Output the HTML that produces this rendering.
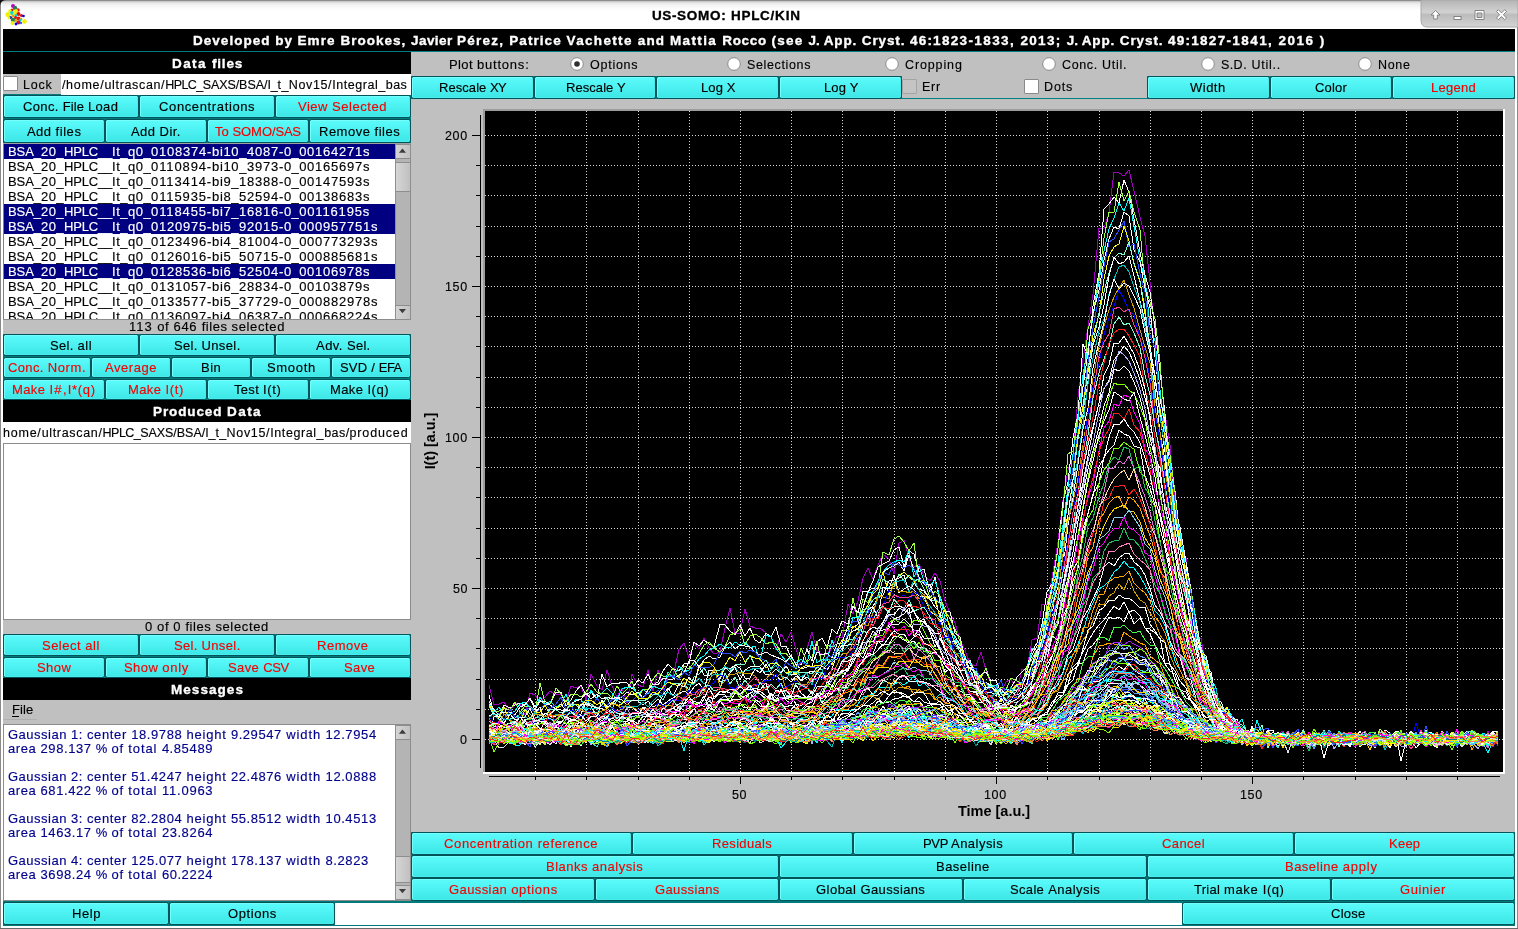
<!DOCTYPE html>
<html><head><meta charset="utf-8"><title>US-SOMO: HPLC/KIN</title><style>
html,body{margin:0;padding:0;background:#c0c0c0;}
body{width:1518px;height:929px;position:relative;overflow:hidden;font-family:"Liberation Sans",sans-serif;}
.r{position:absolute;}
.t{position:absolute;white-space:nowrap;will-change:transform;line-height:16px;height:16px;font-family:"Liberation Sans",sans-serif;}
.b{position:absolute;background:#007878;}
.b::before{content:"";position:absolute;left:0;top:0;right:0;bottom:0;box-sizing:border-box;border:1px solid #00545a;border-radius:2.5px;background:linear-gradient(#5cfbfb,#4ef2f2 45%,#3de6e6);box-shadow:inset 1px 1px 0 #74fefe, inset -1px -1px 0 #48ecec;}
.cb{position:absolute;box-sizing:border-box;width:15px;height:15px;background:#fff;border:1px solid #8a8a8a;border-radius:1px;}
</style></head><body>
<div class="r" style="left:0;top:0;width:1518px;height:929px;background:#c0c0c0"></div>
<div class="r" style="left:0;top:0;width:1518px;height:29px;background:linear-gradient(#6e6e6e 0px,#c9c9c9 1.5px,#e9e9e9 3px,#f6f6f6 6px,#fff 10px,#fff 29px)"></div>
<div class="t" style="left:651.50px;top:7.62px;font-size:13.5px;color:#000;font-weight:bold;-webkit-text-stroke:0.35px;"><span style="letter-spacing:0.583px">US-</span><span style="letter-spacing:0.751px">SOMO: </span><span style="letter-spacing:0.700px">HPLC/</span><span style="letter-spacing:0.917px">KIN</span></div>
<div class="r" style="left:3px;top:29px;width:1512px;height:22px;background:#000;"></div>
<div class="t" style="left:192.75px;top:33.02px;font-size:13.5px;color:#fff;font-weight:bold;-webkit-text-stroke:0.35px;"><span style="letter-spacing:1.031px">Developed </span><span style="letter-spacing:0.861px">by </span><span style="letter-spacing:1.130px">Emre </span><span style="letter-spacing:0.973px">Brookes, </span><span style="letter-spacing:0.486px">Javier </span><span style="letter-spacing:1.240px">Pérez, </span><span style="letter-spacing:1.056px">Patrice </span><span style="letter-spacing:1.334px">Vachette </span><span style="letter-spacing:1.095px">and </span><span style="letter-spacing:1.351px">Mattia </span><span style="letter-spacing:0.698px">Rocco </span><span style="letter-spacing:1.276px">(see </span><span style="letter-spacing:0.017px">J. </span><span style="letter-spacing:0.882px">App. </span><span style="letter-spacing:0.882px">Cryst. </span><span style="letter-spacing:1.194px">46:</span><span style="letter-spacing:1.328px">1823-</span><span style="letter-spacing:1.442px">1833, </span><span style="letter-spacing:1.318px">2013; </span><span style="letter-spacing:0.017px">J. </span><span style="letter-spacing:0.882px">App. </span><span style="letter-spacing:0.882px">Cryst. </span><span style="letter-spacing:1.194px">49:</span><span style="letter-spacing:1.328px">1827-</span><span style="letter-spacing:1.442px">1841, </span><span style="letter-spacing:1.477px">2016 </span><span style="letter-spacing:1.529px">)</span></div>
<div class="r" style="left:3px;top:51px;width:1512px;height:1px;background:#008080;"></div>
<div class="r" style="left:3px;top:52px;width:408px;height:22px;background:#000;"></div>
<div class="t" style="left:171.50px;top:55.82px;font-size:13.5px;color:#fff;font-weight:bold;-webkit-text-stroke:0.35px;"><span style="letter-spacing:1.398px">Data </span><span style="letter-spacing:0.798px">files</span></div>
<div class="r" style="left:3px;top:74px;width:58px;height:21px;background:#c0c0c0;"></div>
<div class="cb" style="left:3px;top:76px"></div>
<div class="t" style="left:23.00px;top:76.67px;font-size:12.5px;color:#000;-webkit-text-stroke:0.15px;letter-spacing:0.749px;">Lock</div>
<div class="r" style="left:3px;top:94px;width:408px;height:49px;background:#007a7a;"></div>
<div class="r" style="left:61px;top:74px;width:350px;height:21px;background:#fff;"></div>
<div class="t" style="left:62.00px;top:76.67px;font-size:12.5px;color:#000;-webkit-text-stroke:0.15px;"><span style="letter-spacing:0.574px">/</span><span style="letter-spacing:0.741px">home/</span><span style="letter-spacing:0.651px">ultrascan/</span><span style="letter-spacing:-0.572px">HPLC_</span><span style="letter-spacing:-0.080px">SAXS/</span><span style="letter-spacing:-0.039px">BSA/</span><span style="letter-spacing:-0.153px">I_</span><span style="letter-spacing:0.353px">t_</span><span style="letter-spacing:0.650px">Nov15/</span><span style="letter-spacing:0.553px">Integral_</span><span style="letter-spacing:0.365px">bas</span></div>
<div class="b" style="left:3px;top:95px;width:136px;height:23px"></div>
<div class="t" style="left:23.36px;top:99.10px;font-size:13px;color:#000;-webkit-text-stroke:0.15px;"><span style="letter-spacing:0.345px">Conc. </span><span style="letter-spacing:0.134px">File </span><span style="letter-spacing:0.373px">Load</span></div>
<div class="b" style="left:139px;top:95px;width:136px;height:23px"></div>
<div class="t" style="left:158.88px;top:99.10px;font-size:13px;color:#000;-webkit-text-stroke:0.15px;letter-spacing:0.629px;">Concentrations</div>
<div class="b" style="left:275px;top:95px;width:136px;height:23px"></div>
<div class="t" style="left:298.49px;top:99.10px;font-size:13px;color:#f40000;-webkit-text-stroke:0.15px;"><span style="letter-spacing:0.508px">View </span><span style="letter-spacing:0.543px">Selected</span></div>
<div class="b" style="left:3px;top:119px;width:102px;height:24px"></div>
<div class="t" style="left:26.78px;top:123.60px;font-size:13px;color:#000;-webkit-text-stroke:0.15px;"><span style="letter-spacing:0.452px">Add </span><span style="letter-spacing:0.556px">files</span></div>
<div class="b" style="left:105px;top:119px;width:102px;height:24px"></div>
<div class="t" style="left:131.05px;top:123.60px;font-size:13px;color:#000;-webkit-text-stroke:0.15px;"><span style="letter-spacing:0.452px">Add </span><span style="letter-spacing:0.465px">Dir.</span></div>
<div class="b" style="left:207px;top:119px;width:102px;height:24px"></div>
<div class="t" style="left:215.22px;top:123.60px;font-size:13px;color:#f40000;-webkit-text-stroke:0.15px;"><span style="letter-spacing:0.009px">To </span><span style="letter-spacing:-0.026px">SOMO/</span><span style="letter-spacing:-0.343px">SAS</span></div>
<div class="b" style="left:309px;top:119px;width:102px;height:24px"></div>
<div class="t" style="left:319.32px;top:123.60px;font-size:13px;color:#000;-webkit-text-stroke:0.15px;"><span style="letter-spacing:0.491px">Remove </span><span style="letter-spacing:0.556px">files</span></div>
<div class="r" style="left:3px;top:143px;width:408px;height:1px;background:#a0a0a0;"></div>
<div class="r" style="left:3px;top:144px;width:392px;height:176px;background:#fff;"></div>
<div class="r" style="left:3px;top:144px;width:1px;height:176px;background:#808080;"></div>
<div class="r" style="left:4px;top:144px;width:391px;height:176px;overflow:hidden">
<div class="r" style="left:0;top:0px;width:391px;height:15px;background:#000080"></div>
<div class="r" style="left:0;top:60px;width:391px;height:15px;background:#000080"></div>
<div class="r" style="left:0;top:75px;width:391px;height:15px;background:#000080"></div>
<div class="r" style="left:0;top:120px;width:391px;height:15px;background:#000080"></div>
<div class="t" style="left:3.50px;top:0.20px;font-size:13px;color:#fff;-webkit-text-stroke:0.15px;"><span style="letter-spacing:-0.061px">BSA_</span><span style="letter-spacing:0.437px">20_</span><span style="letter-spacing:-0.189px">HPLC__</span><span style="letter-spacing:0.516px">It_</span><span style="letter-spacing:0.437px">q0_</span><span style="letter-spacing:0.758px">0108374-</span><span style="letter-spacing:0.639px">bi10_</span><span style="letter-spacing:0.751px">4087-</span><span style="letter-spacing:0.271px">0_</span><span style="letter-spacing:0.741px">00164271s</span></div>
<div class="t" style="left:3.50px;top:15.20px;font-size:13px;color:#000;-webkit-text-stroke:0.15px;"><span style="letter-spacing:-0.061px">BSA_</span><span style="letter-spacing:0.437px">20_</span><span style="letter-spacing:-0.189px">HPLC__</span><span style="letter-spacing:0.516px">It_</span><span style="letter-spacing:0.437px">q0_</span><span style="letter-spacing:0.879px">0110894-</span><span style="letter-spacing:0.639px">bi10_</span><span style="letter-spacing:0.751px">3973-</span><span style="letter-spacing:0.271px">0_</span><span style="letter-spacing:0.741px">00165697s</span></div>
<div class="t" style="left:3.50px;top:30.20px;font-size:13px;color:#000;-webkit-text-stroke:0.15px;"><span style="letter-spacing:-0.061px">BSA_</span><span style="letter-spacing:0.437px">20_</span><span style="letter-spacing:-0.189px">HPLC__</span><span style="letter-spacing:0.516px">It_</span><span style="letter-spacing:0.437px">q0_</span><span style="letter-spacing:0.879px">0113414-</span><span style="letter-spacing:0.606px">bi9_</span><span style="letter-spacing:0.754px">18388-</span><span style="letter-spacing:0.271px">0_</span><span style="letter-spacing:0.741px">00147593s</span></div>
<div class="t" style="left:3.50px;top:45.20px;font-size:13px;color:#000;-webkit-text-stroke:0.15px;"><span style="letter-spacing:-0.061px">BSA_</span><span style="letter-spacing:0.437px">20_</span><span style="letter-spacing:-0.189px">HPLC__</span><span style="letter-spacing:0.516px">It_</span><span style="letter-spacing:0.437px">q0_</span><span style="letter-spacing:0.879px">0115935-</span><span style="letter-spacing:0.606px">bi8_</span><span style="letter-spacing:0.754px">52594-</span><span style="letter-spacing:0.271px">0_</span><span style="letter-spacing:0.741px">00138683s</span></div>
<div class="t" style="left:3.50px;top:60.20px;font-size:13px;color:#fff;-webkit-text-stroke:0.15px;"><span style="letter-spacing:-0.061px">BSA_</span><span style="letter-spacing:0.437px">20_</span><span style="letter-spacing:-0.189px">HPLC__</span><span style="letter-spacing:0.516px">It_</span><span style="letter-spacing:0.437px">q0_</span><span style="letter-spacing:0.879px">0118455-</span><span style="letter-spacing:0.606px">bi7_</span><span style="letter-spacing:0.754px">16816-</span><span style="letter-spacing:0.271px">0_</span><span style="letter-spacing:0.848px">00116195s</span></div>
<div class="t" style="left:3.50px;top:75.20px;font-size:13px;color:#fff;-webkit-text-stroke:0.15px;"><span style="letter-spacing:-0.061px">BSA_</span><span style="letter-spacing:0.437px">20_</span><span style="letter-spacing:-0.189px">HPLC__</span><span style="letter-spacing:0.516px">It_</span><span style="letter-spacing:0.437px">q0_</span><span style="letter-spacing:0.758px">0120975-</span><span style="letter-spacing:0.606px">bi5_</span><span style="letter-spacing:0.754px">92015-</span><span style="letter-spacing:0.271px">0_</span><span style="letter-spacing:0.744px">000957751s</span></div>
<div class="t" style="left:3.50px;top:90.20px;font-size:13px;color:#000;-webkit-text-stroke:0.15px;"><span style="letter-spacing:-0.061px">BSA_</span><span style="letter-spacing:0.437px">20_</span><span style="letter-spacing:-0.189px">HPLC__</span><span style="letter-spacing:0.516px">It_</span><span style="letter-spacing:0.437px">q0_</span><span style="letter-spacing:0.758px">0123496-</span><span style="letter-spacing:0.606px">bi4_</span><span style="letter-spacing:0.754px">81004-</span><span style="letter-spacing:0.271px">0_</span><span style="letter-spacing:0.744px">000773293s</span></div>
<div class="t" style="left:3.50px;top:105.20px;font-size:13px;color:#000;-webkit-text-stroke:0.15px;"><span style="letter-spacing:-0.061px">BSA_</span><span style="letter-spacing:0.437px">20_</span><span style="letter-spacing:-0.189px">HPLC__</span><span style="letter-spacing:0.516px">It_</span><span style="letter-spacing:0.437px">q0_</span><span style="letter-spacing:0.758px">0126016-</span><span style="letter-spacing:0.606px">bi5_</span><span style="letter-spacing:0.754px">50715-</span><span style="letter-spacing:0.271px">0_</span><span style="letter-spacing:0.744px">000885681s</span></div>
<div class="t" style="left:3.50px;top:120.20px;font-size:13px;color:#fff;-webkit-text-stroke:0.15px;"><span style="letter-spacing:-0.061px">BSA_</span><span style="letter-spacing:0.437px">20_</span><span style="letter-spacing:-0.189px">HPLC__</span><span style="letter-spacing:0.516px">It_</span><span style="letter-spacing:0.437px">q0_</span><span style="letter-spacing:0.758px">0128536-</span><span style="letter-spacing:0.606px">bi6_</span><span style="letter-spacing:0.754px">52504-</span><span style="letter-spacing:0.271px">0_</span><span style="letter-spacing:0.741px">00106978s</span></div>
<div class="t" style="left:3.50px;top:135.20px;font-size:13px;color:#000;-webkit-text-stroke:0.15px;"><span style="letter-spacing:-0.061px">BSA_</span><span style="letter-spacing:0.437px">20_</span><span style="letter-spacing:-0.189px">HPLC__</span><span style="letter-spacing:0.516px">It_</span><span style="letter-spacing:0.437px">q0_</span><span style="letter-spacing:0.758px">0131057-</span><span style="letter-spacing:0.606px">bi6_</span><span style="letter-spacing:0.754px">28834-</span><span style="letter-spacing:0.271px">0_</span><span style="letter-spacing:0.741px">00103879s</span></div>
<div class="t" style="left:3.50px;top:150.20px;font-size:13px;color:#000;-webkit-text-stroke:0.15px;"><span style="letter-spacing:-0.061px">BSA_</span><span style="letter-spacing:0.437px">20_</span><span style="letter-spacing:-0.189px">HPLC__</span><span style="letter-spacing:0.516px">It_</span><span style="letter-spacing:0.437px">q0_</span><span style="letter-spacing:0.758px">0133577-</span><span style="letter-spacing:0.606px">bi5_</span><span style="letter-spacing:0.754px">37729-</span><span style="letter-spacing:0.271px">0_</span><span style="letter-spacing:0.744px">000882978s</span></div>
<div class="t" style="left:3.50px;top:165.20px;font-size:13px;color:#000;-webkit-text-stroke:0.15px;"><span style="letter-spacing:-0.061px">BSA_</span><span style="letter-spacing:0.437px">20_</span><span style="letter-spacing:-0.189px">HPLC__</span><span style="letter-spacing:0.516px">It_</span><span style="letter-spacing:0.437px">q0_</span><span style="letter-spacing:0.758px">0136097-</span><span style="letter-spacing:0.606px">bi4_</span><span style="letter-spacing:0.754px">06387-</span><span style="letter-spacing:0.271px">0_</span><span style="letter-spacing:0.744px">000668224s</span></div>
</div>
<div class="r" style="left:395px;top:144px;width:16px;height:176px;background:#b4b4b4;box-sizing:border-box;border:1px solid #8e8e8e"></div>
<div class="r" style="left:395px;top:144px;width:16px;height:15px;background:linear-gradient(90deg,#d4d4d4,#c2c2c2);box-sizing:border-box;border:1px solid #8e8e8e"></div>
<div class="r" style="left:395px;top:305px;width:16px;height:15px;background:linear-gradient(90deg,#d4d4d4,#c2c2c2);box-sizing:border-box;border:1px solid #8e8e8e"></div>
<div class="r" style="left:395px;top:162px;width:16px;height:30px;background:linear-gradient(90deg,#d6d6d6,#c0c0c0);box-sizing:border-box;border:1px solid #8e8e8e"></div>
<svg class="r" style="left:395px;top:144px" width="16" height="176"><path d="M3.9 8.7 L7.45 4.6 L11 8.7 Z" fill="#3c3c3c"/><path d="M3.9 165.1 L7.45 169.3 L11 165.1 Z" fill="#3c3c3c"/></svg>
<div class="r" style="left:3px;top:319px;width:393px;height:1px;background:#8c8c8c;"></div>
<div class="r" style="left:3px;top:320px;width:408px;height:14px;background:#c0c0c0;"></div>
<div class="t" style="left:128.98px;top:318.60px;font-size:13px;color:#000;-webkit-text-stroke:0.15px;"><span style="letter-spacing:0.966px">113 </span><span style="letter-spacing:0.596px">of </span><span style="letter-spacing:0.725px">646 </span><span style="letter-spacing:0.532px">files </span><span style="letter-spacing:0.634px">selected</span></div>
<div class="r" style="left:3px;top:334px;width:408px;height:66px;background:#007a7a;"></div>
<div class="b" style="left:3px;top:334px;width:136px;height:22px"></div>
<div class="t" style="left:49.89px;top:337.60px;font-size:13px;color:#000;-webkit-text-stroke:0.15px;"><span style="letter-spacing:0.279px">Sel. </span><span style="letter-spacing:0.601px">all</span></div>
<div class="b" style="left:139px;top:334px;width:136px;height:22px"></div>
<div class="t" style="left:173.67px;top:337.60px;font-size:13px;color:#000;-webkit-text-stroke:0.15px;"><span style="letter-spacing:0.279px">Sel. </span><span style="letter-spacing:0.399px">Unsel.</span></div>
<div class="b" style="left:275px;top:334px;width:136px;height:22px"></div>
<div class="t" style="left:315.79px;top:337.60px;font-size:13px;color:#000;-webkit-text-stroke:0.15px;"><span style="letter-spacing:0.475px">Adv. </span><span style="letter-spacing:0.246px">Sel.</span></div>
<div class="b" style="left:3px;top:357px;width:88px;height:21px"></div>
<div class="t" style="left:7.89px;top:360.10px;font-size:13px;color:#f40000;-webkit-text-stroke:0.15px;"><span style="letter-spacing:0.345px">Conc. </span><span style="letter-spacing:0.637px">Norm.</span></div>
<div class="b" style="left:91px;top:357px;width:80px;height:21px"></div>
<div class="t" style="left:104.98px;top:360.10px;font-size:13px;color:#f40000;-webkit-text-stroke:0.15px;letter-spacing:0.551px;">Average</div>
<div class="b" style="left:171px;top:357px;width:80px;height:21px"></div>
<div class="t" style="left:200.88px;top:360.10px;font-size:13px;color:#000;-webkit-text-stroke:0.15px;letter-spacing:0.486px;">Bin</div>
<div class="b" style="left:251px;top:357px;width:80px;height:21px"></div>
<div class="t" style="left:266.56px;top:360.10px;font-size:13px;color:#000;-webkit-text-stroke:0.15px;letter-spacing:0.681px;">Smooth</div>
<div class="b" style="left:331px;top:357px;width:80px;height:21px"></div>
<div class="t" style="left:340.20px;top:360.10px;font-size:13px;color:#000;-webkit-text-stroke:0.15px;"><span style="letter-spacing:0.203px">SVD / </span><span style="letter-spacing:-0.582px">EFA</span></div>
<div class="b" style="left:3px;top:379px;width:102px;height:21px"></div>
<div class="t" style="left:12.10px;top:382.10px;font-size:13px;color:#f40000;-webkit-text-stroke:0.15px;"><span style="letter-spacing:0.403px">Make </span><span style="letter-spacing:1.307px">I#,</span><span style="letter-spacing:0.692px">I*(q)</span></div>
<div class="b" style="left:105px;top:379px;width:102px;height:21px"></div>
<div class="t" style="left:127.99px;top:382.10px;font-size:13px;color:#f40000;-webkit-text-stroke:0.15px;"><span style="letter-spacing:0.403px">Make </span><span style="letter-spacing:0.680px">I(t)</span></div>
<div class="b" style="left:207px;top:379px;width:102px;height:21px"></div>
<div class="t" style="left:234.21px;top:382.10px;font-size:13px;color:#000;-webkit-text-stroke:0.15px;"><span style="letter-spacing:0.305px">Test </span><span style="letter-spacing:0.680px">I(t)</span></div>
<div class="b" style="left:309px;top:379px;width:102px;height:21px"></div>
<div class="t" style="left:330.45px;top:382.10px;font-size:13px;color:#000;-webkit-text-stroke:0.15px;"><span style="letter-spacing:0.403px">Make </span><span style="letter-spacing:0.545px">I(q)</span></div>
<div class="r" style="left:3px;top:400px;width:408px;height:22px;background:#000;"></div>
<div class="t" style="left:152.50px;top:403.82px;font-size:13.5px;color:#fff;font-weight:bold;-webkit-text-stroke:0.35px;"><span style="letter-spacing:0.888px">Produced </span><span style="letter-spacing:1.435px">Data</span></div>
<div class="r" style="left:3px;top:422px;width:408px;height:21px;background:#fff;"></div>
<div class="t" style="left:2.52px;top:425.07px;font-size:12.5px;color:#000;-webkit-text-stroke:0.15px;"><span style="letter-spacing:0.774px">home/</span><span style="letter-spacing:0.677px">ultrascan/</span><span style="letter-spacing:-0.541px">HPLC_</span><span style="letter-spacing:-0.050px">SAXS/</span><span style="letter-spacing:-0.010px">BSA/</span><span style="letter-spacing:-0.132px">I_</span><span style="letter-spacing:0.376px">t_</span><span style="letter-spacing:0.681px">Nov15/</span><span style="letter-spacing:0.579px">Integral_</span><span style="letter-spacing:0.444px">bas/</span><span style="letter-spacing:0.851px">produced</span></div>
<div class="r" style="left:3px;top:443px;width:408px;height:177px;background:#fff;box-sizing:border-box;border:1px solid #8c8c8c"></div>
<div class="r" style="left:3px;top:620px;width:408px;height:14px;background:#c0c0c0;"></div>
<div class="t" style="left:145.10px;top:618.60px;font-size:13px;color:#000;-webkit-text-stroke:0.15px;"><span style="letter-spacing:0.620px">0 </span><span style="letter-spacing:0.596px">of </span><span style="letter-spacing:0.620px">0 </span><span style="letter-spacing:0.532px">files </span><span style="letter-spacing:0.634px">selected</span></div>
<div class="r" style="left:3px;top:634px;width:408px;height:44px;background:#007a7a;"></div>
<div class="b" style="left:3px;top:634px;width:136px;height:22px"></div>
<div class="t" style="left:42.04px;top:637.60px;font-size:13px;color:#f40000;-webkit-text-stroke:0.15px;"><span style="letter-spacing:0.482px">Select </span><span style="letter-spacing:0.601px">all</span></div>
<div class="b" style="left:139px;top:634px;width:136px;height:22px"></div>
<div class="t" style="left:173.67px;top:637.60px;font-size:13px;color:#f40000;-webkit-text-stroke:0.15px;"><span style="letter-spacing:0.279px">Sel. </span><span style="letter-spacing:0.399px">Unsel.</span></div>
<div class="b" style="left:275px;top:634px;width:136px;height:22px"></div>
<div class="t" style="left:317.28px;top:637.60px;font-size:13px;color:#f40000;-webkit-text-stroke:0.15px;letter-spacing:0.504px;">Remove</div>
<div class="b" style="left:3px;top:657px;width:102px;height:21px"></div>
<div class="t" style="left:36.91px;top:660.10px;font-size:13px;color:#f40000;-webkit-text-stroke:0.15px;letter-spacing:0.417px;">Show</div>
<div class="b" style="left:105px;top:657px;width:102px;height:21px"></div>
<div class="t" style="left:123.50px;top:660.10px;font-size:13px;color:#f40000;-webkit-text-stroke:0.15px;"><span style="letter-spacing:0.416px">Show </span><span style="letter-spacing:0.738px">only</span></div>
<div class="b" style="left:207px;top:657px;width:102px;height:21px"></div>
<div class="t" style="left:227.65px;top:660.10px;font-size:13px;color:#f40000;-webkit-text-stroke:0.15px;"><span style="letter-spacing:0.378px">Save </span><span style="letter-spacing:-0.389px">CSV</span></div>
<div class="b" style="left:309px;top:657px;width:102px;height:21px"></div>
<div class="t" style="left:344.45px;top:660.10px;font-size:13px;color:#f40000;-webkit-text-stroke:0.15px;letter-spacing:0.370px;">Save</div>
<div class="r" style="left:3px;top:678px;width:408px;height:22px;background:#000;"></div>
<div class="t" style="left:170.50px;top:681.52px;font-size:13.5px;color:#fff;font-weight:bold;-webkit-text-stroke:0.35px;letter-spacing:1.058px;">Messages</div>
<div class="r" style="left:3px;top:700px;width:408px;height:24px;background:#c0c0c0;"></div>
<div class="t" style="left:12.00px;top:701.80px;font-size:13px;color:#000;-webkit-text-stroke:0.15px;letter-spacing:0.065px;">File</div>
<div class="r" style="left:12px;top:716px;width:7px;height:1px;background:#000;"></div>
<div class="r" style="left:3px;top:719px;width:34px;height:1px;background:#b0b0b0;"></div>
<div class="r" style="left:3px;top:724px;width:408px;height:177px;background:#fff;box-sizing:border-box;border:1px solid #8c8c8c"></div>
<div class="t" style="left:8.30px;top:727.00px;font-size:13px;color:#00008c;-webkit-text-stroke:0.15px;"><span style="letter-spacing:0.508px">Gaussian </span><span style="letter-spacing:0.441px">1: </span><span style="letter-spacing:0.662px">center </span><span style="letter-spacing:0.550px">18.</span><span style="letter-spacing:0.594px">9788 </span><span style="letter-spacing:0.763px">height </span><span style="letter-spacing:0.496px">9.</span><span style="letter-spacing:0.604px">29547 </span><span style="letter-spacing:0.914px">width </span><span style="letter-spacing:0.550px">12.</span><span style="letter-spacing:0.659px">7954</span></div>
<div class="t" style="left:8.30px;top:741.00px;font-size:13px;color:#00008c;-webkit-text-stroke:0.15px;"><span style="letter-spacing:0.582px">area </span><span style="letter-spacing:0.577px">298.</span><span style="letter-spacing:0.577px">137 </span><span style="letter-spacing:0.302px">% </span><span style="letter-spacing:0.770px">of </span><span style="letter-spacing:0.890px">total </span><span style="letter-spacing:0.496px">4.</span><span style="letter-spacing:0.659px">85489</span></div>
<div class="t" style="left:8.30px;top:769.00px;font-size:13px;color:#00008c;-webkit-text-stroke:0.15px;"><span style="letter-spacing:0.508px">Gaussian </span><span style="letter-spacing:0.441px">2: </span><span style="letter-spacing:0.662px">center </span><span style="letter-spacing:0.550px">51.</span><span style="letter-spacing:0.594px">4247 </span><span style="letter-spacing:0.763px">height </span><span style="letter-spacing:0.550px">22.</span><span style="letter-spacing:0.594px">4876 </span><span style="letter-spacing:0.914px">width </span><span style="letter-spacing:0.550px">12.</span><span style="letter-spacing:0.659px">0888</span></div>
<div class="t" style="left:8.30px;top:783.00px;font-size:13px;color:#00008c;-webkit-text-stroke:0.15px;"><span style="letter-spacing:0.582px">area </span><span style="letter-spacing:0.577px">681.</span><span style="letter-spacing:0.577px">422 </span><span style="letter-spacing:0.302px">% </span><span style="letter-spacing:0.770px">of </span><span style="letter-spacing:0.890px">total </span><span style="letter-spacing:0.872px">11.</span><span style="letter-spacing:0.659px">0963</span></div>
<div class="t" style="left:8.30px;top:811.00px;font-size:13px;color:#00008c;-webkit-text-stroke:0.15px;"><span style="letter-spacing:0.508px">Gaussian </span><span style="letter-spacing:0.441px">3: </span><span style="letter-spacing:0.662px">center </span><span style="letter-spacing:0.550px">82.</span><span style="letter-spacing:0.594px">2804 </span><span style="letter-spacing:0.763px">height </span><span style="letter-spacing:0.550px">55.</span><span style="letter-spacing:0.594px">8512 </span><span style="letter-spacing:0.914px">width </span><span style="letter-spacing:0.550px">10.</span><span style="letter-spacing:0.659px">4513</span></div>
<div class="t" style="left:8.30px;top:825.00px;font-size:13px;color:#00008c;-webkit-text-stroke:0.15px;"><span style="letter-spacing:0.582px">area </span><span style="letter-spacing:0.594px">1463.</span><span style="letter-spacing:0.550px">17 </span><span style="letter-spacing:0.302px">% </span><span style="letter-spacing:0.770px">of </span><span style="letter-spacing:0.890px">total </span><span style="letter-spacing:0.550px">23.</span><span style="letter-spacing:0.659px">8264</span></div>
<div class="t" style="left:8.30px;top:853.00px;font-size:13px;color:#00008c;-webkit-text-stroke:0.15px;"><span style="letter-spacing:0.508px">Gaussian </span><span style="letter-spacing:0.441px">4: </span><span style="letter-spacing:0.662px">center </span><span style="letter-spacing:0.577px">125.</span><span style="letter-spacing:0.577px">077 </span><span style="letter-spacing:0.763px">height </span><span style="letter-spacing:0.577px">178.</span><span style="letter-spacing:0.577px">137 </span><span style="letter-spacing:0.914px">width </span><span style="letter-spacing:0.496px">8.</span><span style="letter-spacing:0.659px">2823</span></div>
<div class="t" style="left:8.30px;top:867.00px;font-size:13px;color:#00008c;-webkit-text-stroke:0.15px;"><span style="letter-spacing:0.582px">area </span><span style="letter-spacing:0.594px">3698.</span><span style="letter-spacing:0.550px">24 </span><span style="letter-spacing:0.302px">% </span><span style="letter-spacing:0.770px">of </span><span style="letter-spacing:0.890px">total </span><span style="letter-spacing:0.550px">60.</span><span style="letter-spacing:0.659px">2224</span></div>
<div class="r" style="left:395px;top:725px;width:16px;height:175px;background:#b4b4b4;box-sizing:border-box;border:1px solid #8e8e8e"></div>
<div class="r" style="left:395px;top:725px;width:16px;height:15px;background:linear-gradient(90deg,#d4d4d4,#c2c2c2);box-sizing:border-box;border:1px solid #8e8e8e"></div>
<div class="r" style="left:395px;top:885px;width:16px;height:15px;background:linear-gradient(90deg,#d4d4d4,#c2c2c2);box-sizing:border-box;border:1px solid #8e8e8e"></div>
<div class="r" style="left:395px;top:856px;width:16px;height:27px;background:linear-gradient(90deg,#d6d6d6,#c0c0c0);box-sizing:border-box;border:1px solid #8e8e8e"></div>
<svg class="r" style="left:395px;top:725px" width="16" height="175"><path d="M3.9 8.7 L7.45 4.6 L11 8.7 Z" fill="#3c3c3c"/><path d="M3.9 164.1 L7.45 168.3 L11 164.1 Z" fill="#3c3c3c"/></svg>
<div class="r" style="left:3px;top:901px;width:1512px;height:25px;background:#007a7a;"></div>
<div class="b" style="left:3px;top:902px;width:166px;height:23px"></div>
<div class="t" style="left:71.55px;top:906.10px;font-size:13px;color:#000;-webkit-text-stroke:0.15px;letter-spacing:0.541px;">Help</div>
<div class="b" style="left:169px;top:902px;width:166px;height:23px"></div>
<div class="t" style="left:227.56px;top:906.10px;font-size:13px;color:#000;-webkit-text-stroke:0.15px;letter-spacing:0.584px;">Options</div>
<div class="r" style="left:335px;top:903px;width:847px;height:22px;background:#fff;"></div>
<div class="b" style="left:1182px;top:902px;width:333px;height:23px"></div>
<div class="t" style="left:1331.24px;top:906.10px;font-size:13px;color:#000;-webkit-text-stroke:0.15px;letter-spacing:0.257px;">Close</div>
<div class="r" style="left:411px;top:52px;width:1104px;height:23px;background:#c0c0c0;"></div>
<div class="t" style="left:449.00px;top:56.80px;font-size:13px;color:#000;-webkit-text-stroke:0.15px;"><span style="letter-spacing:0.379px">Plot </span><span style="letter-spacing:0.800px">buttons:</span></div>
<svg class="r" style="left:569px;top:56px" width="16" height="16"><circle cx="8" cy="8" r="6.3" fill="#fff" stroke="#8a8a8a" stroke-width="1"/><circle cx="8" cy="8" r="2.8" fill="#303030"/></svg>
<div class="t" style="left:590.00px;top:56.97px;font-size:12.5px;color:#000;-webkit-text-stroke:0.15px;letter-spacing:0.746px;">Options</div>
<svg class="r" style="left:726px;top:56px" width="16" height="16"><circle cx="8" cy="8" r="6.3" fill="#fff" stroke="#8a8a8a" stroke-width="1"/></svg>
<div class="t" style="left:747.00px;top:56.97px;font-size:12.5px;color:#000;-webkit-text-stroke:0.15px;letter-spacing:0.638px;">Selections</div>
<svg class="r" style="left:884px;top:56px" width="16" height="16"><circle cx="8" cy="8" r="6.3" fill="#fff" stroke="#8a8a8a" stroke-width="1"/></svg>
<div class="t" style="left:905.00px;top:56.97px;font-size:12.5px;color:#000;-webkit-text-stroke:0.15px;letter-spacing:0.878px;">Cropping</div>
<svg class="r" style="left:1041px;top:56px" width="16" height="16"><circle cx="8" cy="8" r="6.3" fill="#fff" stroke="#8a8a8a" stroke-width="1"/></svg>
<div class="t" style="left:1062.00px;top:56.97px;font-size:12.5px;color:#000;-webkit-text-stroke:0.15px;"><span style="letter-spacing:0.629px">Conc. </span><span style="letter-spacing:0.735px">Util.</span></div>
<svg class="r" style="left:1199.5px;top:56px" width="16" height="16"><circle cx="8" cy="8" r="6.3" fill="#fff" stroke="#8a8a8a" stroke-width="1"/></svg>
<div class="t" style="left:1220.50px;top:56.97px;font-size:12.5px;color:#000;-webkit-text-stroke:0.15px;"><span style="letter-spacing:0.395px">S.</span><span style="letter-spacing:0.626px">D. </span><span style="letter-spacing:0.733px">Util..</span></div>
<svg class="r" style="left:1357px;top:56px" width="16" height="16"><circle cx="8" cy="8" r="6.3" fill="#fff" stroke="#8a8a8a" stroke-width="1"/></svg>
<div class="t" style="left:1378.00px;top:56.97px;font-size:12.5px;color:#000;-webkit-text-stroke:0.15px;letter-spacing:0.667px;">None</div>
<div class="r" style="left:411px;top:75px;width:1104px;height:24px;background:#c0c0c0;"></div>
<div class="r" style="left:411px;top:98px;width:1104px;height:1px;background:#008080;"></div>
<div class="b" style="left:411px;top:76px;width:123px;height:23px"></div>
<div class="t" style="left:438.83px;top:80.10px;font-size:13px;color:#000;-webkit-text-stroke:0.15px;"><span style="letter-spacing:0.064px">Rescale </span><span style="letter-spacing:-0.713px">XY</span></div>
<div class="b" style="left:534px;top:76px;width:122px;height:23px"></div>
<div class="t" style="left:565.71px;top:80.10px;font-size:13px;color:#000;-webkit-text-stroke:0.15px;"><span style="letter-spacing:0.064px">Rescale </span><span style="letter-spacing:-1.170px">Y</span></div>
<div class="b" style="left:656px;top:76px;width:123px;height:23px"></div>
<div class="t" style="left:700.54px;top:80.10px;font-size:13px;color:#000;-webkit-text-stroke:0.15px;"><span style="letter-spacing:0.135px">Log </span><span style="letter-spacing:-0.255px">X</span></div>
<div class="b" style="left:779px;top:76px;width:123px;height:23px"></div>
<div class="t" style="left:823.66px;top:80.10px;font-size:13px;color:#000;-webkit-text-stroke:0.15px;"><span style="letter-spacing:0.135px">Log </span><span style="letter-spacing:-1.170px">Y</span></div>
<div class="b" style="left:1147px;top:76px;width:123px;height:23px"></div>
<div class="t" style="left:1190.49px;top:80.10px;font-size:13px;color:#000;-webkit-text-stroke:0.15px;letter-spacing:0.492px;">Width</div>
<div class="b" style="left:1270px;top:76px;width:122px;height:23px"></div>
<div class="t" style="left:1314.96px;top:80.10px;font-size:13px;color:#000;-webkit-text-stroke:0.15px;letter-spacing:0.201px;">Color</div>
<div class="b" style="left:1392px;top:76px;width:123px;height:23px"></div>
<div class="t" style="left:1431.10px;top:80.10px;font-size:13px;color:#f40000;-webkit-text-stroke:0.15px;letter-spacing:0.291px;">Legend</div>
<div class="cb" style="left:902px;top:79px;background:#c4c4c4;border-color:#a4a4a4"></div>
<div class="t" style="left:922.00px;top:79.37px;font-size:12.5px;color:#000;-webkit-text-stroke:0.15px;letter-spacing:0.746px;">Err</div>
<div class="cb" style="left:1024px;top:79px"></div>
<div class="t" style="left:1044.00px;top:79.37px;font-size:12.5px;color:#000;-webkit-text-stroke:0.15px;letter-spacing:0.865px;">Dots</div>
<div class="r" style="left:483px;top:109px;width:1022px;height:665px;background:#fff;"></div>
<div class="r" style="left:483px;top:109px;width:1020px;height:663px;background:#9c9c9c;"></div>
<div class="r" style="left:485px;top:111px;width:1018px;height:661px;background:#000;"></div>
<div class="r" style="left:411px;top:832px;width:1104px;height:69px;background:#007a7a;"></div>
<div class="b" style="left:411px;top:832px;width:221px;height:23px"></div>
<div class="t" style="left:444.31px;top:836.10px;font-size:13px;color:#f40000;-webkit-text-stroke:0.15px;"><span style="letter-spacing:0.651px">Concentration </span><span style="letter-spacing:0.623px">reference</span></div>
<div class="b" style="left:632px;top:832px;width:221px;height:23px"></div>
<div class="t" style="left:712.14px;top:836.10px;font-size:13px;color:#f40000;-webkit-text-stroke:0.15px;letter-spacing:0.337px;">Residuals</div>
<div class="b" style="left:853px;top:832px;width:220px;height:23px"></div>
<div class="t" style="left:922.91px;top:836.10px;font-size:13px;color:#000;-webkit-text-stroke:0.15px;"><span style="letter-spacing:-0.351px">PVP </span><span style="letter-spacing:0.473px">Analysis</span></div>
<div class="b" style="left:1073px;top:832px;width:221px;height:23px"></div>
<div class="t" style="left:1162.33px;top:836.10px;font-size:13px;color:#f40000;-webkit-text-stroke:0.15px;letter-spacing:0.411px;">Cancel</div>
<div class="b" style="left:1294px;top:832px;width:221px;height:23px"></div>
<div class="t" style="left:1388.93px;top:836.10px;font-size:13px;color:#f40000;-webkit-text-stroke:0.15px;letter-spacing:0.245px;">Keep</div>
<div class="b" style="left:411px;top:855px;width:368px;height:23px"></div>
<div class="t" style="left:546.36px;top:859.10px;font-size:13px;color:#f40000;-webkit-text-stroke:0.15px;"><span style="letter-spacing:0.478px">Blanks </span><span style="letter-spacing:0.541px">analysis</span></div>
<div class="b" style="left:779px;top:855px;width:368px;height:23px"></div>
<div class="t" style="left:936.13px;top:859.10px;font-size:13px;color:#000;-webkit-text-stroke:0.15px;letter-spacing:0.483px;">Baseline</div>
<div class="b" style="left:1147px;top:855px;width:368px;height:23px"></div>
<div class="t" style="left:1284.69px;top:859.10px;font-size:13px;color:#f40000;-webkit-text-stroke:0.15px;"><span style="letter-spacing:0.475px">Baseline </span><span style="letter-spacing:0.759px">apply</span></div>
<div class="b" style="left:411px;top:878px;width:184px;height:23px"></div>
<div class="t" style="left:448.59px;top:882.10px;font-size:13px;color:#f40000;-webkit-text-stroke:0.15px;"><span style="letter-spacing:0.403px">Gaussian </span><span style="letter-spacing:0.678px">options</span></div>
<div class="b" style="left:595px;top:878px;width:184px;height:23px"></div>
<div class="t" style="left:654.63px;top:882.10px;font-size:13px;color:#f40000;-webkit-text-stroke:0.15px;letter-spacing:0.368px;">Gaussians</div>
<div class="b" style="left:779px;top:878px;width:184px;height:23px"></div>
<div class="t" style="left:816.41px;top:882.10px;font-size:13px;color:#000;-webkit-text-stroke:0.15px;"><span style="letter-spacing:0.467px">Global </span><span style="letter-spacing:0.368px">Gaussians</span></div>
<div class="b" style="left:963px;top:878px;width:184px;height:23px"></div>
<div class="t" style="left:1009.85px;top:882.10px;font-size:13px;color:#000;-webkit-text-stroke:0.15px;"><span style="letter-spacing:0.331px">Scale </span><span style="letter-spacing:0.473px">Analysis</span></div>
<div class="b" style="left:1147px;top:878px;width:184px;height:23px"></div>
<div class="t" style="left:1193.79px;top:882.10px;font-size:13px;color:#000;-webkit-text-stroke:0.15px;"><span style="letter-spacing:0.253px">Trial </span><span style="letter-spacing:0.684px">make </span><span style="letter-spacing:0.545px">I(q)</span></div>
<div class="b" style="left:1331px;top:878px;width:184px;height:23px"></div>
<div class="t" style="left:1400.03px;top:882.10px;font-size:13px;color:#f40000;-webkit-text-stroke:0.15px;letter-spacing:0.575px;">Guinier</div>
<svg class="r" style="left:0;top:0" width="1518" height="929" viewBox="0 0 1518 929"><defs><clipPath id="cv"><rect x="485" y="111" width="1018" height="661"/></clipPath></defs>
<path d="M485 739.5H1503M485 709.5H1503M485 679.5H1503M485 648.5H1503M485 618.5H1503M485 588.5H1503M485 558.5H1503M485 528.5H1503M485 497.5H1503M485 467.5H1503M485 437.5H1503M485 407.5H1503M485 377.5H1503M485 346.5H1503M485 316.5H1503M485 286.5H1503M485 256.5H1503M485 226.5H1503M485 195.5H1503M485 165.5H1503M485 135.5H1503M535.5 111V772M586.5 111V772M638.5 111V772M689.5 111V772M740.5 111V772M791.5 111V772M842.5 111V772M894.5 111V772M945.5 111V772M996.5 111V772M1047.5 111V772M1099.5 111V772M1150.5 111V772M1201.5 111V772M1252.5 111V772M1303.5 111V772M1355.5 111V772M1406.5 111V772M1457.5 111V772" stroke="#d8d8d8" stroke-width="1" stroke-dasharray="1 2" fill="none" shape-rendering="crispEdges"/>
<path d="M480.5 115V768M472 739.5H481M476 709.5H481M476 679.5H481M476 648.5H481M476 618.5H481M472 588.5H481M476 558.5H481M476 528.5H481M476 497.5H481M476 467.5H481M472 437.5H481M476 407.5H481M476 377.5H481M476 346.5H481M476 316.5H481M472 286.5H481M476 256.5H481M476 226.5H481M476 195.5H481M476 165.5H481M472 135.5H481M489 776.5H1500M535.5 776V780M586.5 776V780M638.5 776V780M689.5 776V780M740.5 776V784M791.5 776V780M842.5 776V780M894.5 776V780M945.5 776V780M996.5 776V784M1047.5 776V780M1099.5 776V780M1150.5 776V780M1201.5 776V780M1252.5 776V784M1303.5 776V780M1355.5 776V780M1406.5 776V780M1457.5 776V780" stroke="#000" stroke-width="1" fill="none" shape-rendering="crispEdges"/>
<g clip-path="url(#cv)">
<polyline fill="none" stroke-width="1" shape-rendering="crispEdges" points="489,685 494,705 499,704 504,702 510,711 515,704 520,703 525,715 530,693 535,695 540,702 545,697 550,691 556,695 561,694 566,702 571,686 576,688 581,686 586,700 591,674 597,686 602,690 607,670 612,686 617,697 622,688 627,703 632,674 638,685 643,687 648,670 653,691 658,670 663,690 668,675 673,676 679,649 684,643 689,658 694,643 699,649 704,638 709,648 714,654 720,652 725,628 730,608 735,633 740,633 745,609 750,626 755,628 760,628 766,633 771,637 776,650 781,634 786,642 791,632 796,649 801,665 807,649 812,632 817,651 822,654 827,654 832,648 837,636 842,638 848,604 853,614 858,601 863,578 868,568 873,579 878,565 883,554 889,559 894,574 899,543 904,540 909,559 914,567 919,564 924,576 930,581 935,573 940,581 945,601 950,613 955,623 960,640 965,650 970,664 976,666 981,652 986,670 991,684 996,688 1001,692 1006,682 1011,679 1017,691 1022,669 1027,669 1032,640 1037,638 1042,604 1047,605 1052,578 1058,542 1063,500 1068,470 1073,457 1078,397 1083,359 1088,327 1093,294 1099,228 1104,228 1109,213 1114,172 1119,173 1124,176 1129,170 1134,191 1140,217 1145,236 1150,282 1155,334 1160,371 1165,414 1170,445 1175,501 1180,547 1186,558 1191,605 1196,638 1201,638 1206,668 1211,675 1216,697 1221,712 1227,721 1232,723 1237,727 1242,734 1247,733 1252,742 1257,736 1262,745 1268,738 1273,735 1278,734 1283,731 1288,745 1293,736 1298,734 1303,735 1309,743 1314,737 1319,732 1324,745 1329,737 1334,735 1339,742 1344,737 1350,743 1355,742 1360,742 1365,738 1370,739 1375,735 1380,743 1385,740 1390,735 1396,737 1401,744 1406,736 1411,741 1416,737 1421,738 1426,734 1431,739 1437,746 1442,744 1447,736 1452,740 1457,735 1462,738 1467,742 1472,735 1478,742 1483,747 1488,731 1493,747 1498,737" stroke="#a000c0"/>
<polyline fill="none" stroke-width="1" shape-rendering="crispEdges" points="489,695 494,713 499,717 504,705 510,708 515,705 520,703 525,705 530,698 535,707 540,700 545,704 550,704 556,692 561,692 566,706 571,700 576,691 581,685 586,695 591,692 597,699 602,674 607,687 612,683 617,684 622,682 627,683 632,689 638,680 643,683 648,674 653,685 658,682 663,671 668,664 673,669 679,671 684,664 689,663 694,642 699,646 704,640 709,644 714,647 720,624 725,625 730,631 735,635 740,625 745,636 750,628 755,640 760,643 766,633 771,637 776,627 781,646 786,646 791,657 796,664 801,665 807,649 812,661 817,642 822,638 827,648 832,629 837,634 842,621 848,624 853,606 858,613 863,591 868,592 873,581 878,567 883,564 889,561 894,550 899,547 904,567 909,551 914,554 919,572 924,569 930,592 935,577 940,602 945,611 950,612 955,633 960,637 965,659 970,664 976,677 981,675 986,672 991,681 996,680 1001,693 1006,692 1011,688 1017,677 1022,672 1027,667 1032,651 1037,643 1042,624 1047,592 1052,584 1058,548 1063,502 1068,482 1073,438 1078,414 1083,344 1088,356 1093,306 1099,273 1104,209 1109,204 1114,197 1119,203 1124,180 1129,192 1134,219 1140,252 1145,275 1150,292 1155,328 1160,371 1165,414 1170,471 1175,491 1180,538 1186,562 1191,589 1196,625 1201,651 1206,656 1211,677 1216,697 1221,722 1227,713 1232,717 1237,720 1242,732 1247,735 1252,736 1257,732 1262,741 1268,738 1273,742 1278,737 1283,744 1288,737 1293,741 1298,740 1303,737 1309,735 1314,745 1319,736 1324,732 1329,740 1334,734 1339,738 1344,735 1350,741 1355,742 1360,735 1365,732 1370,737 1375,736 1380,741 1385,743 1390,740 1396,734 1401,761 1406,741 1411,745 1416,739 1421,736 1426,743 1431,740 1437,735 1442,739 1447,743 1452,743 1457,746 1462,736 1467,741 1472,736 1478,736 1483,741 1488,741 1493,736 1498,739" stroke="#ffffff"/>
<polyline fill="none" stroke-width="1" shape-rendering="crispEdges" points="489,702 494,711 499,711 504,708 510,710 515,702 520,712 525,706 530,706 535,713 540,683 545,703 550,704 556,688 561,694 566,702 571,694 576,694 581,697 586,692 591,684 597,692 602,694 607,693 612,698 617,686 622,694 627,689 632,681 638,698 643,689 648,690 653,679 658,673 663,676 668,676 673,668 679,678 684,666 689,669 694,662 699,654 704,645 709,642 714,648 720,652 725,647 730,635 735,633 740,629 745,645 750,636 755,634 760,637 766,644 771,642 776,644 781,653 786,653 791,660 796,669 801,648 807,662 812,657 817,641 822,665 827,645 832,647 837,644 842,630 848,630 853,598 858,621 863,599 868,603 873,591 878,587 883,552 889,555 894,539 899,536 904,542 909,551 914,543 919,582 924,580 930,598 935,591 940,596 945,610 950,619 955,629 960,641 965,663 970,661 976,674 981,678 986,668 991,684 996,694 1001,687 1006,690 1011,678 1017,681 1022,684 1027,666 1032,659 1037,650 1042,643 1047,605 1052,588 1058,548 1063,508 1068,454 1073,451 1078,415 1083,386 1088,329 1093,315 1099,277 1104,238 1109,212 1114,212 1119,182 1124,201 1129,191 1134,212 1140,230 1145,286 1150,302 1155,319 1160,362 1165,423 1170,455 1175,492 1180,547 1186,569 1191,590 1196,620 1201,648 1206,672 1211,683 1216,697 1221,712 1227,725 1232,723 1237,735 1242,731 1247,739 1252,727 1257,737 1262,734 1268,737 1273,736 1278,736 1283,738 1288,733 1293,736 1298,741 1303,742 1309,735 1314,738 1319,740 1324,745 1329,742 1334,742 1339,736 1344,739 1350,739 1355,738 1360,737 1365,738 1370,738 1375,740 1380,738 1385,736 1390,737 1396,736 1401,736 1406,738 1411,741 1416,734 1421,738 1426,739 1431,741 1437,744 1442,740 1447,742 1452,743 1457,738 1462,733 1467,743 1472,734 1478,741 1483,746 1488,738 1493,738 1498,733" stroke="#a0ff40"/>
<polyline fill="none" stroke-width="1" shape-rendering="crispEdges" points="489,701 494,712 499,707 504,714 510,714 515,711 520,704 525,702 530,708 535,710 540,697 545,705 550,701 556,707 561,704 566,694 571,707 576,699 581,699 586,711 591,690 597,698 602,693 607,688 612,693 617,700 622,689 627,687 632,687 638,694 643,689 648,694 653,686 658,688 663,688 668,672 673,678 679,666 684,672 689,670 694,666 699,659 704,656 709,650 714,648 720,644 725,647 730,648 735,642 740,645 745,642 750,648 755,646 760,660 766,635 771,637 776,648 781,655 786,661 791,658 796,663 801,659 807,664 812,641 817,663 822,659 827,661 832,640 837,652 842,645 848,636 853,617 858,618 863,608 868,593 873,592 878,581 883,572 889,565 894,562 899,560 904,562 909,551 914,577 919,566 924,581 930,586 935,580 940,597 945,618 950,625 955,639 960,646 965,658 970,663 976,676 981,681 986,683 991,687 996,685 1001,694 1006,689 1011,692 1017,685 1022,682 1027,672 1032,648 1037,653 1042,627 1047,613 1052,585 1058,563 1063,525 1068,487 1073,454 1078,420 1083,375 1088,348 1093,317 1099,281 1104,251 1109,229 1114,218 1119,203 1124,211 1129,198 1134,226 1140,260 1145,279 1150,325 1155,341 1160,390 1165,433 1170,463 1175,508 1180,533 1186,571 1191,593 1196,621 1201,650 1206,664 1211,679 1216,688 1221,712 1227,708 1232,716 1237,725 1242,719 1247,733 1252,735 1257,740 1262,735 1268,734 1273,740 1278,743 1283,732 1288,741 1293,733 1298,738 1303,737 1309,739 1314,746 1319,739 1324,737 1329,737 1334,741 1339,731 1344,738 1350,739 1355,743 1360,745 1365,742 1370,738 1375,740 1380,737 1385,733 1390,736 1396,744 1401,733 1406,735 1411,740 1416,741 1421,744 1426,740 1431,738 1437,741 1442,739 1447,740 1452,739 1457,741 1462,739 1467,733 1472,734 1478,739 1483,743 1488,753 1493,741 1498,737" stroke="#00ffff"/>
<polyline fill="none" stroke-width="1" shape-rendering="crispEdges" points="489,702 494,710 499,715 504,712 510,712 515,715 520,707 525,705 530,698 535,710 540,701 545,701 550,705 556,709 561,704 566,711 571,704 576,701 581,699 586,693 591,699 597,694 602,699 607,697 612,699 617,697 622,697 627,692 632,695 638,692 643,698 648,690 653,684 658,685 663,678 668,679 673,679 679,675 684,673 689,661 694,660 699,667 704,660 709,656 714,659 720,657 725,647 730,642 735,649 740,645 745,646 750,647 755,652 760,655 766,652 771,655 776,657 781,659 786,662 791,655 796,665 801,669 807,667 812,666 817,652 822,655 827,653 832,658 837,644 842,643 848,626 853,628 858,624 863,608 868,591 873,588 878,589 883,572 889,568 894,566 899,562 904,571 909,555 914,570 919,577 924,584 930,584 935,601 940,616 945,624 950,631 955,636 960,645 965,666 970,660 976,679 981,684 986,682 991,686 996,692 1001,697 1006,693 1011,690 1017,690 1022,683 1027,671 1032,655 1037,646 1042,641 1047,612 1052,587 1058,573 1063,533 1068,494 1073,470 1078,437 1083,387 1088,352 1093,313 1099,290 1104,260 1109,239 1114,227 1119,229 1124,212 1129,216 1134,250 1140,262 1145,288 1150,308 1155,357 1160,399 1165,422 1170,472 1175,510 1180,527 1186,562 1191,604 1196,623 1201,649 1206,671 1211,672 1216,699 1221,702 1227,716 1232,717 1237,722 1242,730 1247,733 1252,735 1257,732 1262,737 1268,737 1273,741 1278,741 1283,733 1288,736 1293,739 1298,732 1303,738 1309,736 1314,738 1319,737 1324,758 1329,741 1334,743 1339,735 1344,742 1350,732 1355,738 1360,744 1365,744 1370,739 1375,744 1380,743 1385,744 1390,747 1396,739 1401,741 1406,738 1411,731 1416,741 1421,738 1426,741 1431,741 1437,739 1442,737 1447,741 1452,738 1457,743 1462,742 1467,732 1472,740 1478,738 1483,744 1488,734 1493,740 1498,735" stroke="#ffffff"/>
<polyline fill="none" stroke-width="1" shape-rendering="crispEdges" points="489,703 494,717 499,713 504,720 510,709 515,717 520,717 525,711 530,707 535,713 540,709 545,704 550,709 556,704 561,697 566,709 571,703 576,717 581,704 586,700 591,707 597,698 602,706 607,706 612,699 617,701 622,696 627,702 632,701 638,695 643,698 648,692 653,695 658,690 663,695 668,677 673,676 679,680 684,672 689,676 694,665 699,668 704,667 709,668 714,664 720,652 725,654 730,653 735,657 740,651 745,653 750,650 755,652 760,658 766,661 771,664 776,659 781,674 786,662 791,666 796,668 801,662 807,665 812,668 817,667 822,664 827,657 832,656 837,648 842,648 848,633 853,621 858,621 863,611 868,613 873,593 878,583 883,572 889,575 894,562 899,565 904,568 909,565 914,569 919,579 924,582 930,590 935,598 940,604 945,624 950,640 955,646 960,646 965,665 970,668 976,668 981,681 986,683 991,692 996,689 1001,680 1006,694 1011,688 1017,690 1022,683 1027,674 1032,666 1037,652 1042,628 1047,624 1052,593 1058,574 1063,539 1068,497 1073,468 1078,432 1083,404 1088,362 1093,328 1099,297 1104,267 1109,242 1114,239 1119,230 1124,221 1129,247 1134,244 1140,274 1145,292 1150,335 1155,348 1160,407 1165,435 1170,470 1175,501 1180,545 1186,572 1191,593 1196,629 1201,649 1206,666 1211,680 1216,695 1221,710 1227,715 1232,716 1237,734 1242,733 1247,734 1252,733 1257,727 1262,730 1268,728 1273,740 1278,737 1283,732 1288,742 1293,741 1298,746 1303,732 1309,742 1314,744 1319,739 1324,741 1329,740 1334,738 1339,739 1344,732 1350,737 1355,745 1360,736 1365,739 1370,739 1375,737 1380,735 1385,746 1390,739 1396,743 1401,740 1406,741 1411,736 1416,736 1421,737 1426,739 1431,741 1437,742 1442,744 1447,731 1452,741 1457,738 1462,742 1467,737 1472,742 1478,741 1483,739 1488,738 1493,742 1498,743" stroke="#3050ff"/>
<polyline fill="none" stroke-width="1" shape-rendering="crispEdges" points="489,704 494,714 499,718 504,707 510,721 515,723 520,723 525,709 530,719 535,713 540,712 545,705 550,715 556,708 561,706 566,701 571,707 576,704 581,706 586,700 591,700 597,705 602,701 607,709 612,702 617,706 622,704 627,697 632,691 638,698 643,699 648,698 653,692 658,694 663,687 668,682 673,684 679,686 684,678 689,682 694,684 699,668 704,662 709,662 714,667 720,679 725,665 730,657 735,661 740,652 745,662 750,656 755,658 760,659 766,668 771,663 776,663 781,667 786,673 791,671 796,674 801,668 807,665 812,667 817,665 822,665 827,660 832,665 837,650 842,640 848,642 853,626 858,629 863,613 868,605 873,594 878,589 883,572 889,595 894,582 899,576 904,572 909,577 914,581 919,590 924,595 930,600 935,597 940,618 945,610 950,628 955,644 960,648 965,656 970,675 976,683 981,675 986,688 991,687 996,690 1001,702 1006,692 1011,691 1017,684 1022,685 1027,675 1032,665 1037,655 1042,631 1047,615 1052,589 1058,569 1063,536 1068,515 1073,479 1078,435 1083,406 1088,372 1093,335 1099,315 1104,279 1109,256 1114,247 1119,244 1124,226 1129,241 1134,264 1140,282 1145,314 1150,345 1155,380 1160,409 1165,438 1170,473 1175,513 1180,541 1186,574 1191,611 1196,634 1201,650 1206,666 1211,680 1216,703 1221,716 1227,707 1232,723 1237,723 1242,730 1247,738 1252,729 1257,734 1262,732 1268,736 1273,742 1278,739 1283,735 1288,741 1293,738 1298,735 1303,744 1309,740 1314,739 1319,736 1324,736 1329,742 1334,737 1339,741 1344,738 1350,738 1355,740 1360,736 1365,735 1370,744 1375,737 1380,740 1385,740 1390,739 1396,735 1401,740 1406,740 1411,744 1416,740 1421,739 1426,743 1431,740 1437,737 1442,734 1447,740 1452,732 1457,735 1462,736 1467,737 1472,739 1478,741 1483,739 1488,739 1493,738 1498,733" stroke="#ffff00"/>
<polyline fill="none" stroke-width="1" shape-rendering="crispEdges" points="489,706 494,715 499,714 504,720 510,719 515,718 520,714 525,709 530,714 535,719 540,715 545,717 550,709 556,710 561,713 566,710 571,704 576,705 581,709 586,703 591,704 597,708 602,705 607,697 612,709 617,700 622,704 627,700 632,701 638,700 643,701 648,699 653,695 658,694 663,700 668,690 673,684 679,683 684,684 689,690 694,677 699,674 704,668 709,676 714,670 720,670 725,667 730,672 735,665 740,664 745,664 750,655 755,666 760,666 766,660 771,669 776,662 781,667 786,673 791,675 796,672 801,673 807,672 812,674 817,667 822,670 827,665 832,659 837,659 842,648 848,640 853,639 858,632 863,610 868,608 873,600 878,596 883,579 889,583 894,587 899,574 904,581 909,575 914,581 919,579 924,589 930,600 935,600 940,603 945,628 950,630 955,643 960,652 965,668 970,675 976,671 981,683 986,690 991,684 996,689 1001,693 1006,700 1011,694 1017,685 1022,695 1027,686 1032,672 1037,652 1042,640 1047,620 1052,599 1058,574 1063,540 1068,496 1073,479 1078,439 1083,414 1088,368 1093,343 1099,313 1104,292 1109,273 1114,258 1119,253 1124,255 1129,242 1134,263 1140,281 1145,309 1150,350 1155,375 1160,415 1165,450 1170,482 1175,516 1180,549 1186,579 1191,608 1196,631 1201,647 1206,660 1211,680 1216,699 1221,706 1227,712 1232,718 1237,722 1242,725 1247,731 1252,736 1257,742 1262,733 1268,735 1273,741 1278,738 1283,740 1288,740 1293,733 1298,740 1303,730 1309,739 1314,742 1319,739 1324,730 1329,740 1334,737 1339,747 1344,737 1350,744 1355,739 1360,734 1365,740 1370,736 1375,740 1380,740 1385,734 1390,735 1396,739 1401,739 1406,742 1411,745 1416,739 1421,740 1426,738 1431,735 1437,736 1442,742 1447,738 1452,738 1457,740 1462,747 1467,742 1472,739 1478,736 1483,740 1488,744 1493,734 1498,739" stroke="#80ffd0"/>
<polyline fill="none" stroke-width="1" shape-rendering="crispEdges" points="489,716 494,713 499,719 504,723 510,714 515,720 520,717 525,723 530,726 535,713 540,707 545,723 550,714 556,709 561,710 566,710 571,710 576,713 581,704 586,704 591,706 597,717 602,700 607,707 612,704 617,698 622,700 627,705 632,700 638,701 643,705 648,701 653,707 658,705 663,695 668,688 673,696 679,684 684,687 689,677 694,684 699,666 704,675 709,676 714,672 720,679 725,668 730,669 735,665 740,668 745,678 750,678 755,669 760,673 766,664 771,674 776,669 781,673 786,666 791,674 796,674 801,680 807,673 812,671 817,672 822,666 827,670 832,662 837,654 842,651 848,636 853,631 858,629 863,623 868,610 873,606 878,598 883,595 889,581 894,580 899,578 904,575 909,592 914,583 919,589 924,591 930,599 935,607 940,612 945,637 950,642 955,641 960,649 965,668 970,667 976,675 981,691 986,692 991,692 996,696 1001,689 1006,695 1011,692 1017,695 1022,693 1027,683 1032,664 1037,650 1042,647 1047,626 1052,616 1058,572 1063,557 1068,515 1073,480 1078,461 1083,424 1088,381 1093,345 1099,327 1104,305 1109,276 1114,257 1119,264 1124,262 1129,256 1134,276 1140,301 1145,321 1150,347 1155,376 1160,415 1165,452 1170,496 1175,518 1180,550 1186,579 1191,609 1196,633 1201,650 1206,673 1211,692 1216,695 1221,710 1227,717 1232,720 1237,728 1242,730 1247,737 1252,730 1257,741 1262,732 1268,742 1273,741 1278,740 1283,736 1288,738 1293,741 1298,743 1303,735 1309,739 1314,738 1319,740 1324,741 1329,737 1334,738 1339,735 1344,738 1350,744 1355,736 1360,739 1365,740 1370,746 1375,742 1380,738 1385,741 1390,738 1396,741 1401,739 1406,742 1411,737 1416,738 1421,740 1426,746 1431,743 1437,736 1442,740 1447,745 1452,740 1457,739 1462,737 1467,738 1472,738 1478,742 1483,745 1488,741 1493,734 1498,744" stroke="#ffffff"/>
<polyline fill="none" stroke-width="1" shape-rendering="crispEdges" points="489,717 494,714 499,720 504,720 510,719 515,726 520,712 525,717 530,720 535,712 540,719 545,718 550,719 556,714 561,716 566,711 571,714 576,710 581,709 586,708 591,708 597,709 602,713 607,717 612,707 617,714 622,706 627,706 632,707 638,706 643,702 648,707 653,701 658,696 663,695 668,692 673,696 679,693 684,682 689,685 694,684 699,678 704,684 709,679 714,674 720,675 725,666 730,670 735,667 740,674 745,670 750,670 755,668 760,669 766,672 771,670 776,665 781,675 786,679 791,672 796,671 801,677 807,673 812,685 817,672 822,672 827,658 832,662 837,650 842,652 848,646 853,640 858,635 863,624 868,608 873,613 878,598 883,588 889,587 894,582 899,581 904,580 909,593 914,579 919,590 924,600 930,606 935,613 940,618 945,636 950,645 955,655 960,653 965,670 970,673 976,685 981,686 986,693 991,698 996,692 1001,698 1006,702 1011,687 1017,698 1022,694 1027,689 1032,666 1037,660 1042,644 1047,623 1052,606 1058,579 1063,546 1068,524 1073,489 1078,458 1083,425 1088,384 1093,358 1099,331 1104,319 1109,294 1114,279 1119,267 1124,265 1129,272 1134,287 1140,303 1145,327 1150,352 1155,399 1160,417 1165,447 1170,485 1175,527 1180,561 1186,586 1191,605 1196,634 1201,665 1206,687 1211,686 1216,689 1221,715 1227,719 1232,722 1237,726 1242,727 1247,739 1252,734 1257,738 1262,734 1268,736 1273,734 1278,743 1283,743 1288,741 1293,741 1298,741 1303,743 1309,741 1314,745 1319,736 1324,741 1329,743 1334,738 1339,745 1344,738 1350,740 1355,733 1360,737 1365,742 1370,736 1375,739 1380,737 1385,750 1390,741 1396,741 1401,735 1406,743 1411,738 1416,740 1421,744 1426,741 1431,737 1437,740 1442,740 1447,739 1452,739 1457,738 1462,739 1467,744 1472,740 1478,739 1483,733 1488,743 1493,734 1498,741" stroke="#00c0c0"/>
<polyline fill="none" stroke-width="1" shape-rendering="crispEdges" points="489,734 494,717 499,716 504,725 510,723 515,723 520,717 525,717 530,708 535,721 540,720 545,713 550,716 556,716 561,715 566,709 571,712 576,716 581,714 586,702 591,706 597,708 602,708 607,713 612,709 617,713 622,715 627,708 632,707 638,712 643,707 648,709 653,704 658,699 663,705 668,701 673,698 679,694 684,691 689,694 694,687 699,683 704,691 709,670 714,671 720,682 725,680 730,673 735,667 740,680 745,670 750,667 755,666 760,667 766,675 771,674 776,676 781,680 786,677 791,682 796,676 801,681 807,677 812,682 817,673 822,678 827,676 832,670 837,652 842,645 848,645 853,644 858,644 863,625 868,619 873,607 878,618 883,587 889,589 894,575 899,593 904,589 909,586 914,590 919,596 924,597 930,611 935,615 940,620 945,635 950,642 955,654 960,666 965,658 970,669 976,685 981,696 986,687 991,687 996,691 1001,697 1006,701 1011,700 1017,690 1022,688 1027,674 1032,677 1037,659 1042,639 1047,633 1052,607 1058,587 1063,570 1068,525 1073,498 1078,464 1083,429 1088,408 1093,368 1099,342 1104,322 1109,296 1114,279 1119,289 1124,283 1129,286 1134,296 1140,309 1145,333 1150,353 1155,389 1160,432 1165,461 1170,498 1175,531 1180,560 1186,592 1191,607 1196,639 1201,653 1206,678 1211,687 1216,701 1221,707 1227,714 1232,720 1237,730 1242,736 1247,733 1252,733 1257,733 1262,734 1268,738 1273,743 1278,735 1283,742 1288,737 1293,743 1298,736 1303,739 1309,740 1314,733 1319,745 1324,741 1329,741 1334,735 1339,741 1344,737 1350,737 1355,738 1360,742 1365,736 1370,737 1375,734 1380,734 1385,735 1390,741 1396,740 1401,735 1406,740 1411,735 1416,741 1421,739 1426,730 1431,740 1437,735 1442,744 1447,741 1452,740 1457,743 1462,733 1467,739 1472,735 1478,737 1483,735 1488,740 1493,740 1498,743" stroke="#ffffff"/>
<polyline fill="none" stroke-width="1" shape-rendering="crispEdges" points="489,721 494,724 499,725 504,714 510,720 515,727 520,724 525,719 530,719 535,714 540,714 545,717 550,715 556,716 561,714 566,714 571,724 576,716 581,709 586,713 591,713 597,713 602,711 607,709 612,704 617,704 622,710 627,704 632,707 638,710 643,708 648,709 653,714 658,705 663,705 668,706 673,705 679,693 684,682 689,696 694,694 699,697 704,692 709,682 714,669 720,686 725,681 730,674 735,674 740,672 745,674 750,673 755,676 760,684 766,679 771,673 776,677 781,674 786,689 791,689 796,678 801,685 807,684 812,677 817,670 822,675 827,676 832,677 837,665 842,654 848,653 853,643 858,633 863,624 868,626 873,613 878,595 883,597 889,599 894,582 899,592 904,591 909,593 914,591 919,599 924,594 930,611 935,614 940,622 945,631 950,643 955,652 960,658 965,671 970,683 976,685 981,689 986,694 991,697 996,700 1001,707 1006,706 1011,696 1017,698 1022,696 1027,689 1032,672 1037,666 1042,651 1047,633 1052,607 1058,593 1063,554 1068,521 1073,502 1078,478 1083,445 1088,413 1093,378 1099,347 1104,326 1109,310 1114,297 1119,288 1124,280 1129,295 1134,308 1140,330 1145,347 1150,363 1155,408 1160,432 1165,471 1170,497 1175,538 1180,572 1186,588 1191,618 1196,642 1201,661 1206,674 1211,689 1216,699 1221,708 1227,714 1232,726 1237,727 1242,732 1247,734 1252,732 1257,729 1262,739 1268,737 1273,737 1278,738 1283,736 1288,737 1293,739 1298,738 1303,732 1309,739 1314,735 1319,736 1324,737 1329,743 1334,745 1339,741 1344,736 1350,732 1355,740 1360,736 1365,742 1370,739 1375,740 1380,741 1385,747 1390,736 1396,746 1401,733 1406,735 1411,740 1416,738 1421,744 1426,738 1431,743 1437,738 1442,732 1447,738 1452,739 1457,739 1462,746 1467,739 1472,739 1478,741 1483,737 1488,744 1493,746 1498,738" stroke="#d0a000"/>
<polyline fill="none" stroke-width="1" shape-rendering="crispEdges" points="489,717 494,722 499,723 504,724 510,726 515,729 520,721 525,726 530,723 535,722 540,719 545,721 550,719 556,719 561,716 566,715 571,710 576,713 581,717 586,713 591,711 597,717 602,716 607,723 612,708 617,712 622,707 627,718 632,721 638,709 643,713 648,708 653,711 658,703 663,706 668,703 673,699 679,701 684,698 689,690 694,693 699,690 704,686 709,686 714,683 720,675 725,677 730,687 735,689 740,683 745,689 750,691 755,684 760,684 766,680 771,680 776,674 781,687 786,687 791,684 796,681 801,686 807,688 812,694 817,678 822,679 827,668 832,662 837,657 842,657 848,657 853,651 858,635 863,631 868,617 873,618 878,610 883,607 889,590 894,595 899,598 904,595 909,600 914,591 919,595 924,606 930,612 935,627 940,622 945,638 950,637 955,657 960,661 965,667 970,675 976,685 981,686 986,693 991,698 996,705 1001,697 1006,702 1011,699 1017,698 1022,692 1027,689 1032,668 1037,662 1042,650 1047,635 1052,614 1058,598 1063,566 1068,541 1073,513 1078,483 1083,451 1088,414 1093,387 1099,364 1104,335 1109,318 1114,306 1119,290 1124,299 1129,311 1134,315 1140,338 1145,351 1150,379 1155,413 1160,440 1165,477 1170,509 1175,547 1180,577 1186,597 1191,612 1196,647 1201,661 1206,680 1211,688 1216,705 1221,711 1227,716 1232,725 1237,728 1242,732 1247,731 1252,733 1257,734 1262,736 1268,741 1273,740 1278,737 1283,739 1288,736 1293,743 1298,742 1303,742 1309,738 1314,741 1319,742 1324,738 1329,740 1334,743 1339,738 1344,739 1350,737 1355,737 1360,741 1365,740 1370,739 1375,737 1380,739 1385,736 1390,741 1396,739 1401,735 1406,744 1411,743 1416,723 1421,737 1426,736 1431,736 1437,736 1442,741 1447,739 1452,737 1457,743 1462,743 1467,741 1472,736 1478,737 1483,743 1488,741 1493,741 1498,745" stroke="#0000ff"/>
<polyline fill="none" stroke-width="1" shape-rendering="crispEdges" points="489,718 494,728 499,728 504,734 510,726 515,721 520,723 525,721 530,724 535,718 540,724 545,720 550,727 556,719 561,714 566,719 571,716 576,716 581,722 586,711 591,723 597,719 602,718 607,710 612,715 617,710 622,712 627,714 632,713 638,712 643,715 648,708 653,708 658,710 663,706 668,715 673,703 679,696 684,700 689,693 694,695 699,689 704,695 709,692 714,687 720,688 725,689 730,689 735,690 740,686 745,688 750,682 755,677 760,683 766,684 771,686 776,691 781,691 786,692 791,691 796,697 801,684 807,687 812,679 817,678 822,676 827,682 832,668 837,670 842,665 848,652 853,648 858,638 863,633 868,615 873,626 878,615 883,604 889,602 894,595 899,597 904,598 909,597 914,595 919,601 924,617 930,618 935,620 940,639 945,645 950,649 955,662 960,661 965,669 970,678 976,676 981,695 986,698 991,695 996,704 1001,709 1006,702 1011,697 1017,694 1022,683 1027,687 1032,681 1037,666 1042,655 1047,639 1052,621 1058,597 1063,572 1068,545 1073,512 1078,495 1083,452 1088,425 1093,395 1099,356 1104,342 1109,334 1114,309 1119,307 1124,312 1129,309 1134,325 1140,338 1145,358 1150,383 1155,426 1160,454 1165,489 1170,515 1175,543 1180,568 1186,597 1191,625 1196,648 1201,659 1206,677 1211,687 1216,701 1221,715 1227,716 1232,723 1237,727 1242,732 1247,733 1252,732 1257,737 1262,736 1268,740 1273,746 1278,742 1283,738 1288,737 1293,735 1298,742 1303,741 1309,734 1314,743 1319,737 1324,734 1329,737 1334,744 1339,741 1344,741 1350,736 1355,737 1360,734 1365,739 1370,738 1375,741 1380,737 1385,739 1390,735 1396,743 1401,734 1406,737 1411,746 1416,737 1421,737 1426,745 1431,741 1437,743 1442,738 1447,734 1452,741 1457,737 1462,742 1467,740 1472,736 1478,746 1483,736 1488,743 1493,736 1498,736" stroke="#ff4090"/>
<polyline fill="none" stroke-width="1" shape-rendering="crispEdges" points="489,721 494,726 499,729 504,726 510,723 515,721 520,727 525,721 530,717 535,722 540,719 545,719 550,718 556,723 561,715 566,717 571,711 576,715 581,721 586,713 591,712 597,713 602,718 607,718 612,711 617,719 622,712 627,714 632,717 638,715 643,715 648,710 653,713 658,710 663,709 668,705 673,700 679,709 684,699 689,702 694,698 699,696 704,687 709,685 714,691 720,689 725,673 730,684 735,677 740,688 745,680 750,687 755,697 760,682 766,690 771,684 776,689 781,683 786,695 791,696 796,683 801,685 807,688 812,694 817,682 822,672 827,680 832,676 837,673 842,661 848,657 853,656 858,646 863,631 868,633 873,620 878,610 883,606 889,613 894,599 899,605 904,609 909,600 914,611 919,609 924,607 930,617 935,627 940,630 945,642 950,647 955,654 960,671 965,668 970,682 976,687 981,692 986,699 991,703 996,701 1001,707 1006,703 1011,701 1017,703 1022,698 1027,688 1032,682 1037,669 1042,658 1047,644 1052,624 1058,600 1063,572 1068,559 1073,524 1078,494 1083,466 1088,435 1093,398 1099,373 1104,359 1109,346 1114,324 1119,317 1124,325 1129,323 1134,333 1140,348 1145,375 1150,395 1155,427 1160,451 1165,485 1170,514 1175,547 1180,576 1186,600 1191,621 1196,647 1201,662 1206,669 1211,695 1216,708 1221,715 1227,720 1232,724 1237,736 1242,738 1247,731 1252,740 1257,734 1262,725 1268,748 1273,736 1278,738 1283,740 1288,738 1293,739 1298,737 1303,733 1309,738 1314,743 1319,734 1324,735 1329,734 1334,738 1339,736 1344,732 1350,739 1355,741 1360,734 1365,740 1370,735 1375,741 1380,741 1385,738 1390,738 1396,742 1401,734 1406,740 1411,737 1416,742 1421,741 1426,741 1431,738 1437,738 1442,738 1447,739 1452,736 1457,736 1462,740 1467,738 1472,737 1478,737 1483,737 1488,740 1493,740 1498,739" stroke="#80ffd0"/>
<polyline fill="none" stroke-width="1" shape-rendering="crispEdges" points="489,725 494,722 499,726 504,729 510,729 515,728 520,729 525,730 530,722 535,726 540,723 545,725 550,711 556,724 561,726 566,723 571,726 576,712 581,722 586,721 591,712 597,719 602,716 607,713 612,714 617,721 622,716 627,714 632,723 638,715 643,709 648,719 653,713 658,712 663,706 668,712 673,706 679,706 684,697 689,701 694,700 699,692 704,687 709,698 714,694 720,688 725,692 730,689 735,692 740,685 745,689 750,687 755,684 760,692 766,687 771,696 776,693 781,692 786,687 791,694 796,692 801,690 807,688 812,691 817,691 822,685 827,678 832,680 837,675 842,671 848,663 853,653 858,653 863,640 868,634 873,618 878,619 883,607 889,609 894,607 899,600 904,601 909,607 914,606 919,608 924,613 930,623 935,625 940,628 945,645 950,654 955,662 960,668 965,682 970,678 976,690 981,696 986,691 991,702 996,705 1001,708 1006,708 1011,703 1017,699 1022,696 1027,691 1032,686 1037,681 1042,660 1047,646 1052,630 1058,605 1063,587 1068,548 1073,529 1078,496 1083,463 1088,442 1093,417 1099,384 1104,363 1109,343 1114,333 1119,329 1124,329 1129,336 1134,345 1140,357 1145,389 1150,407 1155,438 1160,461 1165,488 1170,525 1175,554 1180,582 1186,614 1191,627 1196,643 1201,662 1206,683 1211,700 1216,707 1221,714 1227,715 1232,721 1237,730 1242,731 1247,737 1252,732 1257,737 1262,749 1268,734 1273,738 1278,735 1283,738 1288,736 1293,738 1298,743 1303,739 1309,743 1314,739 1319,739 1324,738 1329,736 1334,735 1339,740 1344,747 1350,735 1355,738 1360,738 1365,737 1370,742 1375,738 1380,736 1385,745 1390,738 1396,734 1401,739 1406,743 1411,741 1416,739 1421,741 1426,737 1431,736 1437,733 1442,744 1447,741 1452,742 1457,738 1462,737 1467,741 1472,738 1478,737 1483,738 1488,738 1493,735 1498,735" stroke="#ff2020"/>
<polyline fill="none" stroke-width="1" shape-rendering="crispEdges" points="489,728 494,732 499,726 504,727 510,728 515,721 520,732 525,725 530,724 535,725 540,721 545,721 550,724 556,723 561,721 566,724 571,719 576,719 581,715 586,721 591,716 597,717 602,721 607,716 612,726 617,721 622,717 627,718 632,722 638,716 643,707 648,714 653,715 658,711 663,714 668,711 673,708 679,704 684,703 689,697 694,703 699,707 704,699 709,688 714,697 720,691 725,693 730,689 735,690 740,695 745,689 750,690 755,688 760,690 766,683 771,700 776,690 781,692 786,690 791,696 796,685 801,693 807,698 812,696 817,687 822,686 827,686 832,676 837,673 842,662 848,661 853,658 858,652 863,641 868,631 873,627 878,629 883,622 889,614 894,615 899,608 904,611 909,604 914,612 919,619 924,623 930,627 935,633 940,634 945,648 950,656 955,659 960,670 965,671 970,686 976,685 981,697 986,699 991,704 996,708 1001,698 1006,706 1011,702 1017,699 1022,693 1027,705 1032,681 1037,662 1042,661 1047,642 1052,636 1058,624 1063,584 1068,560 1073,540 1078,505 1083,469 1088,445 1093,427 1099,403 1104,375 1109,365 1114,343 1119,343 1124,336 1129,345 1134,354 1140,371 1145,389 1150,420 1155,450 1160,477 1165,504 1170,521 1175,548 1180,575 1186,589 1191,632 1196,642 1201,667 1206,682 1211,688 1216,704 1221,714 1227,720 1232,729 1237,729 1242,733 1247,730 1252,733 1257,740 1262,736 1268,740 1273,738 1278,742 1283,738 1288,739 1293,732 1298,736 1303,741 1309,743 1314,740 1319,734 1324,739 1329,746 1334,740 1339,742 1344,733 1350,738 1355,737 1360,739 1365,733 1370,745 1375,741 1380,745 1385,740 1390,740 1396,736 1401,735 1406,733 1411,737 1416,737 1421,741 1426,743 1431,743 1437,744 1442,735 1447,738 1452,734 1457,739 1462,737 1467,739 1472,740 1478,740 1483,734 1488,743 1493,736 1498,737" stroke="#ffffff"/>
<polyline fill="none" stroke-width="1" shape-rendering="crispEdges" points="489,726 494,723 499,724 504,728 510,726 515,727 520,726 525,730 530,727 535,720 540,721 545,724 550,723 556,725 561,722 566,717 571,719 576,720 581,723 586,723 591,732 597,721 602,716 607,718 612,723 617,720 622,722 627,721 632,713 638,714 643,712 648,716 653,709 658,719 663,708 668,711 673,708 679,711 684,704 689,701 694,704 699,702 704,705 709,697 714,699 720,692 725,691 730,693 735,693 740,686 745,691 750,685 755,692 760,691 766,696 771,698 776,702 781,689 786,700 791,704 796,695 801,697 807,699 812,700 817,694 822,693 827,683 832,678 837,675 842,672 848,668 853,654 858,657 863,642 868,642 873,631 878,637 883,623 889,610 894,607 899,606 904,608 909,613 914,611 919,622 924,619 930,632 935,647 940,638 945,650 950,664 955,666 960,671 965,681 970,684 976,682 981,695 986,697 991,707 996,705 1001,703 1006,707 1011,714 1017,702 1022,699 1027,694 1032,687 1037,681 1042,671 1047,647 1052,637 1058,604 1063,590 1068,563 1073,535 1078,506 1083,483 1088,456 1093,429 1099,403 1104,389 1109,380 1114,360 1119,354 1124,346 1129,352 1134,363 1140,380 1145,398 1150,416 1155,458 1160,468 1165,510 1170,528 1175,554 1180,584 1186,615 1191,630 1196,650 1201,672 1206,688 1211,690 1216,704 1221,711 1227,722 1232,724 1237,719 1242,734 1247,737 1252,735 1257,745 1262,738 1268,735 1273,743 1278,737 1283,738 1288,736 1293,735 1298,737 1303,741 1309,743 1314,741 1319,737 1324,738 1329,738 1334,742 1339,737 1344,744 1350,740 1355,739 1360,731 1365,742 1370,740 1375,739 1380,738 1385,734 1390,742 1396,744 1401,735 1406,737 1411,741 1416,744 1421,740 1426,738 1431,743 1437,748 1442,735 1447,737 1452,739 1457,738 1462,738 1467,744 1472,742 1478,738 1483,740 1488,736 1493,738 1498,742" stroke="#ffffff"/>
<polyline fill="none" stroke-width="1" shape-rendering="crispEdges" points="489,725 494,728 499,728 504,731 510,727 515,737 520,727 525,725 530,721 535,727 540,728 545,731 550,726 556,724 561,728 566,719 571,721 576,726 581,727 586,731 591,728 597,724 602,722 607,719 612,718 617,715 622,719 627,707 632,720 638,717 643,714 648,714 653,712 658,713 663,716 668,709 673,713 679,708 684,706 689,705 694,706 699,706 704,704 709,699 714,706 720,699 725,696 730,696 735,689 740,694 745,699 750,699 755,692 760,694 766,698 771,700 776,695 781,698 786,697 791,698 796,699 801,697 807,697 812,698 817,698 822,689 827,687 832,680 837,672 842,674 848,671 853,659 858,648 863,648 868,639 873,636 878,629 883,626 889,615 894,618 899,620 904,607 909,615 914,625 919,624 924,626 930,628 935,635 940,647 945,654 950,655 955,672 960,676 965,684 970,684 976,688 981,697 986,701 991,710 996,707 1001,705 1006,706 1011,712 1017,703 1022,698 1027,699 1032,692 1037,683 1042,669 1047,652 1052,632 1058,619 1063,590 1068,568 1073,538 1078,514 1083,488 1088,461 1093,443 1099,412 1104,388 1109,382 1114,367 1119,351 1124,355 1129,361 1134,373 1140,390 1145,409 1150,436 1155,447 1160,488 1165,504 1170,541 1175,572 1180,592 1186,621 1191,636 1196,657 1201,676 1206,684 1211,698 1216,713 1221,722 1227,719 1232,726 1237,736 1242,729 1247,734 1252,741 1257,735 1262,741 1268,740 1273,737 1278,737 1283,741 1288,738 1293,737 1298,738 1303,743 1309,735 1314,745 1319,740 1324,738 1329,741 1334,737 1339,736 1344,741 1350,741 1355,735 1360,735 1365,735 1370,746 1375,740 1380,739 1385,744 1390,743 1396,741 1401,746 1406,747 1411,737 1416,740 1421,743 1426,734 1431,744 1437,741 1442,740 1447,742 1452,739 1457,740 1462,742 1467,742 1472,736 1478,735 1483,736 1488,741 1493,737 1498,738" stroke="#b0b0ff"/>
<polyline fill="none" stroke-width="1" shape-rendering="crispEdges" points="489,725 494,726 499,726 504,735 510,735 515,726 520,724 525,734 530,731 535,727 540,721 545,725 550,729 556,726 561,723 566,716 571,723 576,724 581,722 586,724 591,716 597,717 602,724 607,729 612,724 617,722 622,727 627,721 632,726 638,723 643,716 648,717 653,716 658,716 663,720 668,717 673,715 679,706 684,711 689,708 694,701 699,704 704,696 709,709 714,697 720,694 725,695 730,702 735,693 740,695 745,699 750,693 755,690 760,694 766,699 771,693 776,698 781,700 786,697 791,696 796,696 801,697 807,698 812,691 817,698 822,699 827,682 832,686 837,677 842,670 848,671 853,660 858,655 863,653 868,641 873,642 878,631 883,630 889,628 894,619 899,617 904,614 909,608 914,636 919,630 924,621 930,630 935,639 940,649 945,660 950,663 955,666 960,679 965,685 970,691 976,693 981,701 986,700 991,704 996,707 1001,707 1006,707 1011,710 1017,709 1022,703 1027,696 1032,689 1037,682 1042,672 1047,660 1052,633 1058,623 1063,597 1068,578 1073,552 1078,521 1083,495 1088,469 1093,451 1099,427 1104,406 1109,393 1114,369 1119,371 1124,366 1129,371 1134,382 1140,398 1145,418 1150,438 1155,457 1160,491 1165,523 1170,539 1175,569 1180,594 1186,619 1191,639 1196,658 1201,669 1206,688 1211,697 1216,709 1221,716 1227,724 1232,731 1237,732 1242,733 1247,737 1252,742 1257,734 1262,743 1268,730 1273,739 1278,735 1283,740 1288,740 1293,739 1298,738 1303,744 1309,735 1314,734 1319,736 1324,739 1329,741 1334,744 1339,737 1344,741 1350,742 1355,733 1360,736 1365,742 1370,741 1375,740 1380,741 1385,740 1390,738 1396,731 1401,733 1406,737 1411,742 1416,738 1421,740 1426,744 1431,735 1437,736 1442,737 1447,740 1452,746 1457,743 1462,741 1467,743 1472,744 1478,739 1483,743 1488,733 1493,738 1498,736" stroke="#ffffff"/>
<polyline fill="none" stroke-width="1" shape-rendering="crispEdges" points="489,728 494,724 499,729 504,739 510,727 515,729 520,730 525,730 530,726 535,725 540,724 545,722 550,728 556,720 561,716 566,724 571,723 576,722 581,719 586,728 591,720 597,725 602,723 607,726 612,720 617,723 622,720 627,717 632,720 638,716 643,721 648,726 653,719 658,717 663,716 668,721 673,718 679,714 684,711 689,710 694,703 699,704 704,704 709,704 714,708 720,700 725,701 730,698 735,691 740,698 745,690 750,700 755,700 760,702 766,698 771,707 776,699 781,699 786,698 791,700 796,698 801,698 807,699 812,697 817,698 822,694 827,684 832,690 837,677 842,673 848,676 853,671 858,660 863,650 868,647 873,636 878,635 883,635 889,623 894,619 899,622 904,622 909,627 914,620 919,620 924,631 930,643 935,649 940,650 945,662 950,666 955,676 960,678 965,689 970,687 976,690 981,695 986,710 991,703 996,708 1001,708 1006,709 1011,707 1017,706 1022,703 1027,699 1032,694 1037,679 1042,672 1047,659 1052,638 1058,621 1063,603 1068,580 1073,564 1078,535 1083,506 1088,478 1093,453 1099,438 1104,416 1109,397 1114,383 1119,385 1124,384 1129,390 1134,394 1140,406 1145,420 1150,448 1155,466 1160,495 1165,521 1170,553 1175,566 1180,598 1186,615 1191,637 1196,659 1201,676 1206,684 1211,701 1216,711 1221,718 1227,724 1232,728 1237,725 1242,732 1247,730 1252,734 1257,737 1262,739 1268,742 1273,737 1278,739 1283,739 1288,739 1293,737 1298,741 1303,743 1309,741 1314,745 1319,738 1324,734 1329,741 1334,736 1339,733 1344,740 1350,737 1355,737 1360,734 1365,738 1370,741 1375,741 1380,742 1385,740 1390,737 1396,737 1401,741 1406,737 1411,745 1416,739 1421,735 1426,739 1431,740 1437,735 1442,735 1447,739 1452,746 1457,737 1462,733 1467,742 1472,732 1478,742 1483,735 1488,736 1493,736 1498,741" stroke="#7fff00"/>
<polyline fill="none" stroke-width="1" shape-rendering="crispEdges" points="489,730 494,730 499,734 504,731 510,733 515,733 520,728 525,719 530,734 535,723 540,729 545,728 550,724 556,726 561,733 566,725 571,720 576,720 581,724 586,726 591,727 597,726 602,723 607,722 612,718 617,721 622,716 627,720 632,720 638,724 643,721 648,713 653,722 658,713 663,715 668,714 673,715 679,710 684,718 689,715 694,709 699,703 704,707 709,701 714,705 720,700 725,699 730,701 735,699 740,699 745,696 750,693 755,699 760,703 766,710 771,694 776,702 781,698 786,699 791,697 796,704 801,706 807,700 812,698 817,697 822,694 827,697 832,694 837,683 842,678 848,669 853,663 858,653 863,658 868,647 873,644 878,641 883,641 889,624 894,624 899,624 904,619 909,624 914,630 919,630 924,638 930,638 935,641 940,650 945,663 950,665 955,671 960,677 965,687 970,692 976,691 981,701 986,706 991,710 996,703 1001,709 1006,712 1011,707 1017,714 1022,712 1027,700 1032,687 1037,687 1042,676 1047,660 1052,636 1058,640 1063,608 1068,584 1073,561 1078,540 1083,509 1088,482 1093,461 1099,435 1104,421 1109,410 1114,392 1119,395 1124,399 1129,401 1134,392 1140,417 1145,435 1150,455 1155,477 1160,513 1165,533 1170,561 1175,574 1180,600 1186,623 1191,650 1196,665 1201,674 1206,684 1211,705 1216,710 1221,712 1227,729 1232,729 1237,734 1242,729 1247,737 1252,740 1257,740 1262,740 1268,735 1273,739 1278,732 1283,738 1288,737 1293,740 1298,743 1303,740 1309,740 1314,739 1319,738 1324,742 1329,738 1334,740 1339,739 1344,735 1350,739 1355,743 1360,738 1365,742 1370,737 1375,738 1380,740 1385,743 1390,737 1396,737 1401,738 1406,746 1411,737 1416,737 1421,739 1426,735 1431,732 1437,741 1442,741 1447,744 1452,741 1457,740 1462,737 1467,740 1472,739 1478,742 1483,739 1488,738 1493,744 1498,737" stroke="#ffffff"/>
<polyline fill="none" stroke-width="1" shape-rendering="crispEdges" points="489,731 494,735 499,721 504,725 510,725 515,732 520,727 525,733 530,731 535,726 540,732 545,728 550,732 556,724 561,728 566,726 571,725 576,729 581,728 586,728 591,734 597,724 602,722 607,721 612,725 617,721 622,727 627,724 632,730 638,725 643,720 648,727 653,721 658,711 663,715 668,717 673,711 679,712 684,715 689,701 694,707 699,705 704,704 709,709 714,706 720,701 725,704 730,702 735,704 740,703 745,697 750,703 755,696 760,699 766,708 771,706 776,706 781,698 786,705 791,701 796,699 801,702 807,705 812,700 817,696 822,697 827,690 832,692 837,690 842,682 848,674 853,675 858,662 863,659 868,657 873,644 878,634 883,641 889,622 894,629 899,631 904,626 909,636 914,630 919,633 924,648 930,651 935,654 940,657 945,661 950,670 955,679 960,680 965,686 970,694 976,701 981,708 986,708 991,704 996,720 1001,709 1006,718 1011,711 1017,715 1022,705 1027,701 1032,694 1037,682 1042,678 1047,659 1052,648 1058,634 1063,613 1068,587 1073,569 1078,540 1083,518 1088,498 1093,483 1099,451 1104,428 1109,421 1114,404 1119,406 1124,395 1129,397 1134,412 1140,424 1145,449 1150,456 1155,488 1160,506 1165,524 1170,557 1175,581 1180,603 1186,629 1191,648 1196,658 1201,680 1206,691 1211,706 1216,709 1221,720 1227,723 1232,728 1237,730 1242,735 1247,735 1252,732 1257,734 1262,736 1268,736 1273,744 1278,739 1283,738 1288,738 1293,737 1298,743 1303,738 1309,741 1314,738 1319,734 1324,737 1329,739 1334,742 1339,736 1344,745 1350,742 1355,747 1360,740 1365,742 1370,741 1375,742 1380,733 1385,737 1390,737 1396,741 1401,737 1406,739 1411,740 1416,744 1421,739 1426,747 1431,742 1437,746 1442,738 1447,737 1452,736 1457,744 1462,736 1467,733 1472,741 1478,742 1483,741 1488,741 1493,736 1498,741" stroke="#ff00ff"/>
<polyline fill="none" stroke-width="1" shape-rendering="crispEdges" points="489,726 494,733 499,729 504,726 510,732 515,727 520,739 525,731 530,732 535,730 540,729 545,728 550,732 556,727 561,732 566,726 571,730 576,722 581,732 586,728 591,725 597,723 602,725 607,725 612,725 617,726 622,728 627,728 632,723 638,726 643,728 648,725 653,723 658,725 663,719 668,715 673,713 679,716 684,710 689,712 694,705 699,710 704,708 709,708 714,701 720,712 725,705 730,707 735,700 740,702 745,698 750,710 755,704 760,713 766,698 771,702 776,705 781,707 786,708 791,711 796,712 801,703 807,706 812,707 817,699 822,697 827,697 832,691 837,687 842,678 848,678 853,673 858,658 863,665 868,651 873,645 878,641 883,638 889,629 894,637 899,629 904,629 909,630 914,634 919,638 924,644 930,644 935,653 940,656 945,665 950,666 955,678 960,683 965,685 970,693 976,695 981,699 986,706 991,716 996,715 1001,710 1006,709 1011,717 1017,711 1022,711 1027,700 1032,695 1037,685 1042,680 1047,659 1052,653 1058,639 1063,620 1068,600 1073,576 1078,556 1083,521 1088,495 1093,478 1099,452 1104,438 1109,429 1114,413 1119,414 1124,419 1129,409 1134,425 1140,432 1145,451 1150,470 1155,500 1160,517 1165,537 1170,558 1175,591 1180,609 1186,626 1191,645 1196,658 1201,687 1206,691 1211,705 1216,710 1221,722 1227,717 1232,727 1237,727 1242,737 1247,732 1252,738 1257,736 1262,735 1268,740 1273,740 1278,737 1283,737 1288,739 1293,741 1298,736 1303,741 1309,737 1314,743 1319,739 1324,739 1329,742 1334,738 1339,741 1344,738 1350,732 1355,735 1360,734 1365,734 1370,742 1375,736 1380,740 1385,739 1390,734 1396,744 1401,737 1406,739 1411,740 1416,743 1421,733 1426,740 1431,741 1437,737 1442,739 1447,739 1452,740 1457,737 1462,738 1467,743 1472,733 1478,742 1483,736 1488,735 1493,742 1498,736" stroke="#ff2020"/>
<polyline fill="none" stroke-width="1" shape-rendering="crispEdges" points="489,735 494,732 499,733 504,731 510,733 515,730 520,725 525,732 530,730 535,734 540,730 545,722 550,730 556,727 561,729 566,734 571,726 576,725 581,725 586,727 591,725 597,728 602,727 607,729 612,727 617,726 622,724 627,724 632,721 638,728 643,727 648,724 653,716 658,716 663,716 668,722 673,714 679,714 684,720 689,718 694,715 699,711 704,714 709,707 714,711 720,701 725,707 730,711 735,710 740,703 745,707 750,710 755,701 760,706 766,706 771,707 776,709 781,705 786,707 791,705 796,708 801,710 807,704 812,702 817,693 822,703 827,696 832,686 837,689 842,687 848,687 853,679 858,669 863,660 868,656 873,654 878,641 883,646 889,637 894,631 899,634 904,634 909,642 914,637 919,634 924,643 930,646 935,651 940,658 945,672 950,669 955,689 960,691 965,694 970,695 976,702 981,702 986,705 991,714 996,707 1001,714 1006,718 1011,705 1017,709 1022,705 1027,705 1032,701 1037,688 1042,684 1047,664 1052,656 1058,643 1063,616 1068,606 1073,570 1078,561 1083,535 1088,513 1093,496 1099,467 1104,458 1109,437 1114,424 1119,425 1124,419 1129,427 1134,432 1140,443 1145,458 1150,475 1155,499 1160,516 1165,543 1170,566 1175,591 1180,613 1186,631 1191,653 1196,671 1201,675 1206,694 1211,702 1216,709 1221,721 1227,719 1232,728 1237,736 1242,732 1247,735 1252,734 1257,735 1262,740 1268,730 1273,730 1278,744 1283,740 1288,738 1293,741 1298,743 1303,732 1309,738 1314,740 1319,738 1324,746 1329,741 1334,743 1339,739 1344,738 1350,740 1355,737 1360,747 1365,740 1370,735 1375,736 1380,742 1385,738 1390,737 1396,738 1401,743 1406,738 1411,744 1416,740 1421,733 1426,740 1431,739 1437,738 1442,738 1447,734 1452,740 1457,740 1462,741 1467,742 1472,741 1478,743 1483,740 1488,737 1493,731 1498,732" stroke="#ffffff"/>
<polyline fill="none" stroke-width="1" shape-rendering="crispEdges" points="489,729 494,730 499,736 504,731 510,736 515,726 520,733 525,735 530,731 535,731 540,735 545,729 550,730 556,733 561,733 566,732 571,722 576,729 581,728 586,732 591,729 597,728 602,722 607,729 612,723 617,725 622,725 627,723 632,726 638,727 643,725 648,720 653,719 658,721 663,720 668,719 673,714 679,717 684,717 689,713 694,709 699,715 704,712 709,704 714,711 720,712 725,709 730,707 735,716 740,705 745,708 750,707 755,707 760,713 766,706 771,702 776,711 781,703 786,710 791,710 796,704 801,713 807,706 812,708 817,695 822,699 827,693 832,693 837,688 842,696 848,679 853,676 858,666 863,662 868,653 873,655 878,650 883,644 889,644 894,636 899,637 904,640 909,643 914,641 919,648 924,647 930,654 935,652 940,657 945,665 950,671 955,686 960,685 965,696 970,697 976,704 981,709 986,712 991,714 996,713 1001,720 1006,721 1011,723 1017,707 1022,707 1027,702 1032,703 1037,687 1042,685 1047,670 1052,657 1058,638 1063,625 1068,605 1073,581 1078,568 1083,528 1088,514 1093,494 1099,484 1104,457 1109,450 1114,445 1119,430 1124,434 1129,436 1134,446 1140,448 1145,476 1150,488 1155,505 1160,528 1165,548 1170,573 1175,598 1180,621 1186,637 1191,663 1196,668 1201,687 1206,694 1211,703 1216,716 1221,714 1227,721 1232,725 1237,732 1242,736 1247,736 1252,741 1257,738 1262,743 1268,736 1273,732 1278,736 1283,737 1288,742 1293,742 1298,739 1303,738 1309,739 1314,734 1319,740 1324,743 1329,741 1334,736 1339,734 1344,740 1350,736 1355,740 1360,739 1365,736 1370,739 1375,741 1380,737 1385,737 1390,734 1396,736 1401,739 1406,743 1411,736 1416,739 1421,741 1426,738 1431,740 1437,739 1442,738 1447,739 1452,737 1457,738 1462,740 1467,738 1472,744 1478,741 1483,736 1488,739 1493,741 1498,741" stroke="#ffffff"/>
<polyline fill="none" stroke-width="1" shape-rendering="crispEdges" points="489,728 494,731 499,735 504,726 510,732 515,733 520,721 525,730 530,726 535,734 540,735 545,728 550,731 556,731 561,728 566,728 571,722 576,728 581,724 586,734 591,724 597,731 602,730 607,736 612,725 617,721 622,727 627,726 632,724 638,731 643,725 648,721 653,724 658,722 663,719 668,719 673,720 679,724 684,715 689,718 694,715 699,711 704,713 709,710 714,714 720,714 725,709 730,709 735,707 740,706 745,704 750,709 755,705 760,712 766,711 771,701 776,710 781,715 786,715 791,711 796,713 801,710 807,710 812,707 817,709 822,706 827,702 832,705 837,696 842,683 848,682 853,678 858,671 863,669 868,664 873,659 878,657 883,653 889,645 894,640 899,635 904,639 909,641 914,649 919,642 924,652 930,651 935,661 940,660 945,675 950,678 955,688 960,685 965,694 970,700 976,701 981,709 986,717 991,712 996,710 1001,715 1006,715 1011,714 1017,713 1022,707 1027,705 1032,700 1037,691 1042,687 1047,679 1052,665 1058,642 1063,626 1068,610 1073,589 1078,565 1083,538 1088,518 1093,510 1099,483 1104,470 1109,463 1114,448 1119,448 1124,442 1129,446 1134,449 1140,472 1145,477 1150,497 1155,507 1160,540 1165,569 1170,575 1175,600 1180,619 1186,636 1191,651 1196,669 1201,685 1206,696 1211,707 1216,709 1221,722 1227,722 1232,727 1237,728 1242,733 1247,737 1252,737 1257,742 1262,739 1268,738 1273,738 1278,743 1283,742 1288,737 1293,745 1298,743 1303,738 1309,741 1314,729 1319,737 1324,745 1329,744 1334,740 1339,733 1344,738 1350,737 1355,741 1360,735 1365,744 1370,739 1375,738 1380,741 1385,737 1390,739 1396,732 1401,734 1406,735 1411,737 1416,734 1421,737 1426,736 1431,737 1437,739 1442,739 1447,743 1452,743 1457,739 1462,731 1467,738 1472,741 1478,743 1483,744 1488,737 1493,740 1498,737" stroke="#80ff00"/>
<polyline fill="none" stroke-width="1" shape-rendering="crispEdges" points="489,731 494,734 499,733 504,740 510,735 515,730 520,731 525,733 530,728 535,729 540,733 545,732 550,731 556,733 561,728 566,728 571,731 576,733 581,727 586,733 591,728 597,729 602,725 607,730 612,732 617,730 622,719 627,732 632,730 638,725 643,725 648,722 653,720 658,728 663,716 668,717 673,725 679,717 684,718 689,719 694,723 699,718 704,715 709,711 714,711 720,714 725,707 730,711 735,709 740,708 745,711 750,710 755,717 760,714 766,708 771,710 776,711 781,704 786,714 791,714 796,709 801,710 807,709 812,713 817,705 822,700 827,700 832,700 837,694 842,689 848,688 853,677 858,677 863,670 868,663 873,655 878,658 883,655 889,645 894,649 899,644 904,652 909,646 914,643 919,651 924,647 930,658 935,668 940,673 945,679 950,679 955,682 960,682 965,699 970,701 976,705 981,709 986,714 991,712 996,714 1001,718 1006,719 1011,716 1017,713 1022,715 1027,709 1032,701 1037,697 1042,681 1047,675 1052,666 1058,655 1063,630 1068,610 1073,602 1078,574 1083,554 1088,526 1093,518 1099,497 1104,483 1109,464 1114,457 1119,460 1124,447 1129,449 1134,469 1140,466 1145,488 1150,496 1155,521 1160,542 1165,563 1170,584 1175,607 1180,623 1186,648 1191,652 1196,674 1201,685 1206,700 1211,702 1216,716 1221,722 1227,723 1232,735 1237,732 1242,735 1247,734 1252,737 1257,744 1262,739 1268,740 1273,741 1278,741 1283,732 1288,738 1293,734 1298,733 1303,743 1309,739 1314,747 1319,741 1324,740 1329,743 1334,740 1339,740 1344,738 1350,736 1355,739 1360,742 1365,733 1370,736 1375,740 1380,737 1385,740 1390,736 1396,742 1401,739 1406,743 1411,739 1416,743 1421,731 1426,736 1431,739 1437,737 1442,740 1447,746 1452,739 1457,735 1462,739 1467,741 1472,742 1478,737 1483,743 1488,735 1493,741 1498,736" stroke="#20c060"/>
<polyline fill="none" stroke-width="1" shape-rendering="crispEdges" points="489,734 494,728 499,734 504,736 510,737 515,733 520,726 525,732 530,735 535,735 540,731 545,735 550,722 556,731 561,732 566,728 571,733 576,732 581,731 586,731 591,729 597,729 602,730 607,724 612,736 617,725 622,731 627,724 632,726 638,732 643,730 648,726 653,729 658,726 663,718 668,724 673,721 679,721 684,719 689,718 694,714 699,710 704,712 709,721 714,716 720,707 725,710 730,710 735,708 740,712 745,713 750,713 755,710 760,709 766,707 771,709 776,712 781,709 786,714 791,710 796,712 801,711 807,712 812,708 817,711 822,707 827,701 832,696 837,699 842,687 848,683 853,679 858,674 863,668 868,668 873,668 878,661 883,651 889,653 894,644 899,644 904,649 909,644 914,659 919,649 924,654 930,661 935,668 940,673 945,679 950,680 955,688 960,695 965,700 970,699 976,706 981,711 986,709 991,713 996,719 1001,715 1006,720 1011,718 1017,713 1022,711 1027,711 1032,699 1037,694 1042,686 1047,677 1052,667 1058,652 1063,629 1068,616 1073,601 1078,580 1083,564 1088,542 1093,530 1099,511 1104,492 1109,468 1114,468 1119,461 1124,464 1129,456 1134,469 1140,484 1145,497 1150,512 1155,534 1160,550 1165,568 1170,596 1175,605 1180,623 1186,645 1191,659 1196,674 1201,690 1206,695 1211,706 1216,715 1221,725 1227,727 1232,725 1237,729 1242,735 1247,731 1252,737 1257,737 1262,738 1268,743 1273,737 1278,736 1283,739 1288,731 1293,743 1298,738 1303,740 1309,737 1314,738 1319,737 1324,741 1329,738 1334,737 1339,739 1344,744 1350,744 1355,742 1360,739 1365,743 1370,739 1375,739 1380,742 1385,737 1390,743 1396,738 1401,733 1406,744 1411,740 1416,735 1421,739 1426,742 1431,740 1437,744 1442,740 1447,739 1452,741 1457,740 1462,745 1467,735 1472,741 1478,739 1483,740 1488,748 1493,738 1498,738" stroke="#da70d6"/>
<polyline fill="none" stroke-width="1" shape-rendering="crispEdges" points="489,726 494,737 499,734 504,735 510,739 515,729 520,730 525,735 530,730 535,730 540,732 545,732 550,729 556,731 561,732 566,734 571,733 576,723 581,729 586,732 591,730 597,726 602,727 607,732 612,734 617,729 622,728 627,726 632,730 638,726 643,727 648,719 653,721 658,727 663,725 668,724 673,722 679,723 684,722 689,725 694,721 699,715 704,723 709,713 714,716 720,714 725,711 730,715 735,716 740,710 745,717 750,715 755,713 760,711 766,707 771,716 776,710 781,718 786,716 791,714 796,713 801,713 807,709 812,706 817,707 822,704 827,702 832,697 837,702 842,695 848,683 853,686 858,677 863,672 868,669 873,661 878,658 883,654 889,650 894,653 899,653 904,653 909,648 914,654 919,657 924,659 930,655 935,666 940,667 945,681 950,691 955,689 960,696 965,704 970,699 976,706 981,712 986,711 991,715 996,710 1001,718 1006,711 1011,712 1017,719 1022,710 1027,712 1032,710 1037,700 1042,685 1047,686 1052,669 1058,652 1063,643 1068,623 1073,601 1078,589 1083,569 1088,548 1093,533 1099,508 1104,499 1109,488 1114,479 1119,474 1124,470 1129,480 1134,469 1140,492 1145,507 1150,524 1155,535 1160,555 1165,573 1170,595 1175,610 1180,635 1186,650 1191,667 1196,678 1201,693 1206,702 1211,716 1216,714 1221,725 1227,725 1232,733 1237,733 1242,734 1247,737 1252,738 1257,738 1262,740 1268,739 1273,735 1278,736 1283,741 1288,738 1293,735 1298,742 1303,743 1309,738 1314,737 1319,738 1324,738 1329,731 1334,742 1339,738 1344,743 1350,740 1355,740 1360,734 1365,739 1370,741 1375,734 1380,738 1385,739 1390,739 1396,742 1401,740 1406,735 1411,743 1416,737 1421,738 1426,739 1431,737 1437,740 1442,736 1447,739 1452,739 1457,734 1462,734 1467,743 1472,739 1478,733 1483,744 1488,736 1493,735 1498,743" stroke="#ffe0a0"/>
<polyline fill="none" stroke-width="1" shape-rendering="crispEdges" points="489,727 494,729 499,732 504,733 510,734 515,726 520,732 525,731 530,731 535,732 540,736 545,730 550,728 556,734 561,737 566,732 571,731 576,728 581,732 586,729 591,733 597,736 602,726 607,729 612,731 617,731 622,727 627,733 632,727 638,724 643,729 648,724 653,721 658,718 663,721 668,727 673,727 679,723 684,714 689,721 694,716 699,716 704,710 709,716 714,716 720,717 725,713 730,712 735,712 740,710 745,712 750,714 755,713 760,714 766,712 771,718 776,707 781,713 786,717 791,715 796,719 801,714 807,711 812,713 817,705 822,707 827,707 832,699 837,696 842,695 848,689 853,689 858,678 863,682 868,673 873,672 878,664 883,667 889,657 894,656 899,659 904,653 909,661 914,659 919,659 924,664 930,664 935,675 940,681 945,675 950,690 955,685 960,694 965,697 970,705 976,712 981,712 986,715 991,719 996,722 1001,718 1006,722 1011,717 1017,716 1022,710 1027,708 1032,714 1037,699 1042,692 1047,674 1052,672 1058,659 1063,645 1068,628 1073,613 1078,585 1083,572 1088,553 1093,533 1099,527 1104,501 1109,498 1114,487 1119,486 1124,485 1129,495 1134,489 1140,499 1145,512 1150,524 1155,546 1160,568 1165,585 1170,602 1175,615 1180,633 1186,649 1191,665 1196,682 1201,693 1206,708 1211,709 1216,718 1221,721 1227,725 1232,731 1237,725 1242,735 1247,738 1252,732 1257,739 1262,732 1268,736 1273,742 1278,739 1283,736 1288,737 1293,736 1298,737 1303,737 1309,740 1314,740 1319,738 1324,737 1329,737 1334,741 1339,740 1344,732 1350,737 1355,740 1360,743 1365,738 1370,738 1375,740 1380,742 1385,735 1390,740 1396,738 1401,738 1406,740 1411,737 1416,741 1421,741 1426,733 1431,739 1437,738 1442,741 1447,737 1452,738 1457,739 1462,737 1467,738 1472,742 1478,739 1483,741 1488,742 1493,737 1498,746" stroke="#ff2020"/>
<polyline fill="none" stroke-width="1" shape-rendering="crispEdges" points="489,734 494,741 499,734 504,732 510,737 515,735 520,736 525,732 530,732 535,734 540,731 545,730 550,727 556,730 561,730 566,736 571,730 576,727 581,729 586,723 591,731 597,728 602,730 607,732 612,726 617,729 622,728 627,727 632,726 638,731 643,726 648,725 653,727 658,722 663,723 668,719 673,726 679,723 684,723 689,718 694,720 699,716 704,720 709,720 714,714 720,718 725,713 730,719 735,710 740,718 745,714 750,715 755,709 760,713 766,709 771,717 776,717 781,717 786,713 791,718 796,707 801,713 807,717 812,710 817,714 822,710 827,706 832,701 837,702 842,694 848,692 853,690 858,681 863,685 868,674 873,672 878,666 883,665 889,656 894,658 899,656 904,661 909,661 914,662 919,663 924,656 930,675 935,663 940,675 945,686 950,686 955,697 960,704 965,704 970,697 976,713 981,713 986,715 991,711 996,716 1001,720 1006,720 1011,721 1017,722 1022,717 1027,714 1032,705 1037,698 1042,695 1047,694 1052,685 1058,664 1063,642 1068,631 1073,623 1078,597 1083,583 1088,556 1093,547 1099,520 1104,513 1109,503 1114,498 1119,496 1124,508 1129,497 1134,500 1140,508 1145,522 1150,536 1155,552 1160,571 1165,578 1170,605 1175,626 1180,638 1186,657 1191,666 1196,680 1201,690 1206,699 1211,709 1216,717 1221,723 1227,727 1232,731 1237,733 1242,734 1247,736 1252,737 1257,738 1262,735 1268,746 1273,739 1278,744 1283,740 1288,738 1293,740 1298,743 1303,746 1309,743 1314,736 1319,736 1324,737 1329,739 1334,739 1339,741 1344,740 1350,733 1355,733 1360,735 1365,742 1370,736 1375,739 1380,741 1385,742 1390,733 1396,739 1401,741 1406,739 1411,739 1416,741 1421,737 1426,743 1431,739 1437,742 1442,738 1447,737 1452,742 1457,738 1462,741 1467,740 1472,736 1478,741 1483,739 1488,737 1493,736 1498,743" stroke="#ffa500"/>
<polyline fill="none" stroke-width="1" shape-rendering="crispEdges" points="489,736 494,729 499,734 504,723 510,731 515,734 520,735 525,729 530,731 535,726 540,734 545,732 550,731 556,734 561,730 566,732 571,729 576,730 581,725 586,733 591,729 597,731 602,731 607,732 612,731 617,727 622,732 627,723 632,727 638,728 643,728 648,725 653,727 658,726 663,730 668,726 673,729 679,726 684,728 689,724 694,723 699,719 704,718 709,720 714,723 720,723 725,712 730,715 735,721 740,713 745,711 750,711 755,714 760,716 766,713 771,711 776,713 781,720 786,719 791,715 796,717 801,715 807,712 812,712 817,714 822,707 827,704 832,709 837,702 842,698 848,700 853,688 858,693 863,678 868,669 873,674 878,667 883,667 889,668 894,668 899,661 904,661 909,668 914,659 919,663 924,667 930,666 935,674 940,682 945,689 950,695 955,687 960,700 965,704 970,709 976,708 981,716 986,712 991,718 996,719 1001,720 1006,712 1011,719 1017,726 1022,712 1027,714 1032,708 1037,701 1042,693 1047,685 1052,678 1058,657 1063,650 1068,644 1073,620 1078,609 1083,590 1088,572 1093,562 1099,539 1104,526 1109,516 1114,509 1119,507 1124,505 1129,511 1134,512 1140,522 1145,538 1150,546 1155,557 1160,579 1165,591 1170,604 1175,630 1180,640 1186,663 1191,671 1196,685 1201,699 1206,703 1211,717 1216,723 1221,722 1227,725 1232,729 1237,734 1242,730 1247,736 1252,738 1257,738 1262,734 1268,738 1273,739 1278,734 1283,738 1288,742 1293,738 1298,740 1303,732 1309,741 1314,739 1319,738 1324,742 1329,745 1334,736 1339,743 1344,737 1350,738 1355,740 1360,735 1365,744 1370,735 1375,737 1380,739 1385,738 1390,735 1396,736 1401,742 1406,736 1411,738 1416,743 1421,737 1426,738 1431,743 1437,739 1442,740 1447,742 1452,744 1457,735 1462,737 1467,742 1472,743 1478,737 1483,740 1488,740 1493,740 1498,739" stroke="#ffd700"/>
<polyline fill="none" stroke-width="1" shape-rendering="crispEdges" points="489,731 494,734 499,736 504,735 510,733 515,731 520,731 525,735 530,731 535,732 540,729 545,737 550,732 556,732 561,730 566,730 571,725 576,733 581,734 586,727 591,726 597,721 602,731 607,727 612,734 617,729 622,728 627,734 632,727 638,731 643,724 648,729 653,733 658,725 663,728 668,729 673,726 679,719 684,730 689,723 694,724 699,721 704,717 709,715 714,720 720,716 725,723 730,714 735,711 740,714 745,714 750,720 755,722 760,715 766,717 771,717 776,714 781,714 786,718 791,720 796,718 801,714 807,715 812,718 817,715 822,712 827,706 832,708 837,705 842,701 848,699 853,688 858,691 863,688 868,677 873,678 878,677 883,674 889,670 894,662 899,665 904,668 909,670 914,667 919,670 924,670 930,672 935,682 940,686 945,683 950,690 955,695 960,699 965,706 970,706 976,713 981,728 986,721 991,719 996,721 1001,729 1006,722 1011,726 1017,720 1022,720 1027,713 1032,708 1037,710 1042,698 1047,693 1052,679 1058,670 1063,655 1068,632 1073,624 1078,614 1083,598 1088,578 1093,561 1099,539 1104,536 1109,531 1114,518 1119,517 1124,517 1129,510 1134,518 1140,527 1145,544 1150,549 1155,570 1160,585 1165,597 1170,616 1175,629 1180,654 1186,661 1191,674 1196,689 1201,705 1206,712 1211,719 1216,716 1221,722 1227,723 1232,730 1237,724 1242,731 1247,734 1252,741 1257,739 1262,733 1268,737 1273,742 1278,740 1283,736 1288,737 1293,741 1298,738 1303,735 1309,744 1314,739 1319,736 1324,737 1329,741 1334,737 1339,740 1344,738 1350,734 1355,737 1360,740 1365,736 1370,737 1375,741 1380,737 1385,736 1390,739 1396,735 1401,735 1406,743 1411,742 1416,737 1421,740 1426,739 1431,743 1437,738 1442,739 1447,743 1452,739 1457,736 1462,740 1467,738 1472,742 1478,742 1483,741 1488,745 1493,739 1498,739" stroke="#87ceeb"/>
<polyline fill="none" stroke-width="1" shape-rendering="crispEdges" points="489,736 494,738 499,740 504,738 510,732 515,732 520,743 525,735 530,730 535,734 540,735 545,736 550,730 556,730 561,735 566,732 571,736 576,729 581,730 586,735 591,732 597,731 602,732 607,731 612,733 617,729 622,728 627,727 632,724 638,730 643,731 648,726 653,737 658,731 663,728 668,725 673,727 679,724 684,730 689,726 694,723 699,717 704,720 709,721 714,718 720,719 725,722 730,717 735,717 740,718 745,720 750,722 755,725 760,713 766,721 771,716 776,724 781,717 786,718 791,717 796,718 801,720 807,726 812,715 817,716 822,713 827,713 832,710 837,708 842,704 848,701 853,696 858,692 863,690 868,685 873,675 878,677 883,674 889,671 894,667 899,666 904,663 909,669 914,672 919,669 924,678 930,678 935,681 940,684 945,698 950,698 955,702 960,707 965,704 970,711 976,719 981,723 986,719 991,721 996,719 1001,720 1006,727 1011,724 1017,722 1022,713 1027,710 1032,714 1037,710 1042,702 1047,690 1052,677 1058,678 1063,652 1068,650 1073,631 1078,618 1083,603 1088,581 1093,569 1099,548 1104,543 1109,534 1114,529 1119,528 1124,517 1129,528 1134,530 1140,536 1145,553 1150,556 1155,576 1160,593 1165,611 1170,624 1175,634 1180,656 1186,667 1191,677 1196,687 1201,701 1206,704 1211,712 1216,726 1221,720 1227,726 1232,730 1237,721 1242,733 1247,731 1252,733 1257,742 1262,736 1268,736 1273,735 1278,736 1283,738 1288,739 1293,736 1298,739 1303,739 1309,743 1314,740 1319,741 1324,732 1329,738 1334,740 1339,737 1344,744 1350,737 1355,742 1360,740 1365,737 1370,739 1375,737 1380,740 1385,741 1390,734 1396,738 1401,736 1406,740 1411,740 1416,742 1421,740 1426,740 1431,738 1437,734 1442,741 1447,739 1452,739 1457,738 1462,739 1467,735 1472,738 1478,740 1483,734 1488,740 1493,740 1498,739" stroke="#ff00ff"/>
<polyline fill="none" stroke-width="1" shape-rendering="crispEdges" points="489,730 494,737 499,731 504,735 510,735 515,739 520,739 525,734 530,729 535,732 540,736 545,728 550,731 556,736 561,731 566,735 571,734 576,732 581,730 586,737 591,732 597,730 602,732 607,732 612,728 617,724 622,730 627,729 632,734 638,729 643,732 648,726 653,729 658,728 663,730 668,731 673,722 679,724 684,722 689,727 694,725 699,726 704,718 709,719 714,725 720,721 725,711 730,725 735,719 740,718 745,716 750,720 755,719 760,717 766,719 771,718 776,727 781,715 786,717 791,720 796,719 801,718 807,717 812,719 817,720 822,714 827,713 832,705 837,703 842,711 848,700 853,699 858,690 863,683 868,690 873,685 878,680 883,683 889,677 894,674 899,670 904,668 909,677 914,677 919,674 924,678 930,678 935,679 940,685 945,690 950,693 955,702 960,705 965,708 970,717 976,717 981,713 986,721 991,724 996,716 1001,716 1006,724 1011,730 1017,719 1022,721 1027,717 1032,715 1037,709 1042,702 1047,700 1052,683 1058,675 1063,661 1068,654 1073,641 1078,622 1083,605 1088,597 1093,578 1099,572 1104,551 1109,543 1114,541 1119,540 1124,528 1129,539 1134,540 1140,547 1145,558 1150,570 1155,585 1160,594 1165,613 1170,625 1175,647 1180,656 1186,663 1191,680 1196,688 1201,705 1206,706 1211,714 1216,720 1221,724 1227,729 1232,732 1237,737 1242,735 1247,737 1252,734 1257,733 1262,742 1268,742 1273,736 1278,740 1283,735 1288,737 1293,739 1298,741 1303,740 1309,736 1314,735 1319,737 1324,735 1329,742 1334,739 1339,739 1344,741 1350,737 1355,741 1360,737 1365,738 1370,738 1375,740 1380,738 1385,738 1390,739 1396,734 1401,732 1406,739 1411,741 1416,735 1421,739 1426,743 1431,737 1437,736 1442,743 1447,741 1452,743 1457,733 1462,739 1467,737 1472,739 1478,735 1483,740 1488,743 1493,739 1498,742" stroke="#20c060"/>
<polyline fill="none" stroke-width="1" shape-rendering="crispEdges" points="489,734 494,733 499,735 504,732 510,734 515,736 520,740 525,736 530,738 535,737 540,732 545,730 550,732 556,730 561,736 566,730 571,736 576,737 581,734 586,734 591,732 597,731 602,732 607,730 612,734 617,735 622,731 627,727 632,729 638,732 643,728 648,731 653,730 658,730 663,729 668,724 673,725 679,724 684,729 689,720 694,727 699,721 704,734 709,722 714,719 720,721 725,723 730,725 735,719 740,717 745,717 750,721 755,715 760,717 766,716 771,719 776,717 781,720 786,720 791,723 796,727 801,720 807,720 812,721 817,719 822,717 827,712 832,713 837,709 842,698 848,707 853,700 858,690 863,695 868,687 873,688 878,683 883,679 889,676 894,674 899,678 904,676 909,676 914,675 919,682 924,682 930,686 935,685 940,687 945,703 950,700 955,701 960,708 965,716 970,710 976,713 981,718 986,723 991,723 996,725 1001,726 1006,723 1011,721 1017,722 1022,723 1027,721 1032,713 1037,715 1042,707 1047,696 1052,691 1058,679 1063,673 1068,654 1073,639 1078,629 1083,615 1088,598 1093,583 1099,573 1104,566 1109,551 1114,552 1119,547 1124,545 1129,543 1134,554 1140,560 1145,564 1150,570 1155,592 1160,607 1165,623 1170,629 1175,648 1180,655 1186,675 1191,685 1196,693 1201,704 1206,711 1211,714 1216,723 1221,730 1227,731 1232,729 1237,733 1242,733 1247,737 1252,737 1257,738 1262,738 1268,739 1273,745 1278,735 1283,734 1288,738 1293,737 1298,741 1303,739 1309,735 1314,742 1319,735 1324,736 1329,744 1334,738 1339,736 1344,734 1350,737 1355,743 1360,737 1365,738 1370,735 1375,742 1380,739 1385,738 1390,740 1396,739 1401,735 1406,739 1411,742 1416,739 1421,740 1426,741 1431,736 1437,739 1442,742 1447,743 1452,739 1457,736 1462,738 1467,738 1472,743 1478,737 1483,741 1488,736 1493,736 1498,739" stroke="#ff80c0"/>
<polyline fill="none" stroke-width="1" shape-rendering="crispEdges" points="489,736 494,736 499,736 504,736 510,737 515,735 520,744 525,735 530,737 535,736 540,730 545,729 550,730 556,734 561,737 566,728 571,731 576,729 581,733 586,732 591,736 597,730 602,737 607,731 612,738 617,737 622,730 627,732 632,731 638,729 643,737 648,730 653,723 658,731 663,733 668,732 673,732 679,726 684,727 689,722 694,722 699,723 704,723 709,725 714,722 720,723 725,727 730,723 735,726 740,720 745,718 750,722 755,723 760,718 766,726 771,719 776,727 781,717 786,717 791,725 796,722 801,719 807,720 812,717 817,717 822,713 827,718 832,709 837,711 842,708 848,703 853,699 858,701 863,691 868,688 873,695 878,689 883,680 889,683 894,684 899,677 904,675 909,681 914,681 919,681 924,682 930,684 935,688 940,692 945,695 950,704 955,706 960,710 965,714 970,721 976,716 981,720 986,724 991,725 996,722 1001,729 1006,719 1011,725 1017,717 1022,728 1027,720 1032,716 1037,711 1042,708 1047,702 1052,689 1058,685 1063,672 1068,655 1073,649 1078,634 1083,618 1088,610 1093,599 1099,586 1104,567 1109,562 1114,566 1119,558 1124,554 1129,553 1134,562 1140,567 1145,575 1150,589 1155,605 1160,612 1165,622 1170,641 1175,652 1180,658 1186,678 1191,680 1196,699 1201,709 1206,708 1211,719 1216,720 1221,728 1227,731 1232,732 1237,730 1242,735 1247,740 1252,726 1257,738 1262,741 1268,737 1273,743 1278,735 1283,733 1288,739 1293,741 1298,737 1303,740 1309,743 1314,736 1319,736 1324,742 1329,739 1334,740 1339,739 1344,736 1350,741 1355,737 1360,744 1365,740 1370,743 1375,737 1380,744 1385,739 1390,748 1396,736 1401,740 1406,736 1411,742 1416,741 1421,734 1426,735 1431,742 1437,736 1442,741 1447,739 1452,739 1457,742 1462,741 1467,737 1472,736 1478,735 1483,738 1488,735 1493,738 1498,743" stroke="#ffffff"/>
<polyline fill="none" stroke-width="1" shape-rendering="crispEdges" points="489,733 494,736 499,732 504,732 510,742 515,734 520,736 525,728 530,733 535,732 540,736 545,734 550,740 556,735 561,727 566,732 571,735 576,736 581,730 586,732 591,734 597,735 602,730 607,738 612,734 617,734 622,734 627,729 632,729 638,734 643,729 648,732 653,733 658,732 663,731 668,728 673,729 679,731 684,733 689,726 694,723 699,728 704,723 709,720 714,725 720,720 725,724 730,723 735,725 740,724 745,723 750,715 755,724 760,721 766,722 771,723 776,724 781,724 786,726 791,727 796,724 801,718 807,721 812,723 817,715 822,718 827,716 832,716 837,709 842,711 848,710 853,711 858,704 863,697 868,696 873,694 878,688 883,687 889,688 894,684 899,682 904,685 909,681 914,676 919,686 924,683 930,689 935,699 940,694 945,697 950,699 955,702 960,705 965,714 970,718 976,715 981,726 986,721 991,722 996,724 1001,731 1006,729 1011,732 1017,722 1022,726 1027,722 1032,716 1037,710 1042,711 1047,703 1052,694 1058,683 1063,673 1068,659 1073,655 1078,644 1083,632 1088,614 1093,603 1099,589 1104,586 1109,581 1114,572 1119,568 1124,561 1129,567 1134,568 1140,576 1145,585 1150,595 1155,611 1160,616 1165,626 1170,643 1175,661 1180,670 1186,683 1191,688 1196,701 1201,705 1206,709 1211,720 1216,732 1221,724 1227,730 1232,732 1237,726 1242,739 1247,736 1252,740 1257,720 1262,734 1268,740 1273,738 1278,740 1283,741 1288,736 1293,741 1298,742 1303,737 1309,737 1314,737 1319,743 1324,743 1329,737 1334,734 1339,742 1344,738 1350,739 1355,738 1360,734 1365,740 1370,738 1375,738 1380,740 1385,737 1390,737 1396,739 1401,736 1406,741 1411,740 1416,741 1421,738 1426,739 1431,736 1437,736 1442,737 1447,737 1452,737 1457,734 1462,744 1467,737 1472,739 1478,743 1483,740 1488,742 1493,738 1498,738" stroke="#00ffff"/>
<polyline fill="none" stroke-width="1" shape-rendering="crispEdges" points="489,737 494,736 499,728 504,737 510,734 515,736 520,741 525,735 530,735 535,740 540,733 545,740 550,736 556,731 561,732 566,736 571,734 576,737 581,732 586,736 591,723 597,731 602,735 607,733 612,732 617,738 622,735 627,741 632,729 638,732 643,734 648,734 653,732 658,735 663,731 668,727 673,728 679,733 684,728 689,730 694,726 699,728 704,723 709,725 714,724 720,728 725,716 730,721 735,722 740,721 745,722 750,725 755,718 760,723 766,721 771,722 776,720 781,729 786,722 791,722 796,725 801,721 807,722 812,716 817,722 822,727 827,716 832,711 837,713 842,709 848,709 853,704 858,707 863,704 868,695 873,696 878,688 883,692 889,690 894,680 899,683 904,688 909,686 914,695 919,689 924,694 930,693 935,700 940,697 945,703 950,704 955,708 960,708 965,714 970,715 976,718 981,718 986,727 991,724 996,726 1001,726 1006,721 1011,726 1017,733 1022,723 1027,714 1032,720 1037,718 1042,709 1047,704 1052,694 1058,689 1063,680 1068,667 1073,654 1078,648 1083,628 1088,627 1093,610 1099,595 1104,594 1109,582 1114,578 1119,577 1124,576 1129,571 1134,583 1140,589 1145,593 1150,601 1155,617 1160,623 1165,633 1170,648 1175,655 1180,670 1186,683 1191,697 1196,702 1201,711 1206,712 1211,721 1216,720 1221,726 1227,730 1232,733 1237,737 1242,737 1247,740 1252,740 1257,742 1262,734 1268,736 1273,744 1278,734 1283,735 1288,739 1293,741 1298,743 1303,740 1309,740 1314,739 1319,735 1324,740 1329,735 1334,741 1339,744 1344,740 1350,740 1355,742 1360,738 1365,734 1370,734 1375,740 1380,738 1385,743 1390,741 1396,741 1401,740 1406,745 1411,736 1416,742 1421,740 1426,744 1431,743 1437,740 1442,733 1447,739 1452,734 1457,740 1462,740 1467,738 1472,734 1478,743 1483,743 1488,741 1493,742 1498,740" stroke="#ffa500"/>
<polyline fill="none" stroke-width="1" shape-rendering="crispEdges" points="489,738 494,742 499,736 504,739 510,740 515,736 520,741 525,739 530,736 535,728 540,730 545,734 550,735 556,731 561,732 566,734 571,729 576,734 581,735 586,730 591,729 597,735 602,735 607,737 612,736 617,734 622,732 627,739 632,727 638,736 643,732 648,733 653,729 658,730 663,730 668,723 673,732 679,730 684,727 689,729 694,727 699,731 704,724 709,723 714,728 720,726 725,720 730,726 735,723 740,721 745,721 750,729 755,720 760,722 766,722 771,731 776,726 781,721 786,722 791,721 796,725 801,725 807,720 812,729 817,714 822,728 827,721 832,721 837,714 842,709 848,705 853,706 858,700 863,699 868,697 873,696 878,700 883,693 889,682 894,692 899,687 904,688 909,689 914,689 919,691 924,691 930,689 935,698 940,702 945,705 950,708 955,708 960,715 965,719 970,712 976,724 981,722 986,730 991,723 996,727 1001,726 1006,725 1011,725 1017,727 1022,720 1027,724 1032,718 1037,717 1042,710 1047,705 1052,693 1058,691 1063,681 1068,677 1073,662 1078,649 1083,640 1088,633 1093,620 1099,604 1104,605 1109,596 1114,593 1119,584 1124,590 1129,578 1134,591 1140,600 1145,603 1150,613 1155,621 1160,635 1165,642 1170,655 1175,667 1180,677 1186,680 1191,694 1196,699 1201,708 1206,713 1211,718 1216,728 1221,732 1227,731 1232,735 1237,738 1242,736 1247,738 1252,739 1257,738 1262,735 1268,743 1273,736 1278,735 1283,738 1288,741 1293,732 1298,739 1303,744 1309,740 1314,745 1319,738 1324,741 1329,737 1334,744 1339,736 1344,741 1350,737 1355,741 1360,736 1365,742 1370,736 1375,738 1380,742 1385,742 1390,739 1396,738 1401,737 1406,742 1411,740 1416,737 1421,742 1426,737 1431,739 1437,735 1442,739 1447,742 1452,737 1457,741 1462,739 1467,738 1472,738 1478,739 1483,738 1488,733 1493,737 1498,741" stroke="#d0a000"/>
<polyline fill="none" stroke-width="1" shape-rendering="crispEdges" points="489,731 494,733 499,734 504,734 510,734 515,735 520,737 525,734 530,737 535,734 540,734 545,734 550,735 556,734 561,731 566,733 571,735 576,729 581,735 586,732 591,736 597,735 602,734 607,735 612,727 617,732 622,733 627,735 632,729 638,735 643,730 648,733 653,736 658,731 663,725 668,731 673,729 679,727 684,722 689,726 694,724 699,728 704,729 709,731 714,728 720,727 725,730 730,723 735,721 740,723 745,729 750,728 755,727 760,724 766,724 771,717 776,723 781,724 786,728 791,724 796,725 801,726 807,726 812,720 817,721 822,721 827,715 832,719 837,721 842,718 848,715 853,713 858,709 863,706 868,701 873,696 878,695 883,691 889,695 894,692 899,692 904,694 909,697 914,693 919,692 924,693 930,703 935,704 940,701 945,707 950,713 955,707 960,714 965,713 970,722 976,721 981,726 986,726 991,728 996,727 1001,723 1006,732 1011,729 1017,733 1022,732 1027,724 1032,719 1037,718 1042,715 1047,712 1052,702 1058,696 1063,695 1068,674 1073,670 1078,666 1083,649 1088,630 1093,626 1099,611 1104,607 1109,600 1114,601 1119,595 1124,598 1129,598 1134,602 1140,608 1145,607 1150,624 1155,631 1160,639 1165,643 1170,665 1175,671 1180,681 1186,688 1191,700 1196,707 1201,711 1206,718 1211,716 1216,729 1221,726 1227,730 1232,731 1237,742 1242,731 1247,735 1252,737 1257,732 1262,736 1268,735 1273,736 1278,739 1283,738 1288,742 1293,739 1298,738 1303,733 1309,738 1314,740 1319,739 1324,740 1329,742 1334,742 1339,742 1344,734 1350,739 1355,744 1360,736 1365,741 1370,738 1375,740 1380,739 1385,740 1390,741 1396,737 1401,740 1406,741 1411,735 1416,734 1421,737 1426,734 1431,742 1437,738 1442,740 1447,740 1452,735 1457,737 1462,737 1467,731 1472,737 1478,738 1483,738 1488,741 1493,742 1498,738" stroke="#ffffff"/>
<polyline fill="none" stroke-width="1" shape-rendering="crispEdges" points="489,737 494,735 499,740 504,734 510,733 515,736 520,736 525,736 530,733 535,735 540,738 545,737 550,732 556,734 561,739 566,732 571,736 576,731 581,738 586,733 591,730 597,736 602,737 607,738 612,737 617,737 622,729 627,736 632,734 638,735 643,730 648,731 653,739 658,732 663,736 668,733 673,727 679,730 684,725 689,726 694,727 699,731 704,731 709,726 714,732 720,729 725,731 730,722 735,722 740,730 745,726 750,721 755,729 760,725 766,724 771,723 776,723 781,727 786,728 791,724 796,722 801,725 807,725 812,720 817,726 822,720 827,720 832,721 837,720 842,713 848,714 853,709 858,710 863,705 868,706 873,703 878,698 883,704 889,696 894,690 899,693 904,696 909,697 914,702 919,697 924,702 930,704 935,709 940,708 945,706 950,705 955,721 960,715 965,720 970,719 976,726 981,728 986,733 991,728 996,729 1001,730 1006,734 1011,726 1017,730 1022,723 1027,727 1032,719 1037,721 1042,715 1047,712 1052,706 1058,693 1063,692 1068,684 1073,667 1078,662 1083,652 1088,642 1093,633 1099,625 1104,620 1109,613 1114,606 1119,610 1124,602 1129,612 1134,610 1140,616 1145,628 1150,629 1155,633 1160,638 1165,664 1170,671 1175,674 1180,690 1186,692 1191,701 1196,709 1201,711 1206,722 1211,719 1216,729 1221,722 1227,733 1232,729 1237,734 1242,734 1247,737 1252,739 1257,736 1262,735 1268,734 1273,740 1278,740 1283,739 1288,741 1293,739 1298,741 1303,739 1309,740 1314,743 1319,734 1324,740 1329,740 1334,741 1339,739 1344,739 1350,737 1355,734 1360,736 1365,737 1370,740 1375,740 1380,741 1385,741 1390,734 1396,737 1401,737 1406,743 1411,739 1416,748 1421,742 1426,739 1431,738 1437,741 1442,739 1447,738 1452,742 1457,740 1462,738 1467,742 1472,730 1478,737 1483,740 1488,737 1493,739 1498,739" stroke="#ffffff"/>
<polyline fill="none" stroke-width="1" shape-rendering="crispEdges" points="489,733 494,732 499,737 504,734 510,736 515,735 520,734 525,732 530,733 535,734 540,732 545,733 550,732 556,736 561,735 566,729 571,734 576,733 581,737 586,734 591,736 597,734 602,738 607,733 612,731 617,744 622,735 627,728 632,733 638,733 643,736 648,735 653,736 658,734 663,736 668,729 673,727 679,732 684,726 689,733 694,730 699,728 704,727 709,729 714,733 720,731 725,726 730,729 735,730 740,722 745,728 750,723 755,726 760,725 766,725 771,727 776,731 781,728 786,727 791,722 796,733 801,726 807,726 812,730 817,728 822,728 827,729 832,723 837,712 842,722 848,717 853,714 858,717 863,715 868,705 873,709 878,701 883,703 889,702 894,699 899,698 904,696 909,698 914,702 919,701 924,707 930,705 935,704 940,704 945,713 950,710 955,714 960,716 965,721 970,728 976,723 981,724 986,725 991,727 996,731 1001,733 1006,728 1011,731 1017,730 1022,724 1027,725 1032,724 1037,721 1042,716 1047,714 1052,705 1058,699 1063,695 1068,685 1073,680 1078,663 1083,663 1088,649 1093,645 1099,637 1104,627 1109,617 1114,619 1119,617 1124,622 1129,611 1134,624 1140,618 1145,628 1150,634 1155,645 1160,655 1165,663 1170,664 1175,680 1180,689 1186,698 1191,700 1196,705 1201,717 1206,727 1211,727 1216,730 1221,729 1227,735 1232,739 1237,736 1242,733 1247,736 1252,736 1257,733 1262,734 1268,740 1273,740 1278,739 1283,738 1288,736 1293,741 1298,735 1303,733 1309,740 1314,738 1319,742 1324,742 1329,740 1334,736 1339,734 1344,741 1350,744 1355,734 1360,744 1365,745 1370,740 1375,742 1380,740 1385,737 1390,741 1396,740 1401,740 1406,743 1411,741 1416,737 1421,737 1426,739 1431,735 1437,738 1442,742 1447,736 1452,742 1457,741 1462,741 1467,736 1472,739 1478,739 1483,741 1488,739 1493,737 1498,738" stroke="#ffffff"/>
<polyline fill="none" stroke-width="1" shape-rendering="crispEdges" points="489,739 494,732 499,735 504,740 510,735 515,733 520,737 525,737 530,737 535,736 540,742 545,734 550,737 556,732 561,739 566,736 571,733 576,737 581,736 586,738 591,739 597,737 602,736 607,734 612,731 617,737 622,735 627,737 632,728 638,735 643,738 648,731 653,730 658,736 663,731 668,728 673,734 679,733 684,732 689,726 694,731 699,730 704,732 709,729 714,733 720,728 725,730 730,728 735,731 740,726 745,726 750,731 755,730 760,727 766,727 771,727 776,725 781,727 786,726 791,732 796,730 801,726 807,729 812,727 817,725 822,724 827,723 832,723 837,724 842,719 848,720 853,717 858,718 863,710 868,708 873,709 878,705 883,703 889,701 894,705 899,701 904,700 909,704 914,705 919,703 924,708 930,707 935,708 940,710 945,714 950,713 955,721 960,720 965,726 970,724 976,725 981,719 986,722 991,727 996,729 1001,729 1006,730 1011,734 1017,729 1022,732 1027,725 1032,727 1037,724 1042,717 1047,717 1052,711 1058,701 1063,697 1068,693 1073,685 1078,682 1083,662 1088,657 1093,656 1099,637 1104,637 1109,641 1114,627 1119,628 1124,625 1129,630 1134,633 1140,631 1145,640 1150,645 1155,645 1160,662 1165,669 1170,677 1175,686 1180,690 1186,702 1191,707 1196,711 1201,721 1206,722 1211,725 1216,728 1221,731 1227,731 1232,735 1237,734 1242,733 1247,739 1252,736 1257,741 1262,735 1268,743 1273,734 1278,735 1283,743 1288,737 1293,738 1298,742 1303,737 1309,743 1314,741 1319,740 1324,740 1329,739 1334,735 1339,738 1344,737 1350,740 1355,740 1360,740 1365,741 1370,742 1375,736 1380,736 1385,739 1390,736 1396,736 1401,737 1406,737 1411,744 1416,743 1421,739 1426,738 1431,737 1437,740 1442,737 1447,739 1452,739 1457,739 1462,738 1467,738 1472,737 1478,739 1483,738 1488,740 1493,738 1498,738" stroke="#40ff40"/>
<polyline fill="none" stroke-width="1" shape-rendering="crispEdges" points="489,742 494,730 499,741 504,737 510,736 515,739 520,736 525,739 530,740 535,736 540,733 545,735 550,737 556,744 561,731 566,735 571,732 576,734 581,734 586,735 591,732 597,739 602,733 607,736 612,731 617,733 622,740 627,731 632,737 638,736 643,734 648,739 653,737 658,733 663,733 668,732 673,732 679,738 684,731 689,732 694,731 699,733 704,726 709,735 714,728 720,727 725,727 730,727 735,731 740,727 745,730 750,728 755,734 760,726 766,736 771,736 776,729 781,728 786,730 791,732 796,733 801,726 807,728 812,730 817,729 822,730 827,725 832,730 837,726 842,721 848,725 853,723 858,722 863,716 868,713 873,706 878,708 883,711 889,709 894,708 899,706 904,704 909,705 914,704 919,703 924,709 930,718 935,707 940,710 945,710 950,722 955,713 960,727 965,722 970,722 976,728 981,729 986,730 991,729 996,736 1001,736 1006,726 1011,736 1017,738 1022,730 1027,729 1032,723 1037,725 1042,723 1047,720 1052,710 1058,711 1063,701 1068,695 1073,688 1078,678 1083,678 1088,674 1093,657 1099,646 1104,645 1109,643 1114,644 1119,645 1124,632 1129,636 1134,639 1140,643 1145,645 1150,656 1155,660 1160,664 1165,677 1170,685 1175,687 1180,700 1186,708 1191,709 1196,710 1201,719 1206,720 1211,729 1216,731 1221,731 1227,730 1232,733 1237,732 1242,736 1247,736 1252,736 1257,736 1262,745 1268,738 1273,743 1278,737 1283,740 1288,735 1293,739 1298,741 1303,741 1309,745 1314,739 1319,741 1324,736 1329,735 1334,739 1339,738 1344,740 1350,739 1355,739 1360,740 1365,740 1370,741 1375,741 1380,738 1385,734 1390,738 1396,740 1401,738 1406,735 1411,741 1416,739 1421,743 1426,739 1431,734 1437,734 1442,740 1447,735 1452,737 1457,739 1462,737 1467,737 1472,750 1478,738 1483,736 1488,737 1493,740 1498,741" stroke="#ffa500"/>
<polyline fill="none" stroke-width="1" shape-rendering="crispEdges" points="489,739 494,741 499,740 504,735 510,743 515,737 520,732 525,732 530,737 535,739 540,737 545,740 550,731 556,733 561,735 566,734 571,742 576,738 581,728 586,739 591,736 597,735 602,732 607,740 612,736 617,730 622,739 627,732 632,740 638,732 643,736 648,737 653,734 658,728 663,738 668,733 673,731 679,732 684,731 689,738 694,731 699,728 704,727 709,734 714,726 720,734 725,729 730,731 735,738 740,726 745,725 750,728 755,730 760,724 766,729 771,729 776,729 781,729 786,726 791,730 796,730 801,733 807,726 812,732 817,726 822,730 827,726 832,722 837,720 842,722 848,719 853,720 858,721 863,721 868,712 873,712 878,711 883,722 889,704 894,707 899,711 904,711 909,707 914,708 919,707 924,706 930,712 935,715 940,717 945,718 950,724 955,718 960,723 965,729 970,726 976,726 981,721 986,731 991,731 996,736 1001,733 1006,730 1011,734 1017,727 1022,728 1027,727 1032,731 1037,726 1042,720 1047,721 1052,712 1058,712 1063,703 1068,699 1073,687 1078,689 1083,677 1088,673 1093,663 1099,660 1104,659 1109,646 1114,642 1119,642 1124,645 1129,641 1134,644 1140,647 1145,652 1150,662 1155,664 1160,680 1165,679 1170,686 1175,695 1180,699 1186,707 1191,713 1196,719 1201,724 1206,729 1211,727 1216,729 1221,728 1227,734 1232,736 1237,737 1242,737 1247,739 1252,741 1257,740 1262,734 1268,736 1273,737 1278,735 1283,736 1288,741 1293,736 1298,738 1303,740 1309,735 1314,739 1319,744 1324,737 1329,743 1334,741 1339,741 1344,737 1350,736 1355,739 1360,743 1365,740 1370,741 1375,739 1380,740 1385,737 1390,737 1396,738 1401,739 1406,744 1411,735 1416,741 1421,743 1426,741 1431,745 1437,737 1442,740 1447,735 1452,736 1457,734 1462,742 1467,738 1472,737 1478,740 1483,737 1488,738 1493,741 1498,739" stroke="#a020f0"/>
<polyline fill="none" stroke-width="1" shape-rendering="crispEdges" points="489,736 494,734 499,740 504,732 510,735 515,738 520,736 525,740 530,728 535,733 540,734 545,736 550,738 556,736 561,737 566,735 571,733 576,735 581,736 586,735 591,739 597,735 602,735 607,729 612,734 617,738 622,738 627,736 632,730 638,737 643,736 648,729 653,733 658,732 663,730 668,735 673,728 679,734 684,736 689,731 694,737 699,732 704,736 709,728 714,729 720,726 725,730 730,730 735,731 740,724 745,731 750,732 755,725 760,732 766,729 771,731 776,726 781,732 786,726 791,730 796,726 801,729 807,731 812,727 817,726 822,725 827,731 832,724 837,729 842,721 848,734 853,717 858,721 863,718 868,713 873,713 878,715 883,711 889,712 894,714 899,706 904,707 909,700 914,708 919,709 924,715 930,710 935,711 940,717 945,716 950,723 955,719 960,719 965,727 970,728 976,732 981,729 986,730 991,734 996,733 1001,737 1006,732 1011,739 1017,731 1022,731 1027,729 1032,725 1037,727 1042,719 1047,726 1052,716 1058,708 1063,703 1068,696 1073,694 1078,687 1083,683 1088,676 1093,664 1099,661 1104,657 1109,654 1114,653 1119,646 1124,645 1129,645 1134,653 1140,649 1145,652 1150,660 1155,665 1160,671 1165,677 1170,686 1175,697 1180,702 1186,710 1191,708 1196,720 1201,717 1206,723 1211,726 1216,733 1221,730 1227,731 1232,735 1237,736 1242,737 1247,738 1252,739 1257,739 1262,738 1268,742 1273,737 1278,742 1283,741 1288,739 1293,741 1298,733 1303,740 1309,735 1314,738 1319,738 1324,743 1329,740 1334,742 1339,738 1344,738 1350,740 1355,740 1360,740 1365,737 1370,744 1375,739 1380,743 1385,739 1390,739 1396,740 1401,735 1406,740 1411,738 1416,736 1421,739 1426,735 1431,739 1437,739 1442,733 1447,741 1452,741 1457,739 1462,744 1467,737 1472,743 1478,742 1483,734 1488,738 1493,739 1498,739" stroke="#7fff00"/>
<polyline fill="none" stroke-width="1" shape-rendering="crispEdges" points="489,740 494,734 499,737 504,738 510,740 515,732 520,732 525,737 530,733 535,738 540,738 545,734 550,736 556,735 561,736 566,740 571,738 576,739 581,734 586,734 591,737 597,740 602,735 607,738 612,733 617,737 622,737 627,733 632,737 638,740 643,735 648,733 653,737 658,737 663,735 668,741 673,737 679,729 684,737 689,734 694,733 699,727 704,734 709,729 714,723 720,732 725,730 730,735 735,734 740,732 745,734 750,725 755,726 760,734 766,732 771,731 776,731 781,725 786,722 791,728 796,731 801,728 807,727 812,725 817,728 822,725 827,728 832,728 837,724 842,720 848,725 853,720 858,712 863,719 868,718 873,719 878,711 883,709 889,709 894,704 899,711 904,710 909,709 914,708 919,710 924,711 930,711 935,709 940,714 945,715 950,719 955,719 960,727 965,728 970,732 976,724 981,725 986,730 991,727 996,731 1001,736 1006,730 1011,723 1017,733 1022,732 1027,731 1032,727 1037,723 1042,725 1047,721 1052,717 1058,707 1063,709 1068,705 1073,693 1078,691 1083,685 1088,674 1093,666 1099,667 1104,656 1109,651 1114,650 1119,643 1124,650 1129,646 1134,652 1140,656 1145,658 1150,665 1155,668 1160,672 1165,678 1170,692 1175,695 1180,705 1186,705 1191,712 1196,717 1201,717 1206,726 1211,729 1216,727 1221,733 1227,734 1232,736 1237,738 1242,739 1247,733 1252,738 1257,737 1262,740 1268,736 1273,744 1278,740 1283,738 1288,741 1293,740 1298,737 1303,736 1309,741 1314,739 1319,736 1324,737 1329,737 1334,741 1339,740 1344,738 1350,738 1355,735 1360,737 1365,741 1370,738 1375,737 1380,736 1385,737 1390,741 1396,738 1401,738 1406,738 1411,739 1416,738 1421,740 1426,746 1431,738 1437,738 1442,737 1447,734 1452,739 1457,737 1462,741 1467,737 1472,736 1478,738 1483,737 1488,737 1493,740 1498,738" stroke="#60a0ff"/>
<polyline fill="none" stroke-width="1" shape-rendering="crispEdges" points="489,738 494,733 499,739 504,736 510,735 515,737 520,731 525,734 530,741 535,731 540,739 545,739 550,739 556,738 561,736 566,746 571,739 576,736 581,733 586,734 591,736 597,733 602,737 607,739 612,733 617,739 622,738 627,735 632,735 638,733 643,735 648,735 653,732 658,740 663,733 668,733 673,735 679,737 684,736 689,737 694,729 699,733 704,732 709,732 714,732 720,726 725,733 730,728 735,722 740,729 745,725 750,728 755,730 760,729 766,733 771,726 776,728 781,728 786,729 791,735 796,730 801,729 807,730 812,723 817,731 822,721 827,734 832,719 837,723 842,725 848,723 853,720 858,721 863,719 868,719 873,711 878,715 883,706 889,715 894,711 899,710 904,709 909,706 914,715 919,709 924,714 930,712 935,719 940,718 945,720 950,723 955,722 960,723 965,722 970,727 976,730 981,727 986,725 991,731 996,737 1001,728 1006,734 1011,740 1017,732 1022,734 1027,722 1032,725 1037,726 1042,720 1047,721 1052,716 1058,712 1063,712 1068,699 1073,693 1078,690 1083,681 1088,670 1093,672 1099,658 1104,657 1109,657 1114,651 1119,653 1124,653 1129,654 1134,657 1140,661 1145,659 1150,666 1155,665 1160,675 1165,684 1170,693 1175,697 1180,698 1186,707 1191,713 1196,716 1201,724 1206,725 1211,726 1216,739 1221,735 1227,738 1232,732 1237,736 1242,738 1247,734 1252,734 1257,735 1262,736 1268,738 1273,738 1278,734 1283,734 1288,738 1293,738 1298,738 1303,743 1309,738 1314,743 1319,740 1324,739 1329,736 1334,741 1339,738 1344,738 1350,747 1355,738 1360,741 1365,743 1370,738 1375,737 1380,742 1385,730 1390,733 1396,739 1401,741 1406,742 1411,740 1416,740 1421,744 1426,741 1431,733 1437,738 1442,740 1447,743 1452,737 1457,741 1462,742 1467,736 1472,740 1478,742 1483,738 1488,739 1493,742 1498,739" stroke="#ffffff"/>
<polyline fill="none" stroke-width="1" shape-rendering="crispEdges" points="489,735 494,740 499,738 504,742 510,738 515,738 520,735 525,739 530,735 535,733 540,736 545,739 550,734 556,734 561,738 566,736 571,733 576,737 581,737 586,737 591,738 597,737 602,737 607,734 612,736 617,739 622,736 627,739 632,735 638,731 643,733 648,734 653,734 658,732 663,734 668,735 673,736 679,733 684,731 689,735 694,732 699,736 704,734 709,730 714,729 720,732 725,732 730,728 735,732 740,738 745,729 750,732 755,726 760,732 766,727 771,730 776,730 781,725 786,733 791,729 796,730 801,734 807,733 812,730 817,726 822,728 827,730 832,725 837,726 842,730 848,723 853,725 858,722 863,715 868,713 873,716 878,712 883,716 889,708 894,716 899,704 904,711 909,709 914,711 919,712 924,716 930,711 935,716 940,718 945,720 950,713 955,721 960,726 965,729 970,731 976,731 981,731 986,729 991,729 996,733 1001,731 1006,729 1011,731 1017,732 1022,730 1027,732 1032,731 1037,726 1042,726 1047,719 1052,720 1058,711 1063,706 1068,701 1073,697 1078,692 1083,683 1088,682 1093,673 1099,665 1104,662 1109,654 1114,654 1119,653 1124,658 1129,652 1134,653 1140,662 1145,665 1150,665 1155,673 1160,674 1165,679 1170,696 1175,700 1180,707 1186,711 1191,714 1196,719 1201,723 1206,724 1211,728 1216,729 1221,730 1227,734 1232,736 1237,737 1242,738 1247,740 1252,739 1257,743 1262,737 1268,737 1273,742 1278,736 1283,737 1288,741 1293,740 1298,738 1303,736 1309,738 1314,738 1319,741 1324,738 1329,740 1334,739 1339,737 1344,739 1350,744 1355,740 1360,742 1365,743 1370,736 1375,737 1380,737 1385,745 1390,734 1396,740 1401,741 1406,742 1411,737 1416,738 1421,742 1426,739 1431,740 1437,741 1442,742 1447,738 1452,740 1457,739 1462,742 1467,739 1472,746 1478,734 1483,736 1488,745 1493,738 1498,731" stroke="#c0ff40"/>
<polyline fill="none" stroke-width="1" shape-rendering="crispEdges" points="489,737 494,736 499,739 504,737 510,735 515,743 520,737 525,738 530,738 535,737 540,738 545,742 550,741 556,740 561,734 566,737 571,741 576,736 581,737 586,741 591,739 597,740 602,735 607,737 612,734 617,735 622,733 627,730 632,742 638,737 643,734 648,737 653,731 658,734 663,738 668,738 673,736 679,735 684,734 689,730 694,730 699,733 704,730 709,735 714,732 720,730 725,732 730,732 735,729 740,732 745,735 750,725 755,731 760,733 766,735 771,733 776,726 781,738 786,727 791,732 796,728 801,729 807,732 812,733 817,728 822,726 827,729 832,726 837,731 842,719 848,727 853,722 858,721 863,719 868,718 873,710 878,720 883,715 889,711 894,717 899,711 904,705 909,715 914,709 919,712 924,717 930,716 935,720 940,721 945,726 950,720 955,724 960,720 965,725 970,727 976,727 981,725 986,734 991,732 996,732 1001,735 1006,736 1011,734 1017,736 1022,732 1027,725 1032,726 1037,732 1042,722 1047,725 1052,716 1058,716 1063,713 1068,708 1073,698 1078,686 1083,684 1088,677 1093,677 1099,671 1104,664 1109,657 1114,653 1119,652 1124,658 1129,655 1134,660 1140,665 1145,661 1150,670 1155,675 1160,679 1165,685 1170,696 1175,702 1180,704 1186,707 1191,714 1196,715 1201,724 1206,729 1211,726 1216,730 1221,731 1227,733 1232,735 1237,737 1242,736 1247,740 1252,739 1257,739 1262,735 1268,741 1273,737 1278,733 1283,740 1288,736 1293,739 1298,740 1303,738 1309,741 1314,740 1319,742 1324,741 1329,734 1334,749 1339,741 1344,736 1350,741 1355,740 1360,740 1365,742 1370,739 1375,743 1380,738 1385,739 1390,744 1396,736 1401,742 1406,740 1411,745 1416,734 1421,737 1426,743 1431,743 1437,741 1442,736 1447,738 1452,742 1457,739 1462,739 1467,735 1472,741 1478,749 1483,738 1488,738 1493,734 1498,744" stroke="#b0b0ff"/>
<polyline fill="none" stroke-width="1" shape-rendering="crispEdges" points="489,736 494,738 499,734 504,737 510,734 515,737 520,738 525,736 530,735 535,733 540,730 545,737 550,740 556,739 561,738 566,735 571,740 576,738 581,736 586,738 591,743 597,734 602,735 607,731 612,725 617,735 622,743 627,738 632,735 638,734 643,743 648,732 653,734 658,734 663,734 668,738 673,732 679,733 684,737 689,731 694,733 699,730 704,732 709,736 714,733 720,733 725,732 730,728 735,733 740,730 745,734 750,726 755,732 760,732 766,734 771,726 776,737 781,728 786,730 791,736 796,731 801,734 807,733 812,732 817,727 822,727 827,726 832,730 837,727 842,730 848,723 853,725 858,722 863,726 868,720 873,719 878,718 883,713 889,715 894,713 899,712 904,715 909,708 914,715 919,717 924,716 930,716 935,717 940,715 945,717 950,723 955,719 960,723 965,729 970,731 976,726 981,732 986,728 991,724 996,735 1001,732 1006,729 1011,734 1017,736 1022,728 1027,728 1032,726 1037,730 1042,731 1047,722 1052,720 1058,713 1063,706 1068,704 1073,699 1078,689 1083,689 1088,690 1093,677 1099,667 1104,663 1109,660 1114,662 1119,658 1124,659 1129,659 1134,659 1140,665 1145,663 1150,672 1155,674 1160,677 1165,694 1170,696 1175,708 1180,712 1186,709 1191,715 1196,716 1201,725 1206,725 1211,732 1216,730 1221,738 1227,734 1232,737 1237,734 1242,729 1247,737 1252,737 1257,737 1262,737 1268,741 1273,741 1278,746 1283,741 1288,735 1293,741 1298,743 1303,737 1309,736 1314,739 1319,739 1324,735 1329,744 1334,734 1339,741 1344,739 1350,745 1355,737 1360,737 1365,737 1370,739 1375,735 1380,739 1385,736 1390,740 1396,738 1401,734 1406,741 1411,739 1416,743 1421,739 1426,740 1431,739 1437,739 1442,737 1447,740 1452,737 1457,739 1462,741 1467,736 1472,738 1478,739 1483,745 1488,740 1493,739 1498,738" stroke="#fffff0"/>
<polyline fill="none" stroke-width="1" shape-rendering="crispEdges" points="489,736 494,741 499,735 504,732 510,735 515,735 520,739 525,737 530,741 535,740 540,734 545,730 550,739 556,742 561,733 566,739 571,740 576,731 581,737 586,735 591,738 597,737 602,736 607,734 612,739 617,736 622,736 627,734 632,737 638,733 643,735 648,740 653,733 658,730 663,734 668,734 673,731 679,735 684,736 689,732 694,729 699,731 704,734 709,728 714,735 720,732 725,729 730,734 735,734 740,732 745,734 750,736 755,730 760,731 766,731 771,733 776,733 781,738 786,732 791,731 796,737 801,737 807,735 812,732 817,732 822,733 827,724 832,724 837,726 842,719 848,724 853,722 858,722 863,719 868,716 873,712 878,714 883,717 889,714 894,711 899,714 904,711 909,716 914,720 919,712 924,713 930,717 935,715 940,721 945,722 950,719 955,722 960,726 965,730 970,728 976,726 981,730 986,739 991,735 996,734 1001,731 1006,736 1011,737 1017,736 1022,733 1027,730 1032,727 1037,728 1042,720 1047,725 1052,722 1058,714 1063,712 1068,703 1073,701 1078,695 1083,687 1088,682 1093,682 1099,674 1104,671 1109,659 1114,665 1119,657 1124,657 1129,664 1134,659 1140,663 1145,664 1150,670 1155,678 1160,683 1165,690 1170,696 1175,700 1180,706 1186,708 1191,713 1196,716 1201,729 1206,726 1211,734 1216,732 1221,737 1227,734 1232,740 1237,737 1242,734 1247,741 1252,739 1257,740 1262,741 1268,739 1273,748 1278,740 1283,740 1288,742 1293,739 1298,738 1303,742 1309,735 1314,738 1319,741 1324,743 1329,737 1334,745 1339,736 1344,738 1350,741 1355,738 1360,743 1365,739 1370,739 1375,736 1380,745 1385,741 1390,737 1396,741 1401,741 1406,733 1411,736 1416,742 1421,740 1426,740 1431,740 1437,734 1442,737 1447,742 1452,739 1457,740 1462,738 1467,735 1472,741 1478,742 1483,742 1488,737 1493,739 1498,740" stroke="#3050ff"/>
<polyline fill="none" stroke-width="1" shape-rendering="crispEdges" points="489,739 494,735 499,737 504,741 510,735 515,737 520,740 525,740 530,727 535,737 540,739 545,744 550,738 556,735 561,733 566,737 571,732 576,737 581,734 586,734 591,737 597,733 602,731 607,736 612,739 617,739 622,737 627,739 632,738 638,734 643,736 648,734 653,736 658,737 663,733 668,736 673,738 679,736 684,737 689,737 694,735 699,731 704,729 709,730 714,730 720,734 725,731 730,730 735,731 740,732 745,735 750,736 755,735 760,731 766,735 771,730 776,733 781,728 786,731 791,733 796,732 801,730 807,737 812,732 817,728 822,730 827,731 832,726 837,731 842,722 848,727 853,717 858,722 863,721 868,716 873,717 878,718 883,720 889,716 894,711 899,715 904,714 909,713 914,710 919,719 924,718 930,717 935,718 940,721 945,721 950,724 955,722 960,729 965,728 970,727 976,732 981,730 986,736 991,729 996,732 1001,728 1006,730 1011,737 1017,734 1022,731 1027,734 1032,727 1037,726 1042,723 1047,729 1052,725 1058,716 1063,721 1068,707 1073,696 1078,696 1083,690 1088,690 1093,676 1099,678 1104,670 1109,668 1114,667 1119,662 1124,659 1129,666 1134,664 1140,670 1145,672 1150,668 1155,679 1160,687 1165,692 1170,693 1175,700 1180,703 1186,711 1191,714 1196,717 1201,727 1206,728 1211,730 1216,737 1221,731 1227,738 1232,739 1237,738 1242,737 1247,733 1252,738 1257,734 1262,736 1268,737 1273,738 1278,741 1283,738 1288,736 1293,742 1298,734 1303,744 1309,739 1314,737 1319,738 1324,740 1329,744 1334,739 1339,739 1344,738 1350,743 1355,737 1360,742 1365,739 1370,743 1375,738 1380,734 1385,738 1390,737 1396,742 1401,741 1406,740 1411,743 1416,737 1421,738 1426,735 1431,738 1437,743 1442,738 1447,743 1452,736 1457,736 1462,739 1467,743 1472,733 1478,737 1483,743 1488,742 1493,744 1498,737" stroke="#40e0d0"/>
<polyline fill="none" stroke-width="1" shape-rendering="crispEdges" points="489,734 494,739 499,741 504,734 510,739 515,739 520,738 525,734 530,738 535,733 540,739 545,743 550,740 556,738 561,734 566,734 571,735 576,733 581,738 586,730 591,732 597,732 602,739 607,735 612,733 617,733 622,737 627,735 632,741 638,737 643,734 648,734 653,734 658,733 663,732 668,735 673,733 679,734 684,737 689,730 694,736 699,729 704,735 709,734 714,731 720,733 725,732 730,731 735,727 740,731 745,732 750,731 755,732 760,736 766,730 771,733 776,737 781,730 786,732 791,728 796,730 801,730 807,734 812,736 817,728 822,730 827,731 832,726 837,727 842,724 848,724 853,725 858,724 863,716 868,721 873,722 878,717 883,715 889,714 894,716 899,719 904,715 909,712 914,716 919,717 924,717 930,716 935,721 940,723 945,723 950,723 955,728 960,725 965,718 970,728 976,728 981,734 986,734 991,726 996,738 1001,734 1006,738 1011,732 1017,730 1022,731 1027,734 1032,726 1037,726 1042,729 1047,724 1052,721 1058,715 1063,710 1068,711 1073,701 1078,703 1083,695 1088,689 1093,680 1099,679 1104,673 1109,668 1114,660 1119,664 1124,663 1129,665 1134,669 1140,673 1145,672 1150,672 1155,681 1160,685 1165,699 1170,695 1175,702 1180,712 1186,708 1191,721 1196,726 1201,723 1206,728 1211,733 1216,732 1221,741 1227,738 1232,738 1237,736 1242,742 1247,738 1252,739 1257,739 1262,739 1268,744 1273,739 1278,733 1283,741 1288,737 1293,737 1298,742 1303,743 1309,737 1314,737 1319,740 1324,741 1329,739 1334,744 1339,740 1344,737 1350,737 1355,737 1360,741 1365,739 1370,736 1375,738 1380,740 1385,739 1390,737 1396,740 1401,738 1406,733 1411,740 1416,733 1421,743 1426,746 1431,737 1437,740 1442,737 1447,739 1452,750 1457,740 1462,745 1467,738 1472,743 1478,739 1483,737 1488,740 1493,740 1498,738" stroke="#7fff00"/>
<polyline fill="none" stroke-width="1" shape-rendering="crispEdges" points="489,735 494,739 499,743 504,734 510,736 515,739 520,741 525,734 530,735 535,739 540,738 545,741 550,737 556,739 561,741 566,734 571,742 576,744 581,741 586,736 591,738 597,737 602,736 607,735 612,739 617,736 622,729 627,732 632,735 638,731 643,737 648,733 653,733 658,733 663,737 668,735 673,740 679,735 684,734 689,737 694,737 699,729 704,737 709,732 714,731 720,732 725,735 730,737 735,731 740,734 745,730 750,737 755,735 760,730 766,738 771,732 776,731 781,729 786,735 791,733 796,734 801,730 807,733 812,735 817,729 822,725 827,723 832,731 837,731 842,724 848,725 853,725 858,724 863,730 868,723 873,720 878,714 883,719 889,721 894,715 899,715 904,717 909,717 914,717 919,714 924,717 930,717 935,719 940,723 945,723 950,717 955,721 960,730 965,728 970,730 976,731 981,731 986,733 991,736 996,734 1001,740 1006,733 1011,733 1017,729 1022,731 1027,730 1032,727 1037,734 1042,727 1047,721 1052,714 1058,718 1063,713 1068,704 1073,705 1078,701 1083,696 1088,686 1093,684 1099,679 1104,675 1109,675 1114,667 1119,671 1124,672 1129,666 1134,664 1140,673 1145,678 1150,678 1155,685 1160,686 1165,693 1170,696 1175,707 1180,705 1186,714 1191,717 1196,721 1201,731 1206,724 1211,730 1216,734 1221,732 1227,734 1232,735 1237,735 1242,734 1247,737 1252,739 1257,739 1262,735 1268,737 1273,737 1278,740 1283,734 1288,742 1293,738 1298,742 1303,738 1309,741 1314,736 1319,736 1324,735 1329,742 1334,739 1339,737 1344,740 1350,738 1355,735 1360,735 1365,736 1370,737 1375,738 1380,738 1385,731 1390,744 1396,741 1401,738 1406,739 1411,739 1416,736 1421,740 1426,740 1431,738 1437,745 1442,742 1447,743 1452,738 1457,737 1462,738 1467,738 1472,737 1478,736 1483,738 1488,738 1493,737 1498,740" stroke="#ff2020"/>
<polyline fill="none" stroke-width="1" shape-rendering="crispEdges" points="489,733 494,735 499,736 504,741 510,740 515,735 520,737 525,736 530,741 535,733 540,735 545,735 550,737 556,736 561,741 566,740 571,739 576,737 581,734 586,737 591,738 597,738 602,740 607,737 612,732 617,734 622,733 627,735 632,733 638,734 643,732 648,730 653,738 658,738 663,737 668,732 673,734 679,739 684,734 689,733 694,736 699,735 704,737 709,733 714,730 720,731 725,737 730,730 735,732 740,731 745,730 750,732 755,727 760,730 766,727 771,732 776,725 781,734 786,731 791,733 796,731 801,729 807,737 812,728 817,729 822,728 827,731 832,731 837,727 842,726 848,731 853,730 858,725 863,722 868,723 873,721 878,722 883,714 889,716 894,720 899,719 904,711 909,718 914,717 919,719 924,716 930,719 935,719 940,721 945,723 950,726 955,728 960,724 965,730 970,727 976,728 981,731 986,728 991,729 996,738 1001,731 1006,729 1011,737 1017,727 1022,734 1027,733 1032,728 1037,726 1042,725 1047,721 1052,722 1058,718 1063,717 1068,708 1073,700 1078,702 1083,686 1088,692 1093,682 1099,681 1104,678 1109,673 1114,671 1119,666 1124,670 1129,663 1134,670 1140,674 1145,678 1150,682 1155,685 1160,691 1165,694 1170,699 1175,699 1180,712 1186,711 1191,715 1196,723 1201,724 1206,728 1211,734 1216,731 1221,733 1227,733 1232,738 1237,733 1242,737 1247,732 1252,736 1257,736 1262,738 1268,740 1273,737 1278,738 1283,740 1288,743 1293,737 1298,736 1303,735 1309,737 1314,733 1319,736 1324,739 1329,738 1334,741 1339,732 1344,742 1350,735 1355,739 1360,744 1365,736 1370,737 1375,739 1380,739 1385,738 1390,738 1396,738 1401,743 1406,739 1411,737 1416,743 1421,744 1426,740 1431,739 1437,737 1442,744 1447,737 1452,742 1457,740 1462,739 1467,742 1472,737 1478,741 1483,736 1488,741 1493,741 1498,738" stroke="#ffffff"/>
<polyline fill="none" stroke-width="1" shape-rendering="crispEdges" points="489,738 494,739 499,739 504,737 510,737 515,734 520,737 525,735 530,735 535,738 540,734 545,740 550,739 556,735 561,736 566,738 571,736 576,739 581,741 586,736 591,741 597,738 602,736 607,735 612,732 617,735 622,737 627,738 632,736 638,731 643,731 648,738 653,738 658,733 663,739 668,737 673,739 679,733 684,735 689,737 694,735 699,735 704,735 709,735 714,727 720,735 725,733 730,732 735,728 740,732 745,729 750,733 755,734 760,726 766,732 771,739 776,734 781,728 786,734 791,734 796,730 801,731 807,731 812,726 817,730 822,731 827,726 832,730 837,726 842,724 848,725 853,728 858,725 863,719 868,719 873,723 878,715 883,715 889,717 894,722 899,720 904,716 909,718 914,716 919,720 924,719 930,717 935,717 940,724 945,721 950,721 955,726 960,726 965,727 970,728 976,734 981,734 986,732 991,736 996,732 1001,734 1006,736 1011,734 1017,733 1022,739 1027,738 1032,731 1037,732 1042,729 1047,723 1052,723 1058,721 1063,713 1068,710 1073,707 1078,699 1083,698 1088,698 1093,679 1099,679 1104,676 1109,672 1114,670 1119,673 1124,670 1129,675 1134,670 1140,673 1145,675 1150,682 1155,685 1160,693 1165,695 1170,700 1175,705 1180,711 1186,721 1191,721 1196,721 1201,726 1206,723 1211,730 1216,734 1221,736 1227,739 1232,735 1237,740 1242,735 1247,736 1252,740 1257,735 1262,737 1268,740 1273,737 1278,740 1283,739 1288,736 1293,733 1298,734 1303,738 1309,743 1314,745 1319,739 1324,738 1329,744 1334,738 1339,742 1344,740 1350,739 1355,744 1360,739 1365,738 1370,733 1375,745 1380,739 1385,740 1390,740 1396,740 1401,744 1406,733 1411,743 1416,737 1421,736 1426,740 1431,740 1437,740 1442,743 1447,737 1452,742 1457,739 1462,739 1467,740 1472,745 1478,737 1483,737 1488,735 1493,738 1498,741" stroke="#3050ff"/>
<polyline fill="none" stroke-width="1" shape-rendering="crispEdges" points="489,740 494,737 499,736 504,736 510,736 515,740 520,741 525,736 530,741 535,737 540,736 545,737 550,737 556,734 561,741 566,741 571,739 576,737 581,736 586,740 591,734 597,741 602,738 607,740 612,738 617,737 622,739 627,737 632,734 638,735 643,738 648,733 653,736 658,729 663,734 668,736 673,733 679,737 684,736 689,731 694,738 699,736 704,733 709,736 714,736 720,732 725,733 730,728 735,728 740,732 745,733 750,730 755,732 760,738 766,725 771,733 776,734 781,728 786,738 791,732 796,732 801,731 807,730 812,729 817,733 822,725 827,729 832,729 837,726 842,729 848,724 853,728 858,722 863,723 868,710 873,712 878,719 883,721 889,718 894,719 899,723 904,717 909,711 914,720 919,718 924,715 930,725 935,725 940,721 945,724 950,725 955,725 960,732 965,729 970,729 976,729 981,736 986,733 991,742 996,733 1001,739 1006,734 1011,734 1017,737 1022,731 1027,732 1032,729 1037,728 1042,728 1047,724 1052,721 1058,718 1063,716 1068,707 1073,715 1078,701 1083,699 1088,692 1093,687 1099,684 1104,682 1109,678 1114,672 1119,671 1124,672 1129,672 1134,674 1140,681 1145,679 1150,681 1155,688 1160,693 1165,699 1170,702 1175,710 1180,711 1186,714 1191,718 1196,719 1201,726 1206,726 1211,727 1216,732 1221,733 1227,737 1232,735 1237,740 1242,738 1247,737 1252,741 1257,740 1262,739 1268,741 1273,741 1278,736 1283,738 1288,737 1293,745 1298,738 1303,741 1309,738 1314,734 1319,738 1324,736 1329,738 1334,740 1339,741 1344,738 1350,743 1355,738 1360,739 1365,739 1370,739 1375,740 1380,736 1385,735 1390,742 1396,740 1401,739 1406,743 1411,742 1416,736 1421,739 1426,741 1431,736 1437,737 1442,735 1447,742 1452,737 1457,736 1462,738 1467,739 1472,742 1478,738 1483,738 1488,739 1493,737 1498,733" stroke="#00ffff"/>
<polyline fill="none" stroke-width="1" shape-rendering="crispEdges" points="489,739 494,736 499,733 504,731 510,738 515,735 520,736 525,731 530,741 535,742 540,733 545,737 550,733 556,738 561,732 566,735 571,735 576,739 581,739 586,730 591,738 597,739 602,733 607,738 612,742 617,737 622,737 627,732 632,737 638,737 643,736 648,739 653,741 658,731 663,739 668,731 673,738 679,734 684,734 689,736 694,734 699,732 704,734 709,734 714,735 720,724 725,731 730,732 735,734 740,735 745,733 750,733 755,734 760,734 766,731 771,731 776,737 781,738 786,732 791,734 796,734 801,730 807,731 812,733 817,733 822,730 827,730 832,730 837,729 842,733 848,735 853,725 858,722 863,728 868,729 873,721 878,721 883,720 889,719 894,717 899,718 904,715 909,715 914,718 919,719 924,721 930,718 935,721 940,719 945,724 950,727 955,724 960,727 965,732 970,734 976,734 981,733 986,729 991,737 996,736 1001,735 1006,736 1011,734 1017,743 1022,732 1027,726 1032,732 1037,732 1042,730 1047,728 1052,723 1058,716 1063,713 1068,710 1073,705 1078,706 1083,694 1088,695 1093,694 1099,683 1104,682 1109,674 1114,678 1119,672 1124,673 1129,677 1134,674 1140,680 1145,682 1150,682 1155,693 1160,690 1165,700 1170,703 1175,702 1180,713 1186,722 1191,722 1196,722 1201,725 1206,728 1211,727 1216,736 1221,734 1227,733 1232,742 1237,737 1242,735 1247,739 1252,740 1257,740 1262,740 1268,741 1273,743 1278,739 1283,740 1288,741 1293,742 1298,732 1303,741 1309,736 1314,740 1319,739 1324,740 1329,736 1334,742 1339,739 1344,740 1350,742 1355,738 1360,741 1365,740 1370,737 1375,737 1380,737 1385,739 1390,738 1396,740 1401,738 1406,741 1411,738 1416,742 1421,741 1426,739 1431,738 1437,735 1442,742 1447,739 1452,738 1457,735 1462,741 1467,736 1472,737 1478,736 1483,735 1488,739 1493,742 1498,737" stroke="#60a0ff"/>
<polyline fill="none" stroke-width="1" shape-rendering="crispEdges" points="489,737 494,736 499,737 504,731 510,735 515,742 520,739 525,738 530,732 535,737 540,738 545,735 550,735 556,733 561,738 566,741 571,733 576,742 581,739 586,738 591,735 597,732 602,738 607,737 612,737 617,736 622,739 627,736 632,740 638,736 643,734 648,738 653,728 658,736 663,736 668,734 673,736 679,735 684,738 689,736 694,734 699,733 704,739 709,734 714,734 720,734 725,732 730,731 735,740 740,734 745,736 750,735 755,729 760,730 766,736 771,737 776,734 781,731 786,738 791,730 796,724 801,734 807,734 812,735 817,728 822,730 827,728 832,733 837,727 842,728 848,727 853,726 858,731 863,724 868,717 873,721 878,721 883,732 889,720 894,719 899,716 904,719 909,721 914,718 919,719 924,721 930,719 935,723 940,720 945,724 950,727 955,734 960,732 965,728 970,731 976,734 981,732 986,732 991,729 996,736 1001,736 1006,734 1011,735 1017,728 1022,729 1027,732 1032,730 1037,733 1042,731 1047,725 1052,725 1058,722 1063,717 1068,711 1073,698 1078,702 1083,702 1088,696 1093,696 1099,686 1104,685 1109,685 1114,674 1119,673 1124,673 1129,673 1134,679 1140,676 1145,684 1150,687 1155,688 1160,695 1165,696 1170,706 1175,708 1180,716 1186,719 1191,718 1196,723 1201,726 1206,725 1211,734 1216,735 1221,738 1227,739 1232,737 1237,736 1242,737 1247,739 1252,733 1257,740 1262,743 1268,734 1273,738 1278,738 1283,736 1288,737 1293,743 1298,743 1303,743 1309,742 1314,743 1319,736 1324,734 1329,745 1334,737 1339,734 1344,739 1350,738 1355,736 1360,736 1365,735 1370,745 1375,740 1380,738 1385,732 1390,738 1396,734 1401,740 1406,740 1411,740 1416,740 1421,734 1426,736 1431,740 1437,735 1442,741 1447,740 1452,742 1457,737 1462,740 1467,738 1472,739 1478,743 1483,741 1488,742 1493,739 1498,741" stroke="#ff7f50"/>
<polyline fill="none" stroke-width="1" shape-rendering="crispEdges" points="489,737 494,734 499,735 504,740 510,737 515,737 520,736 525,740 530,739 535,741 540,739 545,735 550,737 556,740 561,734 566,734 571,738 576,739 581,736 586,732 591,740 597,736 602,736 607,736 612,739 617,731 622,740 627,732 632,736 638,737 643,739 648,740 653,738 658,729 663,732 668,735 673,737 679,735 684,734 689,736 694,729 699,733 704,732 709,732 714,736 720,735 725,731 730,740 735,730 740,732 745,729 750,735 755,734 760,736 766,733 771,734 776,728 781,734 786,731 791,729 796,734 801,731 807,734 812,731 817,732 822,732 827,735 832,729 837,734 842,732 848,730 853,727 858,723 863,722 868,724 873,722 878,715 883,719 889,720 894,718 899,715 904,718 909,727 914,717 919,719 924,717 930,726 935,723 940,723 945,723 950,723 955,735 960,725 965,730 970,726 976,729 981,734 986,730 991,737 996,734 1001,736 1006,733 1011,737 1017,734 1022,736 1027,733 1032,728 1037,729 1042,723 1047,724 1052,728 1058,718 1063,716 1068,715 1073,709 1078,709 1083,703 1088,694 1093,692 1099,686 1104,680 1109,682 1114,679 1119,679 1124,675 1129,685 1134,684 1140,682 1145,682 1150,689 1155,694 1160,698 1165,700 1170,700 1175,710 1180,713 1186,721 1191,720 1196,730 1201,726 1206,731 1211,731 1216,731 1221,740 1227,732 1232,737 1237,741 1242,736 1247,742 1252,736 1257,739 1262,739 1268,736 1273,735 1278,744 1283,733 1288,743 1293,743 1298,744 1303,742 1309,740 1314,740 1319,741 1324,742 1329,738 1334,736 1339,737 1344,738 1350,739 1355,737 1360,735 1365,743 1370,740 1375,740 1380,739 1385,743 1390,739 1396,741 1401,736 1406,737 1411,744 1416,742 1421,731 1426,739 1431,740 1437,741 1442,735 1447,736 1452,739 1457,736 1462,742 1467,739 1472,743 1478,736 1483,738 1488,746 1493,738 1498,736" stroke="#00ffff"/>
<polyline fill="none" stroke-width="1" shape-rendering="crispEdges" points="489,739 494,738 499,740 504,737 510,737 515,741 520,739 525,736 530,734 535,735 540,736 545,738 550,744 556,741 561,738 566,741 571,734 576,737 581,738 586,737 591,739 597,732 602,734 607,737 612,733 617,738 622,737 627,742 632,741 638,737 643,738 648,738 653,737 658,737 663,740 668,734 673,734 679,734 684,737 689,734 694,739 699,732 704,731 709,734 714,733 720,733 725,735 730,736 735,738 740,733 745,735 750,732 755,733 760,731 766,733 771,733 776,731 781,735 786,736 791,735 796,729 801,731 807,729 812,732 817,730 822,738 827,733 832,732 837,731 842,729 848,729 853,729 858,719 863,721 868,723 873,721 878,726 883,716 889,721 894,723 899,719 904,722 909,724 914,715 919,720 924,724 930,723 935,726 940,726 945,725 950,728 955,728 960,732 965,730 970,730 976,733 981,735 986,731 991,734 996,734 1001,738 1006,731 1011,732 1017,737 1022,733 1027,732 1032,731 1037,724 1042,726 1047,725 1052,720 1058,720 1063,717 1068,716 1073,710 1078,705 1083,703 1088,701 1093,688 1099,687 1104,687 1109,685 1114,681 1119,679 1124,677 1129,680 1134,678 1140,682 1145,684 1150,694 1155,691 1160,701 1165,702 1170,705 1175,706 1180,714 1186,719 1191,721 1196,731 1201,725 1206,736 1211,733 1216,734 1221,734 1227,731 1232,732 1237,740 1242,737 1247,739 1252,742 1257,737 1262,737 1268,736 1273,737 1278,739 1283,738 1288,739 1293,742 1298,741 1303,740 1309,742 1314,737 1319,736 1324,743 1329,742 1334,742 1339,744 1344,742 1350,732 1355,739 1360,736 1365,742 1370,741 1375,744 1380,739 1385,742 1390,743 1396,739 1401,737 1406,739 1411,738 1416,741 1421,741 1426,741 1431,737 1437,740 1442,741 1447,743 1452,742 1457,729 1462,741 1467,737 1472,735 1478,736 1483,738 1488,741 1493,742 1498,735" stroke="#ff00ff"/>
<polyline fill="none" stroke-width="1" shape-rendering="crispEdges" points="489,737 494,737 499,734 504,737 510,734 515,741 520,741 525,740 530,738 535,736 540,739 545,743 550,737 556,736 561,735 566,733 571,739 576,732 581,735 586,737 591,735 597,739 602,739 607,732 612,740 617,733 622,734 627,736 632,735 638,729 643,734 648,740 653,739 658,733 663,732 668,736 673,738 679,735 684,737 689,739 694,731 699,731 704,734 709,737 714,735 720,734 725,737 730,737 735,735 740,731 745,737 750,735 755,733 760,734 766,731 771,734 776,742 781,734 786,735 791,733 796,732 801,732 807,733 812,729 817,731 822,729 827,726 832,728 837,729 842,733 848,731 853,725 858,724 863,722 868,720 873,726 878,722 883,720 889,715 894,722 899,717 904,718 909,726 914,724 919,715 924,722 930,727 935,719 940,730 945,727 950,727 955,727 960,730 965,730 970,732 976,732 981,731 986,736 991,733 996,730 1001,734 1006,731 1011,733 1017,736 1022,728 1027,738 1032,732 1037,734 1042,726 1047,723 1052,727 1058,714 1063,718 1068,715 1073,715 1078,703 1083,703 1088,696 1093,695 1099,690 1104,687 1109,679 1114,680 1119,680 1124,682 1129,687 1134,681 1140,685 1145,692 1150,691 1155,690 1160,701 1165,705 1170,702 1175,712 1180,718 1186,718 1191,719 1196,725 1201,729 1206,730 1211,731 1216,733 1221,732 1227,738 1232,739 1237,735 1242,738 1247,738 1252,742 1257,745 1262,736 1268,737 1273,738 1278,734 1283,740 1288,742 1293,742 1298,739 1303,738 1309,736 1314,740 1319,742 1324,739 1329,736 1334,734 1339,746 1344,740 1350,741 1355,736 1360,740 1365,740 1370,738 1375,735 1380,739 1385,738 1390,738 1396,736 1401,739 1406,736 1411,741 1416,740 1421,736 1426,737 1431,735 1437,737 1442,736 1447,738 1452,741 1457,737 1462,739 1467,737 1472,739 1478,737 1483,737 1488,741 1493,735 1498,741" stroke="#80ffd0"/>
<polyline fill="none" stroke-width="1" shape-rendering="crispEdges" points="489,738 494,735 499,739 504,740 510,735 515,738 520,743 525,738 530,737 535,738 540,738 545,736 550,739 556,744 561,734 566,733 571,737 576,738 581,734 586,738 591,737 597,736 602,736 607,736 612,735 617,743 622,733 627,737 632,737 638,737 643,738 648,739 653,738 658,735 663,739 668,740 673,734 679,734 684,735 689,736 694,739 699,731 704,739 709,737 714,735 720,735 725,728 730,736 735,732 740,735 745,735 750,732 755,729 760,733 766,731 771,730 776,732 781,734 786,733 791,733 796,731 801,734 807,736 812,729 817,732 822,730 827,728 832,733 837,730 842,731 848,731 853,726 858,727 863,727 868,721 873,722 878,715 883,719 889,716 894,720 899,723 904,722 909,719 914,716 919,723 924,726 930,728 935,725 940,725 945,726 950,728 955,734 960,735 965,728 970,733 976,729 981,728 986,734 991,737 996,741 1001,732 1006,732 1011,732 1017,736 1022,731 1027,732 1032,736 1037,728 1042,728 1047,728 1052,725 1058,722 1063,722 1068,719 1073,709 1078,708 1083,706 1088,696 1093,694 1099,694 1104,689 1109,683 1114,684 1119,683 1124,683 1129,687 1134,683 1140,685 1145,689 1150,693 1155,695 1160,700 1165,701 1170,692 1175,713 1180,715 1186,719 1191,722 1196,728 1201,727 1206,732 1211,729 1216,734 1221,727 1227,741 1232,739 1237,740 1242,737 1247,734 1252,743 1257,741 1262,740 1268,736 1273,738 1278,737 1283,747 1288,734 1293,739 1298,732 1303,736 1309,741 1314,739 1319,744 1324,743 1329,742 1334,739 1339,736 1344,743 1350,740 1355,737 1360,743 1365,736 1370,738 1375,748 1380,737 1385,739 1390,741 1396,737 1401,744 1406,740 1411,739 1416,738 1421,737 1426,741 1431,739 1437,738 1442,743 1447,735 1452,741 1457,743 1462,739 1467,740 1472,739 1478,733 1483,744 1488,735 1493,737 1498,739" stroke="#ffffff"/>
<polyline fill="none" stroke-width="1" shape-rendering="crispEdges" points="489,733 494,738 499,735 504,740 510,737 515,736 520,742 525,741 530,737 535,739 540,734 545,735 550,734 556,734 561,739 566,735 571,738 576,739 581,730 586,736 591,745 597,739 602,735 607,736 612,738 617,742 622,738 627,735 632,738 638,739 643,739 648,740 653,738 658,735 663,733 668,737 673,736 679,738 684,739 689,735 694,732 699,735 704,731 709,738 714,734 720,732 725,730 730,734 735,733 740,737 745,735 750,730 755,732 760,735 766,730 771,731 776,733 781,731 786,729 791,737 796,729 801,735 807,728 812,744 817,729 822,733 827,735 832,728 837,728 842,734 848,730 853,725 858,733 863,727 868,726 873,724 878,728 883,718 889,725 894,724 899,721 904,722 909,721 914,722 919,717 924,726 930,717 935,729 940,724 945,726 950,730 955,732 960,730 965,734 970,733 976,731 981,726 986,737 991,732 996,734 1001,737 1006,731 1011,737 1017,733 1022,733 1027,734 1032,728 1037,728 1042,729 1047,730 1052,729 1058,721 1063,716 1068,715 1073,709 1078,705 1083,708 1088,703 1093,700 1099,684 1104,693 1109,687 1114,689 1119,686 1124,681 1129,690 1134,683 1140,685 1145,692 1150,689 1155,696 1160,700 1165,701 1170,708 1175,710 1180,713 1186,719 1191,722 1196,728 1201,729 1206,730 1211,736 1216,733 1221,739 1227,741 1232,738 1237,735 1242,745 1247,738 1252,740 1257,737 1262,734 1268,739 1273,744 1278,738 1283,738 1288,741 1293,746 1298,741 1303,740 1309,748 1314,736 1319,733 1324,743 1329,741 1334,737 1339,739 1344,736 1350,739 1355,735 1360,739 1365,737 1370,736 1375,740 1380,732 1385,735 1390,740 1396,735 1401,740 1406,736 1411,735 1416,737 1421,739 1426,737 1431,740 1437,737 1442,739 1447,739 1452,733 1457,735 1462,736 1467,739 1472,744 1478,736 1483,740 1488,742 1493,741 1498,736" stroke="#b0b0ff"/>
<polyline fill="none" stroke-width="1" shape-rendering="crispEdges" points="489,740 494,736 499,735 504,735 510,740 515,743 520,741 525,735 530,734 535,736 540,739 545,741 550,735 556,735 561,738 566,740 571,732 576,741 581,739 586,743 591,729 597,738 602,738 607,735 612,741 617,736 622,734 627,735 632,736 638,734 643,738 648,736 653,733 658,730 663,741 668,734 673,736 679,733 684,737 689,735 694,737 699,732 704,745 709,739 714,733 720,732 725,732 730,737 735,740 740,738 745,733 750,731 755,735 760,731 766,741 771,724 776,733 781,739 786,736 791,731 796,734 801,739 807,733 812,736 817,732 822,735 827,732 832,736 837,729 842,725 848,728 853,731 858,726 863,731 868,725 873,726 878,721 883,726 889,726 894,726 899,722 904,718 909,723 914,724 919,722 924,722 930,725 935,725 940,727 945,723 950,729 955,732 960,731 965,731 970,737 976,729 981,731 986,729 991,730 996,742 1001,738 1006,733 1011,733 1017,737 1022,737 1027,740 1032,744 1037,730 1042,727 1047,734 1052,729 1058,729 1063,714 1068,712 1073,710 1078,713 1083,706 1088,706 1093,697 1099,693 1104,696 1109,689 1114,692 1119,688 1124,682 1129,687 1134,688 1140,694 1145,691 1150,697 1155,696 1160,702 1165,704 1170,713 1175,714 1180,718 1186,727 1191,719 1196,725 1201,731 1206,729 1211,732 1216,730 1221,738 1227,737 1232,734 1237,736 1242,734 1247,734 1252,733 1257,739 1262,740 1268,739 1273,742 1278,737 1283,737 1288,745 1293,734 1298,739 1303,737 1309,739 1314,738 1319,739 1324,739 1329,730 1334,737 1339,736 1344,740 1350,743 1355,745 1360,738 1365,737 1370,740 1375,738 1380,742 1385,740 1390,737 1396,741 1401,740 1406,737 1411,738 1416,739 1421,738 1426,731 1431,744 1437,736 1442,740 1447,740 1452,742 1457,739 1462,740 1467,732 1472,731 1478,742 1483,735 1488,738 1493,738 1498,739" stroke="#40e0d0"/>
<polyline fill="none" stroke-width="1" shape-rendering="crispEdges" points="489,740 494,738 499,732 504,734 510,744 515,741 520,742 525,739 530,738 535,738 540,732 545,738 550,739 556,734 561,741 566,731 571,736 576,744 581,736 586,739 591,734 597,735 602,735 607,739 612,732 617,739 622,731 627,739 632,740 638,739 643,736 648,736 653,732 658,735 663,735 668,734 673,735 679,735 684,731 689,736 694,735 699,734 704,736 709,742 714,738 720,735 725,737 730,731 735,732 740,733 745,736 750,730 755,736 760,733 766,729 771,736 776,735 781,731 786,730 791,731 796,735 801,738 807,727 812,736 817,729 822,728 827,733 832,733 837,731 842,730 848,734 853,731 858,729 863,729 868,724 873,727 878,718 883,720 889,717 894,721 899,725 904,718 909,726 914,723 919,719 924,725 930,725 935,727 940,723 945,729 950,731 955,729 960,731 965,735 970,728 976,733 981,734 986,733 991,730 996,735 1001,731 1006,735 1011,735 1017,735 1022,721 1027,731 1032,731 1037,732 1042,732 1047,731 1052,728 1058,722 1063,722 1068,712 1073,717 1078,713 1083,710 1088,701 1093,700 1099,697 1104,694 1109,686 1114,693 1119,683 1124,688 1129,682 1134,689 1140,695 1145,690 1150,695 1155,702 1160,707 1165,703 1170,709 1175,713 1180,718 1186,722 1191,721 1196,732 1201,727 1206,728 1211,732 1216,733 1221,730 1227,735 1232,737 1237,736 1242,730 1247,744 1252,739 1257,745 1262,739 1268,737 1273,739 1278,741 1283,735 1288,740 1293,741 1298,739 1303,740 1309,737 1314,736 1319,739 1324,739 1329,738 1334,737 1339,740 1344,741 1350,737 1355,743 1360,742 1365,738 1370,743 1375,738 1380,741 1385,740 1390,734 1396,737 1401,741 1406,739 1411,738 1416,734 1421,739 1426,735 1431,739 1437,746 1442,738 1447,740 1452,740 1457,739 1462,738 1467,739 1472,741 1478,742 1483,738 1488,742 1493,738 1498,743" stroke="#b0b0ff"/>
<polyline fill="none" stroke-width="1" shape-rendering="crispEdges" points="489,737 494,734 499,736 504,735 510,738 515,738 520,738 525,741 530,747 535,734 540,735 545,738 550,734 556,742 561,737 566,736 571,736 576,735 581,738 586,743 591,734 597,740 602,731 607,735 612,738 617,737 622,729 627,737 632,737 638,735 643,739 648,735 653,731 658,733 663,736 668,738 673,738 679,734 684,731 689,733 694,732 699,733 704,734 709,738 714,734 720,733 725,735 730,734 735,739 740,729 745,733 750,735 755,730 760,732 766,731 771,737 776,731 781,743 786,732 791,730 796,736 801,733 807,743 812,739 817,735 822,734 827,731 832,735 837,730 842,732 848,732 853,732 858,729 863,729 868,726 873,728 878,726 883,726 889,724 894,719 899,721 904,722 909,720 914,724 919,723 924,723 930,724 935,721 940,725 945,729 950,727 955,728 960,734 965,730 970,733 976,735 981,730 986,736 991,731 996,736 1001,741 1006,738 1011,735 1017,739 1022,732 1027,735 1032,738 1037,728 1042,728 1047,724 1052,728 1058,728 1063,720 1068,715 1073,715 1078,712 1083,707 1088,706 1093,701 1099,703 1104,692 1109,696 1114,691 1119,689 1124,689 1129,689 1134,689 1140,693 1145,698 1150,699 1155,705 1160,702 1165,708 1170,712 1175,718 1180,718 1186,723 1191,723 1196,728 1201,735 1206,725 1211,729 1216,732 1221,741 1227,740 1232,738 1237,739 1242,734 1247,737 1252,742 1257,733 1262,733 1268,738 1273,739 1278,734 1283,738 1288,737 1293,742 1298,740 1303,740 1309,740 1314,735 1319,739 1324,740 1329,731 1334,739 1339,738 1344,734 1350,737 1355,739 1360,740 1365,736 1370,740 1375,741 1380,740 1385,744 1390,740 1396,743 1401,742 1406,740 1411,735 1416,739 1421,736 1426,740 1431,738 1437,737 1442,740 1447,738 1452,738 1457,734 1462,739 1467,736 1472,738 1478,740 1483,741 1488,739 1493,737 1498,740" stroke="#3050ff"/>
<polyline fill="none" stroke-width="1" shape-rendering="crispEdges" points="489,736 494,741 499,738 504,741 510,737 515,735 520,742 525,736 530,742 535,737 540,735 545,734 550,736 556,732 561,740 566,736 571,735 576,738 581,738 586,738 591,734 597,738 602,736 607,743 612,736 617,737 622,736 627,739 632,736 638,737 643,734 648,735 653,738 658,744 663,734 668,740 673,735 679,737 684,737 689,743 694,742 699,738 704,732 709,732 714,736 720,737 725,737 730,737 735,736 740,732 745,737 750,734 755,735 760,736 766,738 771,737 776,735 781,739 786,735 791,731 796,737 801,731 807,733 812,737 817,737 822,732 827,733 832,736 837,727 842,730 848,735 853,728 858,724 863,727 868,731 873,727 878,721 883,728 889,726 894,726 899,719 904,721 909,720 914,728 919,716 924,725 930,725 935,728 940,725 945,733 950,731 955,731 960,730 965,730 970,739 976,734 981,729 986,733 991,736 996,738 1001,735 1006,740 1011,734 1017,737 1022,730 1027,733 1032,735 1037,734 1042,733 1047,729 1052,728 1058,725 1063,718 1068,720 1073,722 1078,704 1083,710 1088,708 1093,701 1099,699 1104,699 1109,695 1114,691 1119,689 1124,691 1129,691 1134,689 1140,690 1145,700 1150,696 1155,703 1160,708 1165,707 1170,711 1175,712 1180,724 1186,724 1191,723 1196,727 1201,729 1206,728 1211,733 1216,743 1221,736 1227,738 1232,735 1237,741 1242,737 1247,737 1252,737 1257,735 1262,747 1268,742 1273,741 1278,741 1283,740 1288,738 1293,740 1298,735 1303,736 1309,737 1314,738 1319,743 1324,739 1329,740 1334,738 1339,740 1344,736 1350,739 1355,738 1360,736 1365,735 1370,740 1375,743 1380,741 1385,740 1390,738 1396,737 1401,739 1406,743 1411,744 1416,742 1421,742 1426,741 1431,736 1437,736 1442,740 1447,740 1452,737 1457,740 1462,739 1467,737 1472,742 1478,738 1483,739 1488,740 1493,743 1498,737" stroke="#3050ff"/>
<polyline fill="none" stroke-width="1" shape-rendering="crispEdges" points="489,743 494,739 499,736 504,744 510,731 515,739 520,731 525,742 530,738 535,739 540,739 545,729 550,735 556,739 561,736 566,739 571,741 576,739 581,735 586,743 591,733 597,739 602,737 607,738 612,739 617,735 622,740 627,733 632,736 638,740 643,733 648,741 653,740 658,737 663,731 668,735 673,737 679,736 684,736 689,738 694,735 699,736 704,738 709,736 714,736 720,729 725,737 730,730 735,735 740,731 745,735 750,736 755,735 760,727 766,735 771,733 776,733 781,734 786,735 791,730 796,728 801,730 807,735 812,737 817,733 822,735 827,730 832,734 837,730 842,731 848,725 853,735 858,727 863,724 868,728 873,728 878,724 883,723 889,725 894,723 899,725 904,729 909,726 914,726 919,721 924,727 930,725 935,726 940,727 945,720 950,726 955,737 960,734 965,730 970,731 976,732 981,735 986,736 991,732 996,737 1001,742 1006,736 1011,738 1017,730 1022,735 1027,733 1032,730 1037,733 1042,729 1047,733 1052,728 1058,721 1063,726 1068,722 1073,715 1078,701 1083,705 1088,701 1093,700 1099,703 1104,697 1109,691 1114,686 1119,688 1124,695 1129,690 1134,689 1140,693 1145,692 1150,702 1155,703 1160,709 1165,710 1170,713 1175,720 1180,721 1186,724 1191,725 1196,726 1201,728 1206,732 1211,735 1216,736 1221,732 1227,735 1232,740 1237,737 1242,733 1247,737 1252,733 1257,737 1262,735 1268,740 1273,734 1278,738 1283,748 1288,738 1293,737 1298,737 1303,738 1309,744 1314,741 1319,742 1324,744 1329,741 1334,736 1339,740 1344,739 1350,739 1355,735 1360,734 1365,740 1370,737 1375,740 1380,736 1385,740 1390,738 1396,741 1401,734 1406,740 1411,743 1416,737 1421,732 1426,739 1431,738 1437,738 1442,736 1447,741 1452,740 1457,740 1462,739 1467,735 1472,738 1478,739 1483,742 1488,736 1493,740 1498,740" stroke="#ffd700"/>
<polyline fill="none" stroke-width="1" shape-rendering="crispEdges" points="489,737 494,738 499,740 504,735 510,737 515,740 520,735 525,735 530,743 535,736 540,738 545,738 550,735 556,735 561,741 566,740 571,737 576,738 581,739 586,736 591,737 597,740 602,733 607,736 612,733 617,733 622,742 627,738 632,739 638,740 643,738 648,741 653,735 658,729 663,735 668,741 673,735 679,732 684,729 689,738 694,737 699,738 704,733 709,737 714,731 720,737 725,733 730,727 735,736 740,730 745,737 750,732 755,733 760,737 766,739 771,732 776,738 781,735 786,733 791,740 796,736 801,735 807,736 812,730 817,735 822,731 827,729 832,732 837,733 842,731 848,733 853,729 858,731 863,727 868,725 873,731 878,721 883,726 889,726 894,720 899,722 904,724 909,726 914,725 919,722 924,724 930,725 935,727 940,727 945,725 950,732 955,728 960,729 965,733 970,737 976,732 981,732 986,730 991,739 996,736 1001,734 1006,737 1011,738 1017,731 1022,728 1027,735 1032,733 1037,726 1042,729 1047,728 1052,726 1058,724 1063,726 1068,722 1073,711 1078,710 1083,709 1088,708 1093,705 1099,695 1104,699 1109,695 1114,696 1119,689 1124,687 1129,688 1134,693 1140,694 1145,694 1150,701 1155,695 1160,703 1165,708 1170,715 1175,721 1180,715 1186,720 1191,727 1196,730 1201,732 1206,736 1211,738 1216,732 1221,731 1227,739 1232,740 1237,736 1242,736 1247,735 1252,737 1257,743 1262,739 1268,736 1273,740 1278,741 1283,741 1288,741 1293,737 1298,740 1303,736 1309,736 1314,737 1319,742 1324,742 1329,740 1334,735 1339,735 1344,733 1350,739 1355,743 1360,736 1365,734 1370,745 1375,741 1380,736 1385,735 1390,740 1396,737 1401,737 1406,738 1411,742 1416,741 1421,737 1426,739 1431,744 1437,740 1442,738 1447,734 1452,738 1457,739 1462,743 1467,743 1472,739 1478,742 1483,742 1488,738 1493,741 1498,737" stroke="#60a0ff"/>
<polyline fill="none" stroke-width="1" shape-rendering="crispEdges" points="489,735 494,740 499,737 504,740 510,736 515,740 520,736 525,732 530,740 535,739 540,740 545,740 550,737 556,735 561,735 566,734 571,739 576,738 581,734 586,737 591,737 597,742 602,735 607,732 612,742 617,740 622,733 627,737 632,738 638,738 643,737 648,735 653,740 658,737 663,743 668,736 673,738 679,733 684,736 689,729 694,735 699,739 704,735 709,736 714,737 720,734 725,736 730,733 735,738 740,740 745,738 750,739 755,735 760,737 766,738 771,739 776,736 781,732 786,736 791,741 796,735 801,735 807,730 812,732 817,737 822,735 827,735 832,735 837,733 842,732 848,733 853,730 858,733 863,728 868,729 873,726 878,727 883,725 889,728 894,727 899,718 904,731 909,724 914,724 919,729 924,721 930,724 935,722 940,730 945,724 950,727 955,730 960,731 965,736 970,728 976,731 981,732 986,735 991,733 996,741 1001,736 1006,741 1011,736 1017,733 1022,736 1027,740 1032,737 1037,729 1042,732 1047,731 1052,728 1058,727 1063,725 1068,719 1073,718 1078,710 1083,711 1088,707 1093,700 1099,700 1104,701 1109,696 1114,688 1119,698 1124,696 1129,695 1134,696 1140,704 1145,698 1150,700 1155,700 1160,713 1165,711 1170,714 1175,715 1180,719 1186,721 1191,728 1196,724 1201,733 1206,728 1211,729 1216,736 1221,738 1227,737 1232,738 1237,738 1242,741 1247,743 1252,738 1257,741 1262,738 1268,736 1273,741 1278,735 1283,741 1288,738 1293,738 1298,737 1303,740 1309,738 1314,741 1319,736 1324,735 1329,739 1334,738 1339,735 1344,742 1350,740 1355,736 1360,742 1365,740 1370,737 1375,737 1380,738 1385,739 1390,736 1396,736 1401,741 1406,739 1411,737 1416,739 1421,733 1426,738 1431,735 1437,740 1442,741 1447,734 1452,740 1457,736 1462,740 1467,739 1472,737 1478,738 1483,739 1488,737 1493,733 1498,737" stroke="#ffffff"/>
<polyline fill="none" stroke-width="1" shape-rendering="crispEdges" points="489,735 494,737 499,740 504,739 510,737 515,742 520,741 525,738 530,742 535,738 540,740 545,736 550,738 556,736 561,738 566,736 571,736 576,734 581,739 586,743 591,731 597,735 602,736 607,737 612,740 617,737 622,742 627,739 632,738 638,735 643,737 648,735 653,735 658,736 663,734 668,732 673,735 679,730 684,738 689,734 694,732 699,733 704,736 709,741 714,734 720,737 725,734 730,731 735,735 740,733 745,740 750,733 755,732 760,739 766,733 771,736 776,735 781,733 786,735 791,737 796,735 801,733 807,738 812,737 817,736 822,734 827,733 832,735 837,732 842,728 848,725 853,733 858,730 863,726 868,728 873,727 878,724 883,725 889,728 894,722 899,725 904,724 909,725 914,730 919,726 924,723 930,724 935,724 940,730 945,733 950,729 955,727 960,734 965,734 970,733 976,738 981,739 986,734 991,733 996,734 1001,739 1006,737 1011,734 1017,734 1022,738 1027,736 1032,739 1037,735 1042,727 1047,730 1052,726 1058,729 1063,724 1068,721 1073,718 1078,713 1083,712 1088,705 1093,706 1099,705 1104,703 1109,698 1114,694 1119,698 1124,693 1129,692 1134,698 1140,698 1145,699 1150,709 1155,705 1160,706 1165,711 1170,715 1175,717 1180,721 1186,721 1191,721 1196,725 1201,729 1206,733 1211,733 1216,737 1221,736 1227,740 1232,735 1237,734 1242,735 1247,740 1252,739 1257,739 1262,742 1268,738 1273,740 1278,739 1283,739 1288,736 1293,739 1298,737 1303,736 1309,741 1314,740 1319,738 1324,735 1329,737 1334,740 1339,737 1344,737 1350,745 1355,740 1360,743 1365,739 1370,739 1375,738 1380,740 1385,742 1390,740 1396,740 1401,735 1406,738 1411,737 1416,737 1421,738 1426,743 1431,740 1437,743 1442,741 1447,739 1452,741 1457,743 1462,739 1467,741 1472,742 1478,743 1483,740 1488,738 1493,740 1498,737" stroke="#fffff0"/>
<polyline fill="none" stroke-width="1" shape-rendering="crispEdges" points="489,741 494,740 499,740 504,741 510,742 515,739 520,739 525,737 530,740 535,739 540,735 545,738 550,738 556,737 561,737 566,739 571,739 576,736 581,735 586,733 591,735 597,737 602,736 607,731 612,739 617,738 622,734 627,740 632,739 638,737 643,740 648,735 653,736 658,740 663,734 668,736 673,740 679,736 684,751 689,733 694,731 699,731 704,736 709,734 714,734 720,732 725,730 730,733 735,738 740,738 745,738 750,734 755,737 760,735 766,738 771,736 776,739 781,734 786,737 791,740 796,737 801,741 807,731 812,732 817,736 822,734 827,733 832,737 837,730 842,743 848,732 853,726 858,730 863,724 868,729 873,727 878,731 883,725 889,729 894,727 899,730 904,729 909,717 914,728 919,721 924,726 930,726 935,732 940,727 945,727 950,729 955,733 960,731 965,732 970,726 976,731 981,736 986,731 991,737 996,738 1001,740 1006,733 1011,736 1017,735 1022,739 1027,733 1032,736 1037,733 1042,727 1047,735 1052,727 1058,726 1063,721 1068,719 1073,722 1078,720 1083,716 1088,713 1093,706 1099,702 1104,699 1109,703 1114,695 1119,701 1124,698 1129,694 1134,697 1140,697 1145,704 1150,701 1155,705 1160,714 1165,714 1170,714 1175,719 1180,721 1186,723 1191,730 1196,727 1201,734 1206,732 1211,734 1216,737 1221,731 1227,737 1232,736 1237,738 1242,735 1247,737 1252,737 1257,739 1262,737 1268,733 1273,743 1278,739 1283,743 1288,743 1293,737 1298,734 1303,737 1309,741 1314,741 1319,737 1324,742 1329,738 1334,743 1339,741 1344,736 1350,735 1355,739 1360,737 1365,739 1370,741 1375,742 1380,737 1385,740 1390,739 1396,740 1401,735 1406,742 1411,744 1416,737 1421,736 1426,742 1431,733 1437,735 1442,744 1447,740 1452,740 1457,741 1462,742 1467,740 1472,739 1478,738 1483,739 1488,737 1493,741 1498,741" stroke="#00ffff"/>
<polyline fill="none" stroke-width="1" shape-rendering="crispEdges" points="489,735 494,740 499,740 504,735 510,734 515,739 520,736 525,737 530,738 535,739 540,739 545,744 550,733 556,738 561,739 566,740 571,741 576,743 581,736 586,736 591,735 597,738 602,740 607,732 612,739 617,735 622,733 627,746 632,740 638,735 643,741 648,738 653,735 658,733 663,731 668,741 673,735 679,735 684,735 689,734 694,735 699,737 704,736 709,737 714,740 720,740 725,737 730,732 735,735 740,736 745,737 750,731 755,732 760,737 766,737 771,735 776,729 781,735 786,736 791,732 796,734 801,734 807,734 812,738 817,734 822,734 827,736 832,733 837,730 842,731 848,736 853,731 858,733 863,720 868,734 873,730 878,727 883,731 889,727 894,724 899,727 904,726 909,720 914,721 919,728 924,722 930,732 935,726 940,728 945,731 950,728 955,727 960,729 965,731 970,731 976,739 981,730 986,736 991,738 996,739 1001,732 1006,737 1011,740 1017,732 1022,744 1027,733 1032,740 1037,733 1042,728 1047,732 1052,733 1058,727 1063,725 1068,715 1073,716 1078,718 1083,714 1088,711 1093,714 1099,701 1104,701 1109,701 1114,699 1119,700 1124,699 1129,696 1134,701 1140,700 1145,704 1150,706 1155,711 1160,709 1165,716 1170,718 1175,720 1180,717 1186,719 1191,729 1196,732 1201,730 1206,729 1211,729 1216,736 1221,732 1227,735 1232,737 1237,737 1242,741 1247,738 1252,741 1257,741 1262,734 1268,733 1273,737 1278,740 1283,744 1288,735 1293,745 1298,745 1303,732 1309,737 1314,743 1319,738 1324,740 1329,738 1334,743 1339,740 1344,741 1350,741 1355,745 1360,739 1365,740 1370,738 1375,737 1380,742 1385,737 1390,734 1396,745 1401,738 1406,739 1411,741 1416,742 1421,741 1426,726 1431,742 1437,742 1442,742 1447,741 1452,740 1457,747 1462,739 1467,734 1472,743 1478,738 1483,741 1488,737 1493,740 1498,739" stroke="#3050ff"/>
<polyline fill="none" stroke-width="1" shape-rendering="crispEdges" points="489,734 494,741 499,741 504,733 510,737 515,734 520,738 525,745 530,736 535,736 540,735 545,741 550,735 556,738 561,735 566,739 571,741 576,739 581,746 586,736 591,743 597,734 602,740 607,731 612,736 617,739 622,734 627,743 632,739 638,736 643,738 648,734 653,743 658,732 663,732 668,740 673,737 679,734 684,740 689,738 694,735 699,737 704,734 709,733 714,735 720,738 725,732 730,737 735,736 740,732 745,736 750,736 755,736 760,732 766,736 771,731 776,730 781,740 786,738 791,736 796,732 801,732 807,735 812,739 817,736 822,738 827,734 832,733 837,733 842,735 848,729 853,732 858,730 863,720 868,729 873,727 878,727 883,727 889,727 894,724 899,729 904,721 909,721 914,730 919,725 924,733 930,730 935,729 940,729 945,728 950,730 955,731 960,729 965,737 970,733 976,727 981,736 986,735 991,734 996,738 1001,732 1006,737 1011,737 1017,736 1022,732 1027,734 1032,734 1037,736 1042,731 1047,732 1052,724 1058,727 1063,723 1068,720 1073,715 1078,713 1083,711 1088,715 1093,706 1099,708 1104,701 1109,690 1114,697 1119,700 1124,697 1129,696 1134,697 1140,701 1145,704 1150,708 1155,705 1160,712 1165,714 1170,723 1175,720 1180,725 1186,720 1191,727 1196,732 1201,731 1206,732 1211,734 1216,735 1221,740 1227,739 1232,733 1237,736 1242,736 1247,739 1252,733 1257,739 1262,741 1268,742 1273,743 1278,738 1283,738 1288,737 1293,736 1298,736 1303,740 1309,736 1314,746 1319,735 1324,734 1329,736 1334,740 1339,734 1344,738 1350,742 1355,741 1360,742 1365,736 1370,735 1375,741 1380,736 1385,735 1390,742 1396,742 1401,741 1406,738 1411,731 1416,737 1421,737 1426,740 1431,741 1437,737 1442,739 1447,739 1452,742 1457,737 1462,738 1467,735 1472,743 1478,739 1483,737 1488,740 1493,732 1498,740" stroke="#ffffff"/>
<polyline fill="none" stroke-width="1" shape-rendering="crispEdges" points="489,736 494,752 499,743 504,741 510,732 515,737 520,739 525,736 530,740 535,735 540,737 545,739 550,738 556,736 561,743 566,735 571,742 576,735 581,740 586,738 591,735 597,736 602,741 607,740 612,735 617,732 622,742 627,738 632,736 638,732 643,733 648,737 653,734 658,736 663,734 668,737 673,741 679,734 684,735 689,735 694,738 699,736 704,734 709,733 714,736 720,734 725,735 730,741 735,736 740,738 745,737 750,740 755,736 760,734 766,734 771,734 776,734 781,740 786,734 791,737 796,734 801,739 807,735 812,735 817,733 822,735 827,731 832,737 837,732 842,732 848,732 853,733 858,733 863,726 868,729 873,730 878,729 883,729 889,731 894,725 899,727 904,728 909,733 914,729 919,725 924,731 930,730 935,725 940,728 945,730 950,734 955,728 960,731 965,734 970,735 976,736 981,732 986,735 991,737 996,737 1001,734 1006,735 1011,732 1017,739 1022,735 1027,736 1032,737 1037,733 1042,732 1047,732 1052,731 1058,728 1063,729 1068,718 1073,723 1078,719 1083,717 1088,708 1093,706 1099,710 1104,701 1109,705 1114,696 1119,692 1124,703 1129,706 1134,703 1140,699 1145,709 1150,708 1155,712 1160,706 1165,710 1170,719 1175,718 1180,723 1186,726 1191,729 1196,732 1201,731 1206,732 1211,732 1216,736 1221,731 1227,735 1232,736 1237,735 1242,738 1247,739 1252,739 1257,740 1262,744 1268,738 1273,739 1278,738 1283,741 1288,737 1293,738 1298,743 1303,743 1309,741 1314,741 1319,738 1324,737 1329,744 1334,737 1339,734 1344,740 1350,742 1355,742 1360,738 1365,744 1370,740 1375,739 1380,744 1385,739 1390,738 1396,741 1401,730 1406,743 1411,737 1416,739 1421,740 1426,735 1431,737 1437,743 1442,739 1447,739 1452,739 1457,740 1462,738 1467,737 1472,738 1478,741 1483,739 1488,742 1493,737 1498,738" stroke="#80ff00"/>
<polyline fill="none" stroke-width="1" shape-rendering="crispEdges" points="489,740 494,740 499,743 504,740 510,734 515,735 520,734 525,737 530,736 535,732 540,745 545,736 550,736 556,738 561,735 566,736 571,741 576,745 581,736 586,736 591,735 597,736 602,741 607,742 612,738 617,739 622,736 627,737 632,743 638,733 643,738 648,736 653,737 658,741 663,732 668,735 673,738 679,731 684,742 689,739 694,732 699,736 704,738 709,737 714,732 720,740 725,741 730,734 735,732 740,736 745,740 750,736 755,734 760,740 766,736 771,729 776,736 781,736 786,738 791,736 796,737 801,738 807,741 812,734 817,738 822,735 827,736 832,732 837,730 842,734 848,731 853,730 858,731 863,726 868,733 873,724 878,726 883,725 889,734 894,724 899,721 904,726 909,729 914,725 919,728 924,731 930,730 935,729 940,729 945,731 950,731 955,733 960,730 965,734 970,736 976,733 981,739 986,742 991,738 996,737 1001,737 1006,732 1011,736 1017,735 1022,737 1027,736 1032,736 1037,734 1042,738 1047,728 1052,724 1058,728 1063,731 1068,725 1073,723 1078,720 1083,715 1088,711 1093,704 1099,705 1104,705 1109,702 1114,700 1119,703 1124,704 1129,699 1134,705 1140,708 1145,704 1150,708 1155,710 1160,710 1165,719 1170,715 1175,722 1180,726 1186,727 1191,728 1196,727 1201,731 1206,731 1211,728 1216,735 1221,738 1227,738 1232,742 1237,733 1242,740 1247,736 1252,734 1257,738 1262,741 1268,740 1273,735 1278,738 1283,737 1288,739 1293,741 1298,741 1303,737 1309,738 1314,734 1319,740 1324,736 1329,744 1334,740 1339,735 1344,742 1350,744 1355,737 1360,744 1365,738 1370,741 1375,740 1380,740 1385,742 1390,739 1396,737 1401,740 1406,741 1411,739 1416,744 1421,737 1426,745 1431,742 1437,736 1442,741 1447,740 1452,740 1457,741 1462,739 1467,741 1472,736 1478,740 1483,735 1488,738 1493,738 1498,741" stroke="#c0ff40"/>
<polyline fill="none" stroke-width="1" shape-rendering="crispEdges" points="489,739 494,738 499,736 504,741 510,734 515,739 520,741 525,738 530,741 535,738 540,739 545,742 550,735 556,734 561,737 566,738 571,741 576,740 581,735 586,740 591,737 597,740 602,742 607,732 612,740 617,743 622,743 627,739 632,740 638,740 643,732 648,731 653,737 658,739 663,739 668,736 673,734 679,740 684,736 689,727 694,739 699,735 704,734 709,738 714,740 720,732 725,734 730,738 735,734 740,730 745,725 750,740 755,737 760,738 766,738 771,733 776,734 781,736 786,738 791,734 796,733 801,740 807,739 812,734 817,734 822,739 827,731 832,736 837,731 842,736 848,731 853,735 858,731 863,733 868,727 873,728 878,733 883,730 889,727 894,723 899,731 904,722 909,731 914,728 919,723 924,728 930,722 935,728 940,733 945,734 950,729 955,732 960,734 965,735 970,734 976,736 981,738 986,736 991,734 996,738 1001,739 1006,738 1011,734 1017,734 1022,741 1027,730 1032,737 1037,729 1042,731 1047,732 1052,731 1058,727 1063,726 1068,726 1073,722 1078,717 1083,719 1088,714 1093,711 1099,707 1104,709 1109,703 1114,701 1119,700 1124,701 1129,706 1134,705 1140,707 1145,702 1150,711 1155,706 1160,714 1165,719 1170,718 1175,720 1180,723 1186,724 1191,731 1196,734 1201,732 1206,741 1211,734 1216,736 1221,737 1227,727 1232,737 1237,739 1242,739 1247,737 1252,740 1257,741 1262,732 1268,744 1273,738 1278,740 1283,738 1288,739 1293,740 1298,733 1303,744 1309,742 1314,737 1319,742 1324,741 1329,737 1334,736 1339,736 1344,742 1350,737 1355,737 1360,742 1365,742 1370,740 1375,734 1380,737 1385,744 1390,746 1396,737 1401,741 1406,737 1411,738 1416,740 1421,743 1426,737 1431,735 1437,738 1442,740 1447,738 1452,735 1457,738 1462,739 1467,745 1472,738 1478,738 1483,743 1488,738 1493,739 1498,735" stroke="#ffd700"/>
<polyline fill="none" stroke-width="1" shape-rendering="crispEdges" points="489,743 494,730 499,737 504,736 510,733 515,737 520,743 525,743 530,730 535,737 540,736 545,737 550,738 556,741 561,739 566,740 571,735 576,736 581,731 586,740 591,740 597,737 602,739 607,737 612,737 617,739 622,738 627,735 632,739 638,736 643,736 648,735 653,738 658,735 663,736 668,741 673,737 679,738 684,734 689,732 694,741 699,735 704,729 709,740 714,735 720,736 725,740 730,736 735,731 740,737 745,735 750,735 755,735 760,733 766,736 771,737 776,734 781,728 786,737 791,735 796,729 801,733 807,738 812,735 817,737 822,735 827,737 832,735 837,733 842,739 848,731 853,730 858,730 863,730 868,734 873,730 878,733 883,730 889,731 894,724 899,732 904,728 909,728 914,731 919,727 924,730 930,731 935,732 940,732 945,728 950,731 955,735 960,733 965,736 970,733 976,736 981,740 986,737 991,732 996,738 1001,738 1006,735 1011,732 1017,738 1022,734 1027,736 1032,736 1037,726 1042,734 1047,733 1052,733 1058,734 1063,726 1068,727 1073,723 1078,719 1083,716 1088,710 1093,710 1099,709 1104,705 1109,708 1114,701 1119,709 1124,700 1129,701 1134,700 1140,705 1145,708 1150,705 1155,712 1160,713 1165,716 1170,722 1175,724 1180,725 1186,729 1191,730 1196,729 1201,725 1206,730 1211,733 1216,735 1221,736 1227,738 1232,742 1237,735 1242,742 1247,733 1252,737 1257,742 1262,741 1268,734 1273,737 1278,742 1283,739 1288,740 1293,740 1298,742 1303,739 1309,745 1314,741 1319,737 1324,737 1329,739 1334,736 1339,736 1344,737 1350,738 1355,734 1360,742 1365,738 1370,739 1375,740 1380,735 1385,744 1390,742 1396,733 1401,738 1406,736 1411,735 1416,738 1421,732 1426,737 1431,737 1437,742 1442,738 1447,745 1452,742 1457,738 1462,736 1467,738 1472,737 1478,740 1483,736 1488,734 1493,736 1498,736" stroke="#ffffff"/>
<polyline fill="none" stroke-width="1" shape-rendering="crispEdges" points="489,738 494,738 499,739 504,741 510,743 515,738 520,736 525,740 530,740 535,736 540,742 545,740 550,737 556,738 561,736 566,735 571,737 576,738 581,739 586,740 591,739 597,735 602,739 607,733 612,742 617,738 622,738 627,739 632,737 638,739 643,742 648,739 653,732 658,735 663,740 668,733 673,738 679,736 684,735 689,740 694,741 699,740 704,735 709,732 714,734 720,736 725,737 730,735 735,734 740,738 745,737 750,732 755,735 760,732 766,741 771,735 776,730 781,738 786,738 791,733 796,735 801,734 807,738 812,730 817,735 822,741 827,732 832,737 837,734 842,729 848,732 853,735 858,728 863,733 868,728 873,724 878,734 883,732 889,724 894,732 899,726 904,721 909,725 914,722 919,725 924,724 930,731 935,725 940,729 945,728 950,726 955,732 960,734 965,729 970,734 976,730 981,730 986,737 991,736 996,737 1001,737 1006,738 1011,738 1017,732 1022,737 1027,728 1032,734 1037,735 1042,736 1047,734 1052,731 1058,735 1063,723 1068,722 1073,724 1078,724 1083,718 1088,716 1093,711 1099,712 1104,703 1109,707 1114,705 1119,705 1124,701 1129,704 1134,703 1140,708 1145,710 1150,705 1155,709 1160,717 1165,713 1170,720 1175,721 1180,721 1186,724 1191,733 1196,734 1201,734 1206,743 1211,739 1216,736 1221,733 1227,738 1232,733 1237,737 1242,736 1247,741 1252,746 1257,741 1262,740 1268,740 1273,740 1278,738 1283,739 1288,734 1293,741 1298,738 1303,740 1309,740 1314,740 1319,745 1324,735 1329,737 1334,734 1339,741 1344,740 1350,735 1355,740 1360,734 1365,737 1370,737 1375,736 1380,741 1385,742 1390,738 1396,743 1401,739 1406,745 1411,740 1416,738 1421,740 1426,740 1431,738 1437,737 1442,737 1447,739 1452,737 1457,739 1462,741 1467,743 1472,737 1478,739 1483,742 1488,738 1493,736 1498,738" stroke="#ffff00"/>
<polyline fill="none" stroke-width="1" shape-rendering="crispEdges" points="489,738 494,744 499,738 504,734 510,736 515,738 520,744 525,735 530,737 535,740 540,739 545,740 550,733 556,736 561,741 566,743 571,742 576,737 581,736 586,741 591,733 597,740 602,735 607,738 612,737 617,738 622,736 627,736 632,739 638,736 643,743 648,741 653,740 658,741 663,736 668,741 673,739 679,739 684,733 689,737 694,737 699,734 704,737 709,733 714,739 720,735 725,737 730,732 735,733 740,740 745,741 750,737 755,734 760,735 766,734 771,734 776,734 781,735 786,732 791,735 796,741 801,734 807,730 812,736 817,735 822,737 827,731 832,731 837,730 842,733 848,730 853,732 858,738 863,732 868,729 873,728 878,727 883,728 889,729 894,726 899,728 904,727 909,727 914,727 919,726 924,730 930,728 935,724 940,735 945,734 950,738 955,731 960,733 965,737 970,734 976,735 981,736 986,735 991,738 996,736 1001,737 1006,737 1011,735 1017,737 1022,736 1027,736 1032,734 1037,738 1042,739 1047,730 1052,731 1058,725 1063,724 1068,721 1073,724 1078,718 1083,721 1088,719 1093,714 1099,715 1104,713 1109,708 1114,702 1119,706 1124,702 1129,708 1134,708 1140,709 1145,707 1150,713 1155,713 1160,719 1165,713 1170,723 1175,718 1180,732 1186,729 1191,730 1196,735 1201,732 1206,735 1211,732 1216,741 1221,737 1227,736 1232,739 1237,736 1242,741 1247,737 1252,740 1257,739 1262,735 1268,738 1273,742 1278,737 1283,737 1288,736 1293,736 1298,737 1303,737 1309,739 1314,737 1319,744 1324,739 1329,741 1334,742 1339,738 1344,738 1350,739 1355,736 1360,739 1365,744 1370,743 1375,746 1380,733 1385,739 1390,744 1396,742 1401,737 1406,737 1411,740 1416,741 1421,744 1426,740 1431,737 1437,736 1442,737 1447,739 1452,736 1457,739 1462,740 1467,739 1472,738 1478,740 1483,736 1488,742 1493,745 1498,738" stroke="#ff2020"/>
<polyline fill="none" stroke-width="1" shape-rendering="crispEdges" points="489,741 494,738 499,740 504,740 510,740 515,744 520,736 525,743 530,743 535,744 540,736 545,739 550,735 556,738 561,740 566,741 571,737 576,734 581,738 586,735 591,739 597,736 602,738 607,735 612,741 617,739 622,740 627,733 632,742 638,741 643,740 648,737 653,738 658,740 663,740 668,735 673,739 679,736 684,740 689,734 694,734 699,736 704,740 709,738 714,736 720,736 725,736 730,737 735,732 740,737 745,734 750,738 755,736 760,740 766,739 771,730 776,738 781,734 786,737 791,732 796,730 801,739 807,733 812,733 817,734 822,740 827,737 832,734 837,732 842,734 848,729 853,739 858,733 863,732 868,731 873,730 878,726 883,729 889,730 894,730 899,730 904,724 909,727 914,735 919,730 924,732 930,733 935,730 940,730 945,728 950,732 955,734 960,733 965,735 970,734 976,736 981,735 986,732 991,740 996,739 1001,735 1006,731 1011,735 1017,738 1022,736 1027,732 1032,738 1037,732 1042,736 1047,732 1052,732 1058,730 1063,724 1068,728 1073,718 1078,717 1083,721 1088,716 1093,717 1099,710 1104,712 1109,708 1114,703 1119,709 1124,708 1129,706 1134,706 1140,708 1145,711 1150,710 1155,716 1160,714 1165,718 1170,721 1175,722 1180,726 1186,730 1191,734 1196,732 1201,735 1206,732 1211,732 1216,742 1221,731 1227,735 1232,734 1237,740 1242,737 1247,736 1252,740 1257,737 1262,739 1268,737 1273,737 1278,739 1283,737 1288,737 1293,745 1298,737 1303,738 1309,741 1314,744 1319,736 1324,738 1329,734 1334,739 1339,737 1344,738 1350,742 1355,738 1360,735 1365,731 1370,740 1375,740 1380,739 1385,739 1390,736 1396,739 1401,735 1406,745 1411,738 1416,736 1421,733 1426,738 1431,740 1437,738 1442,746 1447,740 1452,736 1457,738 1462,737 1467,740 1472,736 1478,742 1483,742 1488,734 1493,734 1498,736" stroke="#da70d6"/>
<polyline fill="none" stroke-width="1" shape-rendering="crispEdges" points="489,737 494,737 499,738 504,739 510,738 515,735 520,739 525,739 530,741 535,741 540,737 545,741 550,738 556,741 561,737 566,735 571,747 576,736 581,737 586,735 591,735 597,734 602,737 607,735 612,737 617,735 622,737 627,741 632,736 638,743 643,740 648,737 653,742 658,737 663,735 668,737 673,741 679,740 684,737 689,738 694,733 699,735 704,736 709,738 714,735 720,734 725,738 730,732 735,738 740,738 745,734 750,738 755,736 760,738 766,735 771,733 776,731 781,735 786,740 791,738 796,737 801,736 807,733 812,739 817,738 822,738 827,738 832,737 837,732 842,737 848,734 853,734 858,732 863,729 868,733 873,726 878,727 883,734 889,729 894,732 899,730 904,728 909,729 914,726 919,725 924,726 930,732 935,732 940,729 945,727 950,732 955,732 960,734 965,738 970,738 976,729 981,739 986,737 991,732 996,731 1001,743 1006,734 1011,741 1017,740 1022,736 1027,739 1032,737 1037,730 1042,734 1047,738 1052,730 1058,733 1063,725 1068,728 1073,721 1078,722 1083,718 1088,716 1093,713 1099,710 1104,712 1109,713 1114,708 1119,706 1124,708 1129,710 1134,707 1140,711 1145,709 1150,719 1155,714 1160,720 1165,719 1170,717 1175,721 1180,727 1186,730 1191,727 1196,730 1201,733 1206,731 1211,731 1216,735 1221,738 1227,737 1232,739 1237,736 1242,740 1247,740 1252,739 1257,739 1262,743 1268,735 1273,742 1278,741 1283,739 1288,741 1293,737 1298,744 1303,740 1309,741 1314,742 1319,741 1324,741 1329,742 1334,737 1339,734 1344,735 1350,742 1355,738 1360,741 1365,736 1370,743 1375,735 1380,742 1385,740 1390,737 1396,736 1401,744 1406,742 1411,738 1416,737 1421,740 1426,738 1431,736 1437,737 1442,739 1447,738 1452,740 1457,735 1462,738 1467,742 1472,741 1478,737 1483,737 1488,741 1493,733 1498,742" stroke="#ffffff"/>
<polyline fill="none" stroke-width="1" shape-rendering="crispEdges" points="489,744 494,739 499,738 504,742 510,743 515,734 520,744 525,741 530,737 535,735 540,735 545,740 550,737 556,734 561,742 566,743 571,743 576,741 581,736 586,735 591,740 597,736 602,738 607,740 612,738 617,744 622,740 627,727 632,736 638,742 643,738 648,735 653,737 658,746 663,742 668,736 673,735 679,741 684,739 689,734 694,734 699,737 704,735 709,736 714,735 720,738 725,739 730,735 735,735 740,735 745,735 750,734 755,737 760,733 766,736 771,734 776,738 781,740 786,737 791,733 796,739 801,739 807,738 812,733 817,734 822,732 827,741 832,747 837,733 842,733 848,734 853,734 858,733 863,729 868,731 873,736 878,731 883,734 889,731 894,727 899,728 904,728 909,728 914,733 919,729 924,727 930,731 935,730 940,734 945,733 950,728 955,735 960,735 965,742 970,741 976,732 981,734 986,738 991,737 996,740 1001,738 1006,735 1011,741 1017,737 1022,734 1027,739 1032,736 1037,733 1042,734 1047,733 1052,733 1058,730 1063,730 1068,727 1073,722 1078,724 1083,716 1088,722 1093,712 1099,715 1104,714 1109,704 1114,711 1119,710 1124,709 1129,712 1134,710 1140,711 1145,712 1150,717 1155,713 1160,722 1165,720 1170,728 1175,723 1180,729 1186,734 1191,728 1196,731 1201,734 1206,734 1211,737 1216,737 1221,735 1227,740 1232,736 1237,737 1242,736 1247,738 1252,741 1257,740 1262,735 1268,741 1273,734 1278,741 1283,742 1288,736 1293,738 1298,740 1303,732 1309,741 1314,742 1319,742 1324,738 1329,738 1334,739 1339,739 1344,737 1350,741 1355,738 1360,739 1365,739 1370,739 1375,744 1380,742 1385,739 1390,740 1396,741 1401,745 1406,739 1411,741 1416,744 1421,734 1426,736 1431,738 1437,740 1442,743 1447,735 1452,735 1457,745 1462,740 1467,740 1472,741 1478,741 1483,741 1488,740 1493,735 1498,741" stroke="#00c0c0"/>
<polyline fill="none" stroke-width="1" shape-rendering="crispEdges" points="489,740 494,736 499,739 504,737 510,737 515,737 520,739 525,739 530,740 535,737 540,737 545,735 550,741 556,734 561,740 566,739 571,737 576,735 581,737 586,737 591,738 597,735 602,735 607,735 612,737 617,740 622,738 627,739 632,735 638,733 643,738 648,739 653,733 658,737 663,741 668,733 673,736 679,733 684,743 689,735 694,732 699,739 704,735 709,737 714,736 720,734 725,736 730,732 735,738 740,736 745,737 750,735 755,735 760,737 766,737 771,734 776,735 781,737 786,739 791,734 796,738 801,737 807,735 812,734 817,734 822,735 827,732 832,738 837,737 842,736 848,730 853,733 858,728 863,735 868,730 873,731 878,732 883,726 889,729 894,727 899,730 904,726 909,734 914,728 919,725 924,733 930,733 935,730 940,723 945,729 950,730 955,736 960,732 965,736 970,736 976,734 981,733 986,734 991,736 996,734 1001,739 1006,740 1011,735 1017,733 1022,737 1027,731 1032,730 1037,735 1042,738 1047,737 1052,731 1058,726 1063,726 1068,729 1073,726 1078,724 1083,719 1088,716 1093,721 1099,713 1104,710 1109,710 1114,709 1119,709 1124,710 1129,711 1134,715 1140,710 1145,709 1150,705 1155,713 1160,714 1165,724 1170,719 1175,727 1180,726 1186,730 1191,732 1196,728 1201,732 1206,738 1211,734 1216,732 1221,736 1227,741 1232,737 1237,740 1242,741 1247,736 1252,734 1257,739 1262,737 1268,734 1273,738 1278,737 1283,740 1288,743 1293,736 1298,738 1303,738 1309,740 1314,745 1319,744 1324,742 1329,739 1334,739 1339,739 1344,737 1350,739 1355,735 1360,745 1365,736 1370,741 1375,732 1380,741 1385,740 1390,739 1396,739 1401,738 1406,744 1411,736 1416,738 1421,741 1426,739 1431,741 1437,745 1442,742 1447,741 1452,737 1457,739 1462,739 1467,743 1472,738 1478,743 1483,740 1488,739 1493,734 1498,743" stroke="#ffe0a0"/>
<polyline fill="none" stroke-width="1" shape-rendering="crispEdges" points="489,740 494,739 499,738 504,735 510,734 515,739 520,743 525,741 530,734 535,736 540,734 545,740 550,736 556,739 561,741 566,737 571,738 576,735 581,733 586,734 591,742 597,747 602,738 607,742 612,738 617,741 622,736 627,741 632,739 638,738 643,733 648,740 653,744 658,737 663,741 668,737 673,738 679,736 684,739 689,734 694,738 699,738 704,742 709,738 714,738 720,740 725,735 730,740 735,736 740,741 745,727 750,734 755,735 760,738 766,733 771,739 776,739 781,735 786,738 791,735 796,741 801,737 807,737 812,734 817,732 822,734 827,734 832,737 837,733 842,737 848,732 853,736 858,733 863,735 868,733 873,729 878,731 883,732 889,736 894,729 899,733 904,728 909,725 914,729 919,732 924,732 930,736 935,728 940,730 945,733 950,740 955,737 960,735 965,738 970,733 976,734 981,733 986,739 991,734 996,735 1001,734 1006,738 1011,738 1017,740 1022,736 1027,733 1032,736 1037,730 1042,741 1047,735 1052,736 1058,729 1063,725 1068,724 1073,726 1078,723 1083,724 1088,720 1093,717 1099,714 1104,717 1109,714 1114,710 1119,706 1124,707 1129,710 1134,711 1140,716 1145,713 1150,711 1155,719 1160,715 1165,719 1170,722 1175,723 1180,723 1186,734 1191,739 1196,730 1201,729 1206,731 1211,739 1216,736 1221,731 1227,737 1232,735 1237,734 1242,740 1247,738 1252,733 1257,737 1262,741 1268,737 1273,740 1278,748 1283,739 1288,737 1293,738 1298,740 1303,742 1309,741 1314,738 1319,740 1324,737 1329,738 1334,738 1339,735 1344,746 1350,741 1355,740 1360,738 1365,736 1370,737 1375,739 1380,736 1385,737 1390,741 1396,743 1401,739 1406,740 1411,742 1416,741 1421,737 1426,736 1431,740 1437,734 1442,737 1447,737 1452,739 1457,739 1462,742 1467,740 1472,741 1478,739 1483,737 1488,742 1493,738 1498,733" stroke="#40e0d0"/>
<polyline fill="none" stroke-width="1" shape-rendering="crispEdges" points="489,737 494,742 499,739 504,737 510,738 515,737 520,737 525,739 530,741 535,742 540,744 545,740 550,737 556,740 561,735 566,740 571,740 576,735 581,738 586,739 591,741 597,736 602,736 607,741 612,734 617,738 622,739 627,738 632,734 638,741 643,743 648,741 653,733 658,737 663,740 668,736 673,732 679,734 684,738 689,739 694,737 699,736 704,738 709,734 714,742 720,734 725,740 730,741 735,736 740,728 745,729 750,735 755,738 760,741 766,739 771,739 776,738 781,736 786,735 791,737 796,738 801,738 807,731 812,733 817,737 822,737 827,736 832,739 837,738 842,736 848,730 853,731 858,727 863,733 868,729 873,733 878,735 883,730 889,732 894,735 899,725 904,732 909,729 914,728 919,728 924,731 930,732 935,735 940,732 945,736 950,736 955,734 960,739 965,736 970,730 976,736 981,738 986,739 991,737 996,738 1001,739 1006,734 1011,744 1017,737 1022,740 1027,733 1032,737 1037,736 1042,732 1047,730 1052,732 1058,731 1063,734 1068,728 1073,725 1078,721 1083,721 1088,721 1093,716 1099,718 1104,716 1109,714 1114,716 1119,714 1124,705 1129,706 1134,712 1140,714 1145,718 1150,715 1155,719 1160,721 1165,723 1170,720 1175,732 1180,732 1186,727 1191,732 1196,728 1201,733 1206,736 1211,734 1216,736 1221,739 1227,738 1232,743 1237,741 1242,734 1247,736 1252,740 1257,741 1262,735 1268,736 1273,741 1278,743 1283,734 1288,736 1293,738 1298,736 1303,740 1309,736 1314,736 1319,738 1324,739 1329,741 1334,736 1339,742 1344,745 1350,744 1355,741 1360,741 1365,741 1370,737 1375,741 1380,737 1385,741 1390,741 1396,740 1401,741 1406,737 1411,739 1416,741 1421,741 1426,737 1431,737 1437,734 1442,740 1447,741 1452,733 1457,737 1462,741 1467,739 1472,741 1478,741 1483,738 1488,744 1493,739 1498,739" stroke="#ffffff"/>
<polyline fill="none" stroke-width="1" shape-rendering="crispEdges" points="489,744 494,738 499,735 504,737 510,738 515,740 520,741 525,741 530,741 535,739 540,738 545,740 550,742 556,736 561,738 566,736 571,741 576,743 581,734 586,735 591,736 597,740 602,735 607,737 612,739 617,739 622,738 627,740 632,739 638,740 643,737 648,739 653,734 658,739 663,736 668,737 673,735 679,741 684,739 689,738 694,737 699,734 704,739 709,736 714,738 720,738 725,734 730,737 735,741 740,735 745,738 750,735 755,735 760,733 766,731 771,734 776,733 781,735 786,739 791,738 796,738 801,734 807,734 812,730 817,733 822,730 827,735 832,736 837,737 842,735 848,733 853,727 858,736 863,733 868,733 873,732 878,732 883,729 889,729 894,734 899,736 904,728 909,729 914,730 919,731 924,730 930,727 935,733 940,736 945,736 950,738 955,734 960,736 965,738 970,735 976,732 981,736 986,738 991,739 996,734 1001,743 1006,739 1011,739 1017,735 1022,734 1027,738 1032,733 1037,735 1042,733 1047,732 1052,727 1058,734 1063,728 1068,725 1073,727 1078,722 1083,724 1088,719 1093,718 1099,717 1104,712 1109,715 1114,712 1119,708 1124,711 1129,714 1134,714 1140,714 1145,717 1150,719 1155,715 1160,721 1165,723 1170,721 1175,724 1180,723 1186,730 1191,736 1196,730 1201,728 1206,736 1211,734 1216,732 1221,739 1227,739 1232,739 1237,735 1242,739 1247,738 1252,740 1257,737 1262,739 1268,733 1273,737 1278,738 1283,737 1288,740 1293,738 1298,735 1303,736 1309,739 1314,743 1319,738 1324,740 1329,739 1334,738 1339,743 1344,732 1350,737 1355,745 1360,744 1365,739 1370,744 1375,736 1380,737 1385,736 1390,742 1396,741 1401,742 1406,737 1411,744 1416,741 1421,743 1426,740 1431,741 1437,735 1442,743 1447,741 1452,738 1457,742 1462,737 1467,739 1472,739 1478,741 1483,743 1488,740 1493,742 1498,737" stroke="#ff7f50"/>
<polyline fill="none" stroke-width="1" shape-rendering="crispEdges" points="489,741 494,745 499,743 504,739 510,741 515,735 520,738 525,738 530,739 535,735 540,736 545,737 550,737 556,739 561,745 566,735 571,737 576,735 581,734 586,736 591,734 597,741 602,737 607,738 612,740 617,739 622,735 627,738 632,743 638,742 643,740 648,737 653,741 658,743 663,738 668,738 673,739 679,738 684,737 689,737 694,731 699,738 704,738 709,738 714,738 720,737 725,737 730,734 735,734 740,733 745,742 750,739 755,736 760,740 766,731 771,735 776,734 781,730 786,733 791,736 796,737 801,736 807,737 812,737 817,736 822,731 827,732 832,732 837,739 842,732 848,733 853,730 858,732 863,730 868,735 873,738 878,730 883,732 889,734 894,727 899,728 904,725 909,731 914,729 919,734 924,731 930,727 935,727 940,738 945,733 950,735 955,733 960,731 965,731 970,736 976,737 981,740 986,740 991,732 996,735 1001,734 1006,731 1011,742 1017,736 1022,733 1027,740 1032,738 1037,730 1042,732 1047,737 1052,731 1058,733 1063,727 1068,728 1073,724 1078,725 1083,723 1088,717 1093,723 1099,719 1104,713 1109,716 1114,710 1119,709 1124,720 1129,711 1134,714 1140,712 1145,710 1150,717 1155,717 1160,714 1165,720 1170,724 1175,730 1180,730 1186,729 1191,729 1196,732 1201,731 1206,735 1211,731 1216,735 1221,741 1227,736 1232,736 1237,739 1242,739 1247,735 1252,739 1257,735 1262,736 1268,738 1273,741 1278,741 1283,741 1288,739 1293,741 1298,740 1303,743 1309,738 1314,742 1319,742 1324,743 1329,733 1334,741 1339,738 1344,736 1350,739 1355,735 1360,740 1365,741 1370,744 1375,741 1380,740 1385,739 1390,739 1396,745 1401,737 1406,742 1411,749 1416,742 1421,730 1426,739 1431,740 1437,742 1442,742 1447,737 1452,737 1457,736 1462,737 1467,738 1472,736 1478,741 1483,740 1488,737 1493,739 1498,742" stroke="#ff4090"/>
<polyline fill="none" stroke-width="1" shape-rendering="crispEdges" points="489,737 494,738 499,741 504,736 510,738 515,740 520,739 525,739 530,739 535,745 540,740 545,738 550,741 556,737 561,738 566,737 571,740 576,743 581,745 586,739 591,740 597,743 602,739 607,741 612,737 617,739 622,740 627,736 632,736 638,737 643,736 648,736 653,739 658,737 663,740 668,739 673,734 679,737 684,737 689,732 694,735 699,737 704,736 709,734 714,735 720,740 725,728 730,739 735,736 740,740 745,737 750,735 755,732 760,737 766,737 771,735 776,737 781,745 786,732 791,733 796,737 801,725 807,740 812,736 817,735 822,734 827,734 832,728 837,735 842,734 848,731 853,735 858,736 863,734 868,733 873,730 878,728 883,739 889,732 894,729 899,732 904,727 909,731 914,729 919,734 924,736 930,731 935,729 940,732 945,737 950,733 955,733 960,733 965,739 970,730 976,740 981,738 986,737 991,738 996,739 1001,737 1006,738 1011,744 1017,733 1022,737 1027,734 1032,736 1037,734 1042,735 1047,729 1052,728 1058,740 1063,728 1068,728 1073,723 1078,726 1083,725 1088,717 1093,719 1099,718 1104,718 1109,715 1114,712 1119,713 1124,711 1129,703 1134,708 1140,718 1145,716 1150,715 1155,720 1160,717 1165,724 1170,720 1175,727 1180,729 1186,731 1191,730 1196,734 1201,735 1206,738 1211,742 1216,736 1221,740 1227,740 1232,737 1237,737 1242,737 1247,741 1252,743 1257,740 1262,733 1268,736 1273,740 1278,736 1283,739 1288,741 1293,742 1298,739 1303,739 1309,737 1314,743 1319,740 1324,738 1329,735 1334,736 1339,739 1344,737 1350,735 1355,739 1360,735 1365,737 1370,732 1375,733 1380,738 1385,743 1390,739 1396,742 1401,739 1406,740 1411,744 1416,736 1421,735 1426,739 1431,739 1437,738 1442,743 1447,738 1452,737 1457,737 1462,733 1467,740 1472,742 1478,734 1483,734 1488,741 1493,736 1498,739" stroke="#40ff40"/>
<polyline fill="none" stroke-width="1" shape-rendering="crispEdges" points="489,738 494,739 499,738 504,738 510,739 515,738 520,744 525,739 530,740 535,736 540,739 545,740 550,738 556,737 561,740 566,737 571,741 576,739 581,739 586,737 591,740 597,736 602,743 607,747 612,740 617,736 622,739 627,733 632,739 638,736 643,734 648,743 653,737 658,736 663,734 668,728 673,739 679,737 684,739 689,739 694,741 699,735 704,729 709,736 714,739 720,731 725,735 730,740 735,737 740,734 745,736 750,738 755,736 760,731 766,732 771,742 776,732 781,734 786,733 791,740 796,733 801,739 807,739 812,733 817,732 822,736 827,739 832,737 837,732 842,736 848,733 853,731 858,733 863,730 868,735 873,728 878,736 883,729 889,736 894,729 899,734 904,732 909,733 914,732 919,732 924,726 930,730 935,735 940,731 945,737 950,739 955,728 960,735 965,737 970,735 976,734 981,728 986,733 991,733 996,732 1001,733 1006,742 1011,741 1017,733 1022,740 1027,739 1032,738 1037,733 1042,736 1047,729 1052,732 1058,728 1063,729 1068,731 1073,729 1078,725 1083,725 1088,723 1093,719 1099,720 1104,713 1109,716 1114,715 1119,709 1124,713 1129,714 1134,714 1140,714 1145,711 1150,721 1155,718 1160,717 1165,724 1170,724 1175,730 1180,731 1186,727 1191,732 1196,738 1201,732 1206,733 1211,736 1216,738 1221,742 1227,736 1232,738 1237,741 1242,737 1247,746 1252,739 1257,739 1262,741 1268,735 1273,741 1278,738 1283,737 1288,743 1293,739 1298,738 1303,732 1309,738 1314,738 1319,733 1324,739 1329,743 1334,740 1339,738 1344,739 1350,738 1355,742 1360,737 1365,744 1370,743 1375,744 1380,739 1385,739 1390,744 1396,739 1401,742 1406,740 1411,735 1416,736 1421,741 1426,739 1431,740 1437,741 1442,744 1447,741 1452,742 1457,739 1462,739 1467,737 1472,739 1478,744 1483,739 1488,739 1493,736 1498,738" stroke="#ffd700"/>
<polyline fill="none" stroke-width="1" shape-rendering="crispEdges" points="489,740 494,743 499,740 504,734 510,739 515,732 520,736 525,739 530,738 535,738 540,742 545,736 550,731 556,734 561,737 566,731 571,740 576,738 581,738 586,740 591,738 597,740 602,734 607,738 612,738 617,745 622,741 627,738 632,740 638,739 643,736 648,740 653,737 658,736 663,734 668,736 673,735 679,734 684,735 689,742 694,733 699,742 704,739 709,739 714,732 720,733 725,736 730,737 735,737 740,736 745,737 750,734 755,737 760,740 766,737 771,741 776,735 781,737 786,739 791,737 796,740 801,739 807,737 812,741 817,738 822,732 827,738 832,736 837,733 842,735 848,730 853,733 858,734 863,738 868,731 873,732 878,730 883,731 889,735 894,727 899,729 904,727 909,734 914,730 919,731 924,732 930,729 935,735 940,735 945,737 950,735 955,739 960,737 965,733 970,736 976,736 981,738 986,741 991,735 996,739 1001,742 1006,741 1011,736 1017,741 1022,735 1027,734 1032,733 1037,738 1042,735 1047,738 1052,735 1058,728 1063,734 1068,723 1073,733 1078,722 1083,724 1088,720 1093,722 1099,713 1104,718 1109,710 1114,718 1119,719 1124,711 1129,711 1134,710 1140,710 1145,719 1150,721 1155,717 1160,719 1165,720 1170,720 1175,726 1180,732 1186,730 1191,733 1196,740 1201,735 1206,732 1211,737 1216,735 1221,733 1227,739 1232,737 1237,744 1242,735 1247,739 1252,742 1257,740 1262,740 1268,734 1273,741 1278,739 1283,738 1288,739 1293,735 1298,729 1303,742 1309,738 1314,739 1319,743 1324,739 1329,740 1334,737 1339,739 1344,742 1350,742 1355,737 1360,738 1365,741 1370,744 1375,747 1380,740 1385,738 1390,733 1396,739 1401,739 1406,744 1411,737 1416,742 1421,735 1426,739 1431,743 1437,736 1442,741 1447,738 1452,740 1457,743 1462,737 1467,732 1472,736 1478,739 1483,733 1488,741 1493,735 1498,741" stroke="#3050ff"/>
<polyline fill="none" stroke-width="1" shape-rendering="crispEdges" points="489,734 494,738 499,741 504,740 510,740 515,736 520,738 525,739 530,742 535,742 540,741 545,742 550,735 556,738 561,735 566,737 571,735 576,739 581,738 586,739 591,737 597,744 602,735 607,740 612,741 617,743 622,740 627,740 632,739 638,739 643,733 648,734 653,738 658,741 663,735 668,739 673,738 679,740 684,737 689,741 694,740 699,734 704,740 709,738 714,731 720,742 725,736 730,739 735,737 740,737 745,739 750,736 755,737 760,737 766,738 771,741 776,733 781,739 786,741 791,740 796,733 801,732 807,737 812,741 817,740 822,730 827,736 832,736 837,737 842,732 848,734 853,731 858,730 863,732 868,733 873,735 878,731 883,733 889,728 894,735 899,732 904,731 909,733 914,728 919,733 924,730 930,734 935,735 940,731 945,734 950,739 955,735 960,736 965,738 970,735 976,732 981,732 986,738 991,738 996,738 1001,739 1006,737 1011,741 1017,740 1022,737 1027,737 1032,736 1037,733 1042,733 1047,734 1052,736 1058,735 1063,737 1068,732 1073,729 1078,720 1083,718 1088,723 1093,719 1099,715 1104,718 1109,716 1114,719 1119,718 1124,718 1129,717 1134,715 1140,715 1145,717 1150,723 1155,724 1160,724 1165,722 1170,725 1175,727 1180,723 1186,729 1191,731 1196,732 1201,734 1206,741 1211,735 1216,736 1221,741 1227,744 1232,740 1237,743 1242,740 1247,740 1252,735 1257,738 1262,740 1268,738 1273,738 1278,737 1283,739 1288,734 1293,743 1298,740 1303,739 1309,751 1314,739 1319,745 1324,735 1329,735 1334,739 1339,738 1344,739 1350,740 1355,741 1360,743 1365,738 1370,739 1375,741 1380,742 1385,742 1390,734 1396,742 1401,744 1406,742 1411,736 1416,737 1421,743 1426,739 1431,736 1437,736 1442,739 1447,740 1452,737 1457,742 1462,738 1467,741 1472,734 1478,738 1483,741 1488,737 1493,738 1498,741" stroke="#20c060"/>
<polyline fill="none" stroke-width="1" shape-rendering="crispEdges" points="489,739 494,740 499,741 504,743 510,740 515,738 520,737 525,740 530,738 535,738 540,738 545,745 550,734 556,740 561,734 566,737 571,740 576,741 581,737 586,736 591,739 597,732 602,737 607,743 612,738 617,742 622,737 627,737 632,737 638,735 643,738 648,738 653,735 658,741 663,741 668,741 673,741 679,735 684,737 689,739 694,738 699,740 704,731 709,736 714,732 720,739 725,731 730,738 735,732 740,737 745,735 750,738 755,737 760,734 766,730 771,731 776,740 781,734 786,736 791,739 796,733 801,733 807,735 812,734 817,738 822,729 827,739 832,739 837,735 842,732 848,732 853,732 858,736 863,730 868,727 873,734 878,733 883,727 889,729 894,736 899,729 904,732 909,734 914,734 919,734 924,732 930,732 935,733 940,732 945,732 950,737 955,736 960,737 965,739 970,741 976,740 981,742 986,740 991,739 996,736 1001,739 1006,738 1011,737 1017,730 1022,734 1027,731 1032,738 1037,736 1042,735 1047,733 1052,736 1058,732 1063,723 1068,724 1073,723 1078,719 1083,723 1088,723 1093,722 1099,717 1104,721 1109,719 1114,717 1119,719 1124,716 1129,713 1134,718 1140,719 1145,716 1150,717 1155,720 1160,723 1165,724 1170,726 1175,726 1180,726 1186,730 1191,733 1196,728 1201,734 1206,736 1211,734 1216,736 1221,733 1227,739 1232,733 1237,740 1242,736 1247,730 1252,746 1257,737 1262,740 1268,738 1273,739 1278,741 1283,738 1288,743 1293,743 1298,737 1303,743 1309,738 1314,735 1319,742 1324,738 1329,742 1334,739 1339,743 1344,737 1350,736 1355,742 1360,741 1365,736 1370,738 1375,742 1380,729 1385,735 1390,737 1396,741 1401,743 1406,738 1411,740 1416,742 1421,742 1426,739 1431,741 1437,740 1442,745 1447,738 1452,738 1457,743 1462,740 1467,743 1472,740 1478,745 1483,746 1488,739 1493,742 1498,739" stroke="#c0ff40"/>
<polyline fill="none" stroke-width="1" shape-rendering="crispEdges" points="489,740 494,742 499,740 504,742 510,734 515,735 520,741 525,732 530,729 535,738 540,738 545,735 550,741 556,738 561,737 566,741 571,737 576,740 581,736 586,734 591,743 597,744 602,740 607,739 612,738 617,734 622,739 627,734 632,743 638,741 643,735 648,738 653,736 658,738 663,740 668,740 673,738 679,739 684,733 689,740 694,739 699,740 704,734 709,742 714,738 720,738 725,738 730,742 735,736 740,738 745,735 750,731 755,738 760,732 766,738 771,740 776,739 781,736 786,734 791,743 796,737 801,736 807,730 812,732 817,735 822,739 827,732 832,734 837,732 842,736 848,731 853,736 858,739 863,737 868,738 873,729 878,732 883,732 889,732 894,734 899,727 904,734 909,730 914,732 919,735 924,736 930,730 935,730 940,732 945,730 950,736 955,735 960,734 965,734 970,739 976,730 981,732 986,736 991,738 996,738 1001,738 1006,738 1011,738 1017,739 1022,739 1027,736 1032,730 1037,730 1042,735 1047,733 1052,735 1058,736 1063,733 1068,728 1073,723 1078,729 1083,725 1088,723 1093,719 1099,726 1104,717 1109,715 1114,713 1119,714 1124,719 1129,716 1134,715 1140,716 1145,719 1150,721 1155,724 1160,725 1165,724 1170,730 1175,726 1180,731 1186,732 1191,735 1196,737 1201,736 1206,738 1211,739 1216,733 1221,736 1227,739 1232,741 1237,738 1242,738 1247,737 1252,739 1257,735 1262,737 1268,742 1273,739 1278,741 1283,740 1288,738 1293,739 1298,741 1303,740 1309,735 1314,738 1319,734 1324,745 1329,739 1334,738 1339,743 1344,737 1350,738 1355,741 1360,738 1365,742 1370,738 1375,739 1380,742 1385,743 1390,740 1396,742 1401,742 1406,739 1411,741 1416,733 1421,742 1426,738 1431,738 1437,747 1442,739 1447,740 1452,734 1457,741 1462,734 1467,742 1472,741 1478,739 1483,737 1488,737 1493,737 1498,734" stroke="#c0ff40"/>
<polyline fill="none" stroke-width="1" shape-rendering="crispEdges" points="489,742 494,742 499,738 504,738 510,735 515,733 520,734 525,738 530,736 535,741 540,739 545,738 550,736 556,736 561,740 566,739 571,737 576,740 581,740 586,742 591,738 597,735 602,736 607,744 612,742 617,741 622,739 627,737 632,740 638,739 643,741 648,737 653,743 658,736 663,737 668,736 673,735 679,735 684,739 689,736 694,736 699,737 704,743 709,738 714,734 720,741 725,734 730,732 735,736 740,741 745,736 750,734 755,739 760,731 766,726 771,733 776,732 781,731 786,733 791,741 796,742 801,731 807,728 812,735 817,736 822,733 827,738 832,735 837,737 842,736 848,732 853,734 858,733 863,741 868,734 873,731 878,733 883,736 889,734 894,731 899,732 904,735 909,734 914,730 919,731 924,731 930,736 935,731 940,731 945,731 950,736 955,732 960,739 965,733 970,740 976,738 981,738 986,741 991,741 996,738 1001,734 1006,734 1011,736 1017,738 1022,736 1027,735 1032,738 1037,734 1042,734 1047,732 1052,732 1058,732 1063,727 1068,734 1073,725 1078,727 1083,734 1088,723 1093,719 1099,720 1104,708 1109,718 1114,716 1119,717 1124,716 1129,717 1134,718 1140,715 1145,717 1150,722 1155,719 1160,724 1165,727 1170,722 1175,730 1180,725 1186,729 1191,731 1196,733 1201,736 1206,735 1211,735 1216,736 1221,740 1227,741 1232,742 1237,736 1242,738 1247,739 1252,741 1257,740 1262,738 1268,736 1273,740 1278,737 1283,740 1288,740 1293,735 1298,743 1303,740 1309,741 1314,737 1319,740 1324,731 1329,739 1334,739 1339,743 1344,735 1350,734 1355,735 1360,745 1365,742 1370,738 1375,740 1380,746 1385,739 1390,740 1396,740 1401,740 1406,738 1411,739 1416,739 1421,742 1426,739 1431,741 1437,737 1442,740 1447,738 1452,743 1457,739 1462,742 1467,738 1472,737 1478,737 1483,738 1488,741 1493,740 1498,740" stroke="#00c0c0"/>
<polyline fill="none" stroke-width="1" shape-rendering="crispEdges" points="489,738 494,740 499,748 504,747 510,741 515,736 520,739 525,735 530,738 535,747 540,741 545,741 550,745 556,737 561,741 566,737 571,740 576,740 581,739 586,735 591,738 597,740 602,737 607,733 612,740 617,739 622,737 627,739 632,741 638,740 643,737 648,743 653,734 658,729 663,737 668,733 673,735 679,742 684,737 689,739 694,737 699,734 704,736 709,738 714,739 720,740 725,735 730,733 735,735 740,738 745,741 750,739 755,741 760,733 766,741 771,739 776,737 781,739 786,737 791,736 796,736 801,737 807,740 812,738 817,731 822,739 827,736 832,737 837,734 842,741 848,737 853,736 858,735 863,729 868,737 873,734 878,733 883,728 889,731 894,733 899,731 904,732 909,730 914,730 919,728 924,731 930,733 935,729 940,734 945,736 950,737 955,732 960,731 965,736 970,736 976,734 981,735 986,733 991,738 996,733 1001,743 1006,734 1011,731 1017,741 1022,738 1027,736 1032,735 1037,733 1042,734 1047,732 1052,728 1058,734 1063,733 1068,732 1073,730 1078,726 1083,724 1088,727 1093,729 1099,721 1104,724 1109,720 1114,717 1119,720 1124,717 1129,718 1134,714 1140,718 1145,720 1150,720 1155,727 1160,719 1165,728 1170,728 1175,724 1180,733 1186,732 1191,724 1196,732 1201,728 1206,734 1211,734 1216,732 1221,732 1227,734 1232,734 1237,735 1242,736 1247,735 1252,739 1257,736 1262,739 1268,738 1273,743 1278,737 1283,739 1288,753 1293,739 1298,741 1303,738 1309,738 1314,743 1319,739 1324,736 1329,740 1334,744 1339,743 1344,740 1350,737 1355,736 1360,740 1365,739 1370,744 1375,741 1380,740 1385,742 1390,741 1396,739 1401,740 1406,741 1411,736 1416,739 1421,735 1426,733 1431,739 1437,741 1442,731 1447,738 1452,738 1457,737 1462,743 1467,743 1472,743 1478,738 1483,739 1488,741 1493,739 1498,739" stroke="#e0e0e0"/>
<polyline fill="none" stroke-width="1" shape-rendering="crispEdges" points="489,739 494,739 499,736 504,742 510,742 515,741 520,740 525,738 530,739 535,739 540,738 545,740 550,740 556,732 561,741 566,733 571,746 576,742 581,738 586,737 591,736 597,733 602,745 607,740 612,736 617,737 622,739 627,734 632,739 638,738 643,742 648,736 653,736 658,736 663,738 668,738 673,742 679,735 684,733 689,738 694,740 699,733 704,739 709,735 714,739 720,734 725,735 730,735 735,734 740,735 745,738 750,737 755,741 760,739 766,741 771,737 776,742 781,738 786,742 791,734 796,743 801,741 807,743 812,729 817,739 822,739 827,736 832,735 837,735 842,739 848,736 853,736 858,734 863,733 868,734 873,736 878,736 883,730 889,731 894,735 899,733 904,730 909,726 914,732 919,732 924,732 930,731 935,733 940,732 945,730 950,734 955,743 960,734 965,734 970,742 976,734 981,734 986,734 991,739 996,738 1001,737 1006,738 1011,740 1017,731 1022,741 1027,738 1032,735 1037,735 1042,735 1047,733 1052,733 1058,732 1063,736 1068,729 1073,729 1078,726 1083,726 1088,724 1093,725 1099,722 1104,719 1109,714 1114,716 1119,715 1124,716 1129,718 1134,720 1140,715 1145,721 1150,721 1155,729 1160,726 1165,731 1170,727 1175,724 1180,724 1186,733 1191,730 1196,738 1201,740 1206,743 1211,738 1216,736 1221,730 1227,738 1232,739 1237,736 1242,737 1247,743 1252,738 1257,737 1262,740 1268,737 1273,736 1278,742 1283,745 1288,738 1293,748 1298,740 1303,741 1309,741 1314,732 1319,737 1324,740 1329,734 1334,739 1339,739 1344,740 1350,738 1355,739 1360,737 1365,744 1370,738 1375,735 1380,738 1385,740 1390,740 1396,740 1401,738 1406,735 1411,743 1416,738 1421,741 1426,743 1431,739 1437,742 1442,738 1447,740 1452,741 1457,743 1462,741 1467,741 1472,740 1478,740 1483,737 1488,738 1493,738 1498,736" stroke="#7fff00"/>
<polyline fill="none" stroke-width="1" shape-rendering="crispEdges" points="489,732 494,740 499,742 504,742 510,740 515,739 520,743 525,739 530,735 535,737 540,739 545,737 550,736 556,736 561,735 566,738 571,739 576,740 581,739 586,740 591,733 597,737 602,740 607,747 612,733 617,738 622,740 627,737 632,743 638,737 643,739 648,737 653,741 658,737 663,736 668,732 673,736 679,738 684,733 689,737 694,739 699,739 704,738 709,738 714,735 720,737 725,735 730,738 735,738 740,736 745,739 750,738 755,731 760,736 766,736 771,738 776,737 781,736 786,734 791,737 796,735 801,736 807,741 812,735 817,735 822,735 827,737 832,734 837,738 842,735 848,739 853,733 858,732 863,733 868,728 873,733 878,734 883,734 889,731 894,735 899,733 904,733 909,729 914,734 919,729 924,735 930,730 935,736 940,731 945,737 950,733 955,731 960,733 965,735 970,735 976,740 981,736 986,737 991,741 996,734 1001,739 1006,737 1011,732 1017,737 1022,736 1027,735 1032,737 1037,737 1042,733 1047,736 1052,733 1058,733 1063,740 1068,733 1073,730 1078,731 1083,724 1088,727 1093,725 1099,723 1104,722 1109,717 1114,720 1119,717 1124,719 1129,717 1134,719 1140,718 1145,724 1150,724 1155,716 1160,723 1165,719 1170,726 1175,731 1180,730 1186,732 1191,731 1196,738 1201,734 1206,731 1211,731 1216,736 1221,733 1227,738 1232,736 1237,741 1242,738 1247,740 1252,735 1257,738 1262,738 1268,743 1273,741 1278,737 1283,735 1288,742 1293,739 1298,741 1303,739 1309,739 1314,749 1319,739 1324,734 1329,741 1334,733 1339,740 1344,735 1350,734 1355,738 1360,741 1365,743 1370,736 1375,738 1380,741 1385,739 1390,736 1396,738 1401,739 1406,740 1411,740 1416,732 1421,743 1426,738 1431,738 1437,742 1442,739 1447,737 1452,744 1457,739 1462,740 1467,743 1472,745 1478,742 1483,739 1488,741 1493,740 1498,743" stroke="#60a0ff"/>
<polyline fill="none" stroke-width="1" shape-rendering="crispEdges" points="489,737 494,739 499,740 504,738 510,742 515,745 520,745 525,738 530,736 535,738 540,739 545,741 550,735 556,738 561,745 566,740 571,745 576,735 581,734 586,738 591,743 597,740 602,742 607,739 612,732 617,739 622,740 627,737 632,738 638,732 643,742 648,739 653,731 658,737 663,738 668,739 673,738 679,736 684,736 689,738 694,737 699,740 704,740 709,737 714,739 720,737 725,734 730,739 735,736 740,738 745,735 750,734 755,734 760,741 766,734 771,739 776,738 781,748 786,742 791,737 796,738 801,742 807,738 812,736 817,743 822,735 827,740 832,738 837,735 842,733 848,733 853,732 858,731 863,734 868,729 873,732 878,735 883,733 889,733 894,731 899,726 904,730 909,738 914,728 919,732 924,728 930,732 935,737 940,736 945,738 950,736 955,734 960,739 965,736 970,734 976,746 981,739 986,730 991,741 996,740 1001,740 1006,735 1011,743 1017,733 1022,733 1027,735 1032,733 1037,734 1042,736 1047,735 1052,730 1058,729 1063,732 1068,732 1073,728 1078,723 1083,723 1088,723 1093,728 1099,726 1104,722 1109,724 1114,721 1119,721 1124,721 1129,718 1134,722 1140,723 1145,723 1150,721 1155,724 1160,726 1165,724 1170,727 1175,728 1180,729 1186,735 1191,733 1196,732 1201,738 1206,736 1211,736 1216,737 1221,737 1227,735 1232,744 1237,737 1242,736 1247,740 1252,743 1257,737 1262,740 1268,742 1273,738 1278,740 1283,735 1288,739 1293,741 1298,741 1303,737 1309,740 1314,735 1319,734 1324,734 1329,736 1334,740 1339,734 1344,740 1350,738 1355,738 1360,736 1365,742 1370,739 1375,739 1380,738 1385,743 1390,740 1396,739 1401,738 1406,737 1411,737 1416,734 1421,742 1426,741 1431,740 1437,738 1442,737 1447,735 1452,742 1457,741 1462,741 1467,740 1472,744 1478,741 1483,733 1488,736 1493,738 1498,736" stroke="#00ffff"/>
<polyline fill="none" stroke-width="1" shape-rendering="crispEdges" points="489,740 494,736 499,742 504,739 510,737 515,740 520,743 525,734 530,742 535,740 540,739 545,743 550,740 556,735 561,738 566,736 571,740 576,736 581,740 586,736 591,741 597,735 602,739 607,738 612,734 617,738 622,735 627,738 632,736 638,739 643,736 648,740 653,734 658,739 663,738 668,736 673,737 679,740 684,734 689,738 694,744 699,733 704,740 709,739 714,734 720,736 725,743 730,737 735,741 740,734 745,736 750,738 755,741 760,738 766,737 771,738 776,731 781,741 786,732 791,738 796,733 801,737 807,737 812,733 817,740 822,741 827,740 832,733 837,737 842,736 848,738 853,737 858,735 863,736 868,732 873,734 878,738 883,729 889,734 894,727 899,729 904,730 909,731 914,732 919,734 924,734 930,735 935,734 940,738 945,731 950,737 955,736 960,734 965,743 970,741 976,736 981,734 986,736 991,735 996,735 1001,735 1006,738 1011,740 1017,739 1022,740 1027,741 1032,740 1037,735 1042,738 1047,738 1052,733 1058,735 1063,727 1068,736 1073,733 1078,728 1083,729 1088,726 1093,722 1099,719 1104,725 1109,728 1114,719 1119,720 1124,717 1129,722 1134,718 1140,724 1145,722 1150,723 1155,721 1160,726 1165,728 1170,728 1175,723 1180,735 1186,730 1191,729 1196,735 1201,741 1206,731 1211,738 1216,737 1221,735 1227,737 1232,739 1237,732 1242,741 1247,737 1252,741 1257,742 1262,736 1268,737 1273,743 1278,738 1283,737 1288,742 1293,742 1298,737 1303,746 1309,732 1314,737 1319,740 1324,736 1329,735 1334,737 1339,734 1344,741 1350,741 1355,737 1360,741 1365,738 1370,739 1375,738 1380,734 1385,736 1390,735 1396,740 1401,735 1406,739 1411,741 1416,737 1421,740 1426,741 1431,738 1437,738 1442,732 1447,738 1452,738 1457,737 1462,738 1467,736 1472,735 1478,738 1483,741 1488,738 1493,736 1498,736" stroke="#ff00ff"/>
<polyline fill="none" stroke-width="1" shape-rendering="crispEdges" points="489,739 494,738 499,739 504,737 510,740 515,735 520,743 525,739 530,737 535,740 540,739 545,738 550,735 556,740 561,738 566,736 571,738 576,733 581,735 586,734 591,738 597,734 602,734 607,737 612,740 617,738 622,736 627,737 632,741 638,741 643,735 648,740 653,741 658,739 663,740 668,740 673,734 679,740 684,742 689,736 694,735 699,742 704,734 709,736 714,739 720,738 725,738 730,740 735,742 740,738 745,735 750,733 755,735 760,738 766,736 771,738 776,737 781,730 786,738 791,740 796,740 801,738 807,739 812,738 817,736 822,740 827,733 832,737 837,740 842,739 848,734 853,734 858,733 863,740 868,736 873,726 878,734 883,733 889,733 894,726 899,735 904,732 909,734 914,730 919,736 924,732 930,727 935,730 940,731 945,738 950,735 955,733 960,741 965,736 970,739 976,737 981,736 986,735 991,739 996,735 1001,742 1006,737 1011,741 1017,741 1022,737 1027,733 1032,743 1037,734 1042,735 1047,732 1052,727 1058,737 1063,728 1068,732 1073,727 1078,728 1083,726 1088,722 1093,725 1099,723 1104,721 1109,718 1114,724 1119,726 1124,719 1129,719 1134,722 1140,725 1145,718 1150,719 1155,724 1160,726 1165,731 1170,729 1175,730 1180,731 1186,731 1191,736 1196,733 1201,734 1206,736 1211,734 1216,735 1221,739 1227,736 1232,739 1237,738 1242,734 1247,739 1252,737 1257,744 1262,745 1268,740 1273,743 1278,741 1283,745 1288,740 1293,743 1298,739 1303,740 1309,743 1314,738 1319,741 1324,740 1329,738 1334,739 1339,732 1344,741 1350,740 1355,738 1360,746 1365,740 1370,741 1375,735 1380,739 1385,739 1390,740 1396,744 1401,745 1406,740 1411,738 1416,737 1421,737 1426,740 1431,739 1437,732 1442,742 1447,740 1452,743 1457,739 1462,742 1467,738 1472,733 1478,736 1483,739 1488,736 1493,740 1498,743" stroke="#d0a000"/>
<polyline fill="none" stroke-width="1" shape-rendering="crispEdges" points="489,741 494,738 499,732 504,740 510,737 515,742 520,739 525,739 530,742 535,736 540,735 545,740 550,736 556,737 561,740 566,746 571,743 576,740 581,742 586,736 591,736 597,739 602,739 607,736 612,730 617,735 622,741 627,740 632,740 638,736 643,738 648,742 653,737 658,740 663,734 668,734 673,738 679,737 684,739 689,742 694,734 699,742 704,739 709,737 714,741 720,739 725,740 730,742 735,735 740,737 745,738 750,744 755,742 760,737 766,738 771,739 776,741 781,737 786,735 791,738 796,736 801,734 807,731 812,736 817,738 822,743 827,738 832,736 837,739 842,734 848,738 853,733 858,735 863,731 868,735 873,735 878,733 883,735 889,737 894,732 899,735 904,736 909,731 914,731 919,732 924,740 930,732 935,733 940,728 945,736 950,736 955,732 960,735 965,739 970,737 976,733 981,738 986,738 991,735 996,739 1001,744 1006,739 1011,740 1017,732 1022,735 1027,738 1032,736 1037,740 1042,732 1047,736 1052,735 1058,735 1063,729 1068,733 1073,724 1078,728 1083,725 1088,724 1093,730 1099,720 1104,715 1109,721 1114,723 1119,722 1124,723 1129,716 1134,724 1140,730 1145,722 1150,720 1155,721 1160,725 1165,729 1170,724 1175,729 1180,734 1186,729 1191,735 1196,731 1201,739 1206,740 1211,737 1216,736 1221,741 1227,736 1232,739 1237,739 1242,734 1247,741 1252,738 1257,738 1262,737 1268,741 1273,738 1278,739 1283,745 1288,736 1293,737 1298,745 1303,741 1309,742 1314,741 1319,741 1324,739 1329,740 1334,741 1339,738 1344,741 1350,735 1355,743 1360,737 1365,738 1370,743 1375,736 1380,741 1385,745 1390,734 1396,742 1401,737 1406,740 1411,733 1416,741 1421,735 1426,732 1431,737 1437,740 1442,738 1447,736 1452,740 1457,741 1462,736 1467,743 1472,738 1478,735 1483,738 1488,740 1493,740 1498,737" stroke="#7fff00"/>
<polyline fill="none" stroke-width="1" shape-rendering="crispEdges" points="489,737 494,734 499,739 504,739 510,742 515,735 520,738 525,742 530,740 535,737 540,738 545,743 550,739 556,739 561,737 566,744 571,736 576,738 581,740 586,737 591,735 597,735 602,739 607,740 612,736 617,739 622,739 627,740 632,736 638,740 643,739 648,735 653,738 658,734 663,737 668,736 673,736 679,740 684,741 689,736 694,735 699,739 704,740 709,743 714,737 720,732 725,737 730,737 735,739 740,740 745,738 750,740 755,734 760,740 766,735 771,742 776,737 781,738 786,740 791,737 796,737 801,741 807,744 812,733 817,732 822,736 827,735 832,741 837,737 842,738 848,732 853,731 858,736 863,741 868,730 873,738 878,737 883,735 889,735 894,738 899,733 904,733 909,735 914,733 919,730 924,729 930,738 935,735 940,733 945,735 950,737 955,736 960,733 965,740 970,737 976,739 981,740 986,739 991,741 996,738 1001,732 1006,736 1011,736 1017,736 1022,740 1027,732 1032,733 1037,734 1042,735 1047,738 1052,739 1058,735 1063,732 1068,733 1073,735 1078,727 1083,728 1088,728 1093,732 1099,725 1104,724 1109,721 1114,723 1119,720 1124,724 1129,718 1134,724 1140,724 1145,718 1150,725 1155,727 1160,726 1165,734 1170,732 1175,728 1180,732 1186,728 1191,734 1196,739 1201,737 1206,735 1211,742 1216,735 1221,740 1227,739 1232,740 1237,734 1242,738 1247,741 1252,744 1257,733 1262,734 1268,742 1273,740 1278,735 1283,737 1288,738 1293,738 1298,742 1303,737 1309,738 1314,743 1319,742 1324,739 1329,740 1334,742 1339,740 1344,737 1350,737 1355,737 1360,739 1365,739 1370,739 1375,738 1380,745 1385,742 1390,744 1396,743 1401,739 1406,739 1411,743 1416,739 1421,740 1426,744 1431,740 1437,736 1442,739 1447,741 1452,744 1457,739 1462,744 1467,739 1472,742 1478,737 1483,740 1488,741 1493,737 1498,736" stroke="#ffff00"/>
<polyline fill="none" stroke-width="1" shape-rendering="crispEdges" points="489,735 494,742 499,737 504,740 510,738 515,745 520,737 525,738 530,741 535,740 540,741 545,742 550,741 556,733 561,739 566,735 571,743 576,738 581,741 586,742 591,731 597,739 602,742 607,742 612,738 617,737 622,737 627,737 632,738 638,740 643,738 648,740 653,740 658,734 663,735 668,736 673,738 679,740 684,740 689,734 694,740 699,734 704,740 709,741 714,736 720,742 725,734 730,738 735,735 740,743 745,732 750,737 755,733 760,738 766,733 771,737 776,739 781,740 786,737 791,737 796,742 801,740 807,735 812,735 817,739 822,740 827,732 832,737 837,738 842,740 848,739 853,739 858,735 863,732 868,733 873,741 878,735 883,727 889,739 894,731 899,731 904,728 909,733 914,737 919,734 924,735 930,731 935,734 940,735 945,738 950,732 955,734 960,731 965,734 970,736 976,734 981,734 986,735 991,733 996,744 1001,739 1006,744 1011,739 1017,733 1022,739 1027,736 1032,736 1037,740 1042,727 1047,741 1052,733 1058,736 1063,734 1068,736 1073,730 1078,731 1083,729 1088,733 1093,723 1099,722 1104,726 1109,721 1114,727 1119,727 1124,722 1129,721 1134,724 1140,721 1145,717 1150,716 1155,728 1160,728 1165,726 1170,728 1175,733 1180,731 1186,730 1191,730 1196,736 1201,734 1206,738 1211,738 1216,737 1221,739 1227,738 1232,740 1237,742 1242,743 1247,738 1252,740 1257,738 1262,742 1268,732 1273,745 1278,735 1283,742 1288,739 1293,737 1298,738 1303,736 1309,739 1314,739 1319,736 1324,742 1329,741 1334,737 1339,738 1344,739 1350,740 1355,737 1360,738 1365,740 1370,750 1375,738 1380,739 1385,738 1390,742 1396,736 1401,742 1406,738 1411,739 1416,737 1421,741 1426,738 1431,742 1437,735 1442,735 1447,741 1452,740 1457,740 1462,737 1467,738 1472,738 1478,738 1483,743 1488,736 1493,739 1498,736" stroke="#ffd700"/>
<polyline fill="none" stroke-width="1" shape-rendering="crispEdges" points="489,742 494,737 499,734 504,741 510,738 515,737 520,740 525,739 530,743 535,734 540,739 545,741 550,741 556,736 561,739 566,740 571,736 576,736 581,740 586,738 591,737 597,739 602,741 607,742 612,739 617,742 622,737 627,740 632,737 638,743 643,740 648,739 653,737 658,741 663,742 668,740 673,741 679,736 684,735 689,737 694,737 699,738 704,735 709,738 714,734 720,734 725,738 730,737 735,742 740,740 745,743 750,734 755,742 760,738 766,736 771,732 776,735 781,740 786,740 791,733 796,742 801,736 807,738 812,732 817,741 822,737 827,739 832,738 837,731 842,737 848,738 853,738 858,738 863,736 868,738 873,731 878,736 883,734 889,739 894,731 899,732 904,733 909,731 914,730 919,733 924,733 930,731 935,735 940,732 945,735 950,736 955,737 960,740 965,733 970,732 976,746 981,737 986,740 991,739 996,735 1001,735 1006,736 1011,738 1017,739 1022,737 1027,739 1032,740 1037,736 1042,735 1047,735 1052,733 1058,735 1063,729 1068,731 1073,734 1078,730 1083,724 1088,729 1093,725 1099,723 1104,726 1109,723 1114,724 1119,724 1124,720 1129,727 1134,723 1140,727 1145,728 1150,728 1155,726 1160,728 1165,727 1170,735 1175,732 1180,736 1186,731 1191,732 1196,733 1201,738 1206,735 1211,740 1216,740 1221,737 1227,743 1232,740 1237,741 1242,735 1247,739 1252,742 1257,738 1262,738 1268,738 1273,742 1278,738 1283,744 1288,736 1293,740 1298,736 1303,742 1309,741 1314,737 1319,735 1324,748 1329,740 1334,744 1339,741 1344,734 1350,743 1355,739 1360,739 1365,739 1370,736 1375,734 1380,736 1385,737 1390,738 1396,743 1401,736 1406,735 1411,741 1416,738 1421,737 1426,740 1431,738 1437,735 1442,736 1447,740 1452,739 1457,740 1462,743 1467,738 1472,737 1478,739 1483,742 1488,738 1493,739 1498,739" stroke="#008080"/>
<polyline fill="none" stroke-width="1" shape-rendering="crispEdges" points="489,735 494,735 499,739 504,736 510,741 515,734 520,737 525,738 530,737 535,740 540,738 545,740 550,739 556,738 561,737 566,739 571,737 576,734 581,741 586,735 591,735 597,737 602,735 607,734 612,738 617,740 622,739 627,740 632,735 638,740 643,741 648,740 653,737 658,738 663,740 668,737 673,742 679,735 684,739 689,740 694,738 699,736 704,738 709,737 714,722 720,736 725,739 730,736 735,733 740,740 745,737 750,743 755,732 760,743 766,740 771,742 776,738 781,737 786,735 791,736 796,739 801,731 807,735 812,736 817,738 822,736 827,738 832,734 837,733 842,735 848,730 853,735 858,738 863,734 868,733 873,736 878,735 883,736 889,737 894,732 899,732 904,732 909,732 914,727 919,730 924,731 930,737 935,734 940,735 945,732 950,738 955,737 960,737 965,737 970,737 976,741 981,736 986,737 991,745 996,733 1001,739 1006,740 1011,734 1017,734 1022,738 1027,735 1032,734 1037,734 1042,738 1047,739 1052,732 1058,736 1063,730 1068,733 1073,728 1078,729 1083,727 1088,728 1093,723 1099,725 1104,727 1109,722 1114,724 1119,719 1124,725 1129,722 1134,723 1140,724 1145,725 1150,725 1155,728 1160,726 1165,734 1170,727 1175,734 1180,730 1186,735 1191,737 1196,739 1201,734 1206,740 1211,740 1216,736 1221,735 1227,738 1232,737 1237,737 1242,735 1247,743 1252,734 1257,736 1262,736 1268,735 1273,737 1278,740 1283,743 1288,733 1293,743 1298,740 1303,739 1309,740 1314,745 1319,737 1324,741 1329,740 1334,737 1339,738 1344,738 1350,740 1355,742 1360,739 1365,742 1370,739 1375,741 1380,739 1385,741 1390,737 1396,747 1401,741 1406,739 1411,741 1416,737 1421,741 1426,740 1431,743 1437,744 1442,744 1447,735 1452,738 1457,739 1462,747 1467,736 1472,741 1478,737 1483,739 1488,737 1493,739 1498,739" stroke="#e0e0e0"/>
<polyline fill="none" stroke-width="1" shape-rendering="crispEdges" points="489,739 494,740 499,742 504,742 510,734 515,737 520,740 525,743 530,737 535,738 540,741 545,738 550,739 556,735 561,745 566,733 571,743 576,743 581,736 586,736 591,738 597,730 602,732 607,737 612,741 617,733 622,740 627,743 632,739 638,738 643,743 648,735 653,738 658,734 663,744 668,736 673,737 679,735 684,737 689,736 694,739 699,739 704,736 709,735 714,737 720,735 725,737 730,738 735,737 740,734 745,738 750,739 755,733 760,741 766,740 771,731 776,735 781,742 786,741 791,736 796,733 801,730 807,740 812,737 817,739 822,736 827,733 832,738 837,739 842,736 848,737 853,736 858,736 863,727 868,736 873,738 878,736 883,737 889,737 894,732 899,737 904,737 909,734 914,732 919,736 924,731 930,732 935,733 940,733 945,735 950,734 955,737 960,742 965,736 970,736 976,740 981,736 986,737 991,737 996,737 1001,735 1006,738 1011,740 1017,738 1022,733 1027,734 1032,737 1037,742 1042,737 1047,738 1052,734 1058,736 1063,732 1068,734 1073,736 1078,728 1083,727 1088,726 1093,722 1099,726 1104,723 1109,725 1114,723 1119,722 1124,721 1129,722 1134,726 1140,726 1145,723 1150,725 1155,727 1160,720 1165,726 1170,729 1175,733 1180,735 1186,733 1191,739 1196,735 1201,738 1206,739 1211,738 1216,737 1221,740 1227,739 1232,737 1237,744 1242,740 1247,744 1252,742 1257,742 1262,734 1268,738 1273,741 1278,738 1283,737 1288,740 1293,735 1298,740 1303,736 1309,734 1314,742 1319,739 1324,741 1329,736 1334,743 1339,742 1344,742 1350,740 1355,741 1360,736 1365,738 1370,735 1375,739 1380,737 1385,738 1390,743 1396,742 1401,740 1406,741 1411,735 1416,740 1421,741 1426,739 1431,734 1437,742 1442,739 1447,735 1452,738 1457,737 1462,737 1467,743 1472,738 1478,736 1483,742 1488,736 1493,738 1498,736" stroke="#ff2020"/>
<polyline fill="none" stroke-width="1" shape-rendering="crispEdges" points="489,742 494,741 499,741 504,740 510,741 515,744 520,740 525,739 530,739 535,738 540,736 545,735 550,741 556,735 561,739 566,740 571,739 576,738 581,742 586,740 591,741 597,738 602,736 607,739 612,743 617,739 622,738 627,740 632,738 638,737 643,740 648,735 653,740 658,742 663,742 668,736 673,738 679,739 684,739 689,739 694,742 699,735 704,737 709,737 714,739 720,742 725,734 730,739 735,738 740,739 745,739 750,736 755,739 760,741 766,738 771,741 776,744 781,738 786,734 791,739 796,735 801,739 807,738 812,738 817,740 822,733 827,738 832,736 837,736 842,736 848,738 853,743 858,734 863,734 868,734 873,732 878,738 883,732 889,735 894,732 899,734 904,731 909,736 914,736 919,738 924,736 930,738 935,739 940,738 945,736 950,739 955,734 960,734 965,737 970,735 976,735 981,733 986,739 991,737 996,743 1001,740 1006,736 1011,740 1017,737 1022,738 1027,742 1032,737 1037,735 1042,741 1047,736 1052,738 1058,735 1063,734 1068,731 1073,731 1078,732 1083,729 1088,731 1093,726 1099,729 1104,730 1109,733 1114,726 1119,722 1124,723 1129,722 1134,723 1140,727 1145,729 1150,723 1155,725 1160,729 1165,729 1170,729 1175,733 1180,729 1186,739 1191,736 1196,737 1201,738 1206,734 1211,739 1216,741 1221,739 1227,733 1232,743 1237,743 1242,740 1247,741 1252,745 1257,740 1262,742 1268,738 1273,736 1278,740 1283,739 1288,742 1293,739 1298,738 1303,743 1309,740 1314,742 1319,745 1324,741 1329,739 1334,740 1339,737 1344,738 1350,739 1355,745 1360,741 1365,742 1370,738 1375,736 1380,738 1385,738 1390,742 1396,742 1401,739 1406,744 1411,744 1416,735 1421,742 1426,738 1431,746 1437,740 1442,739 1447,735 1452,736 1457,739 1462,739 1467,743 1472,730 1478,735 1483,737 1488,738 1493,735 1498,738" stroke="#7fff00"/>
<polyline fill="none" stroke-width="1" shape-rendering="crispEdges" points="489,737 494,737 499,738 504,741 510,734 515,739 520,737 525,739 530,741 535,734 540,743 545,737 550,739 556,741 561,736 566,743 571,743 576,745 581,742 586,740 591,737 597,740 602,735 607,739 612,738 617,745 622,738 627,738 632,739 638,744 643,741 648,737 653,737 658,739 663,738 668,740 673,734 679,743 684,735 689,734 694,742 699,736 704,734 709,734 714,740 720,737 725,735 730,736 735,739 740,733 745,737 750,736 755,736 760,740 766,738 771,736 776,739 781,731 786,738 791,739 796,735 801,741 807,742 812,740 817,734 822,736 827,737 832,742 837,733 842,733 848,734 853,732 858,736 863,738 868,733 873,730 878,733 883,738 889,740 894,735 899,740 904,733 909,731 914,735 919,730 924,735 930,733 935,739 940,729 945,736 950,732 955,737 960,735 965,739 970,742 976,736 981,736 986,741 991,738 996,738 1001,739 1006,738 1011,736 1017,745 1022,737 1027,741 1032,741 1037,736 1042,741 1047,735 1052,739 1058,730 1063,736 1068,728 1073,726 1078,732 1083,731 1088,730 1093,728 1099,726 1104,726 1109,727 1114,724 1119,726 1124,720 1129,726 1134,726 1140,717 1145,724 1150,728 1155,731 1160,729 1165,724 1170,735 1175,732 1180,735 1186,734 1191,731 1196,738 1201,740 1206,741 1211,739 1216,738 1221,736 1227,737 1232,740 1237,741 1242,738 1247,733 1252,740 1257,740 1262,742 1268,736 1273,737 1278,738 1283,740 1288,740 1293,737 1298,742 1303,741 1309,742 1314,740 1319,744 1324,736 1329,741 1334,740 1339,738 1344,737 1350,737 1355,735 1360,739 1365,739 1370,740 1375,737 1380,737 1385,740 1390,739 1396,738 1401,743 1406,741 1411,738 1416,740 1421,739 1426,741 1431,738 1437,735 1442,739 1447,736 1452,739 1457,738 1462,736 1467,740 1472,742 1478,741 1483,736 1488,736 1493,736 1498,733" stroke="#ff7f50"/>
</g></svg>
<div class="t" style="left:460.20px;top:731.67px;font-size:12.5px;color:#000;-webkit-text-stroke:0.15px;letter-spacing:0.649px;">0</div>
<div class="t" style="left:452.60px;top:580.67px;font-size:12.5px;color:#000;-webkit-text-stroke:0.15px;letter-spacing:0.649px;">50</div>
<div class="t" style="left:445.00px;top:429.67px;font-size:12.5px;color:#000;-webkit-text-stroke:0.15px;letter-spacing:0.649px;">100</div>
<div class="t" style="left:445.00px;top:278.67px;font-size:12.5px;color:#000;-webkit-text-stroke:0.15px;letter-spacing:0.649px;">150</div>
<div class="t" style="left:445.00px;top:127.67px;font-size:12.5px;color:#000;-webkit-text-stroke:0.15px;letter-spacing:0.649px;">200</div>
<div class="t" style="left:731.90px;top:787.07px;font-size:12.5px;color:#000;-webkit-text-stroke:0.15px;letter-spacing:0.649px;">50</div>
<div class="t" style="left:984.20px;top:787.07px;font-size:12.5px;color:#000;-webkit-text-stroke:0.15px;letter-spacing:0.649px;">100</div>
<div class="t" style="left:1240.30px;top:787.07px;font-size:12.5px;color:#000;-webkit-text-stroke:0.15px;letter-spacing:0.649px;">150</div>
<div class="t" style="left:956.5px;top:803.2px;font-size:14.5px;font-weight:bold;width:74px;text-align:center">Time [a.u.]</div>
<div class="t" style="left:401px;top:432.5px;font-size:14.4px;font-weight:bold;width:58px;text-align:center;transform:rotate(-90deg);transform-origin:50% 50%">I(t) [a.u.]</div>
<div class="r" style="left:0px;top:0px;width:1px;height:929px;background:#8a8a8a;"></div>
<div class="r" style="left:1px;top:4px;width:2px;height:925px;background:#fff;"></div>
<div class="r" style="left:1515px;top:27px;width:2px;height:902px;background:#fff;"></div>
<div class="r" style="left:1517px;top:4px;width:1px;height:925px;background:#8a8a8a;"></div>
<div class="r" style="left:1px;top:926px;width:1516px;height:2px;background:#fff;"></div>
<div class="r" style="left:0px;top:928px;width:1518px;height:1px;background:#6a6a6a;"></div>
<svg class="r" style="left:0;top:0" width="1518" height="8"><path d="M0 0H6Q0.5 0.5 0 6Z" fill="#111"/><path d="M1518 0H1512Q1517.5 0.5 1518 6Z" fill="#111"/></svg>
<svg class="r" style="left:1419px;top:0" width="99" height="30" viewBox="0 0 99 30">
<defs><linearGradient id="wg" x1="0" y1="0" x2="0" y2="1"><stop offset="0" stop-color="#b4b4b4"/><stop offset="0.45" stop-color="#d2d2d2"/><stop offset="0.55" stop-color="#bcbcbc"/><stop offset="1" stop-color="#d4d4d4"/></linearGradient></defs>
<path d="M2 0 H99 V27 H8 Q2 27 2 20 Z" fill="url(#wg)" stroke="#a8a8a8" stroke-width="1"/>
<g fill="#fff" stroke="#7a7a7a" stroke-width="0.9">
<path d="M16.5 10.5 L21 15 H18.3 V19 H14.7 V15 H12 Z"/>
<rect x="35" y="16.5" width="7" height="3"/>
<path d="M56 10.5 h9 v9 h-9 z M58 13 v4.5 h5 v-4.5 z" fill-rule="evenodd"/>
<path d="M77.5 11.5 l1.8 -1.8 l3.2 3.2 l3.2 -3.2 l1.8 1.8 l-3.2 3.2 l3.2 3.2 l-1.8 1.8 l-3.2 -3.2 l-3.2 3.2 l-1.8 -1.8 l3.2 -3.2 z"/>
</g></svg>
<svg class="r" style="left:0;top:0" width="32" height="30"><circle cx="13" cy="6" r="2" fill="#c000c0"/><circle cx="15" cy="8" r="2.2" fill="#208050"/><circle cx="18" cy="10" r="1.8" fill="#e01010"/><circle cx="12" cy="10" r="1.5" fill="#e01010"/><circle cx="10" cy="11" r="1.8" fill="#f0f000"/><circle cx="16" cy="11" r="2" fill="#f0f000"/><circle cx="12" cy="13" r="2" fill="#00d8e0"/><circle cx="8" cy="14.5" r="2.5" fill="#f0f000"/><circle cx="15" cy="13.5" r="1.8" fill="#f0f000"/><circle cx="18.5" cy="14" r="2" fill="#e01010"/><circle cx="21.5" cy="15.5" r="1.6" fill="#e01010"/><circle cx="23.5" cy="16" r="1.3" fill="#0000f0"/><circle cx="13" cy="16" r="1.5" fill="#f0a000"/><circle cx="16" cy="15.5" r="1.5" fill="#00d0d0"/><circle cx="10.5" cy="17.5" r="1.6" fill="#0020e0"/><circle cx="9" cy="18" r="1.4" fill="#f0f000"/><circle cx="15.5" cy="17.5" r="1.5" fill="#e01010"/><circle cx="18.5" cy="18.5" r="2" fill="#e01010"/><circle cx="13" cy="20" r="2.3" fill="#208050"/><circle cx="21" cy="19" r="1.3" fill="#f0a000"/><circle cx="16" cy="20.5" r="1.4" fill="#f0a000"/><circle cx="20" cy="20.5" r="1.4" fill="#00d0d0"/><circle cx="24.5" cy="21.5" r="2.3" fill="#f0f000"/><circle cx="18.5" cy="22.5" r="2" fill="#e01010"/><circle cx="12.5" cy="23" r="2" fill="#f0f000"/><circle cx="16" cy="24" r="1.4" fill="#0000f0"/><circle cx="21" cy="23" r="1.2" fill="#4060ff"/></svg>
</body></html>
